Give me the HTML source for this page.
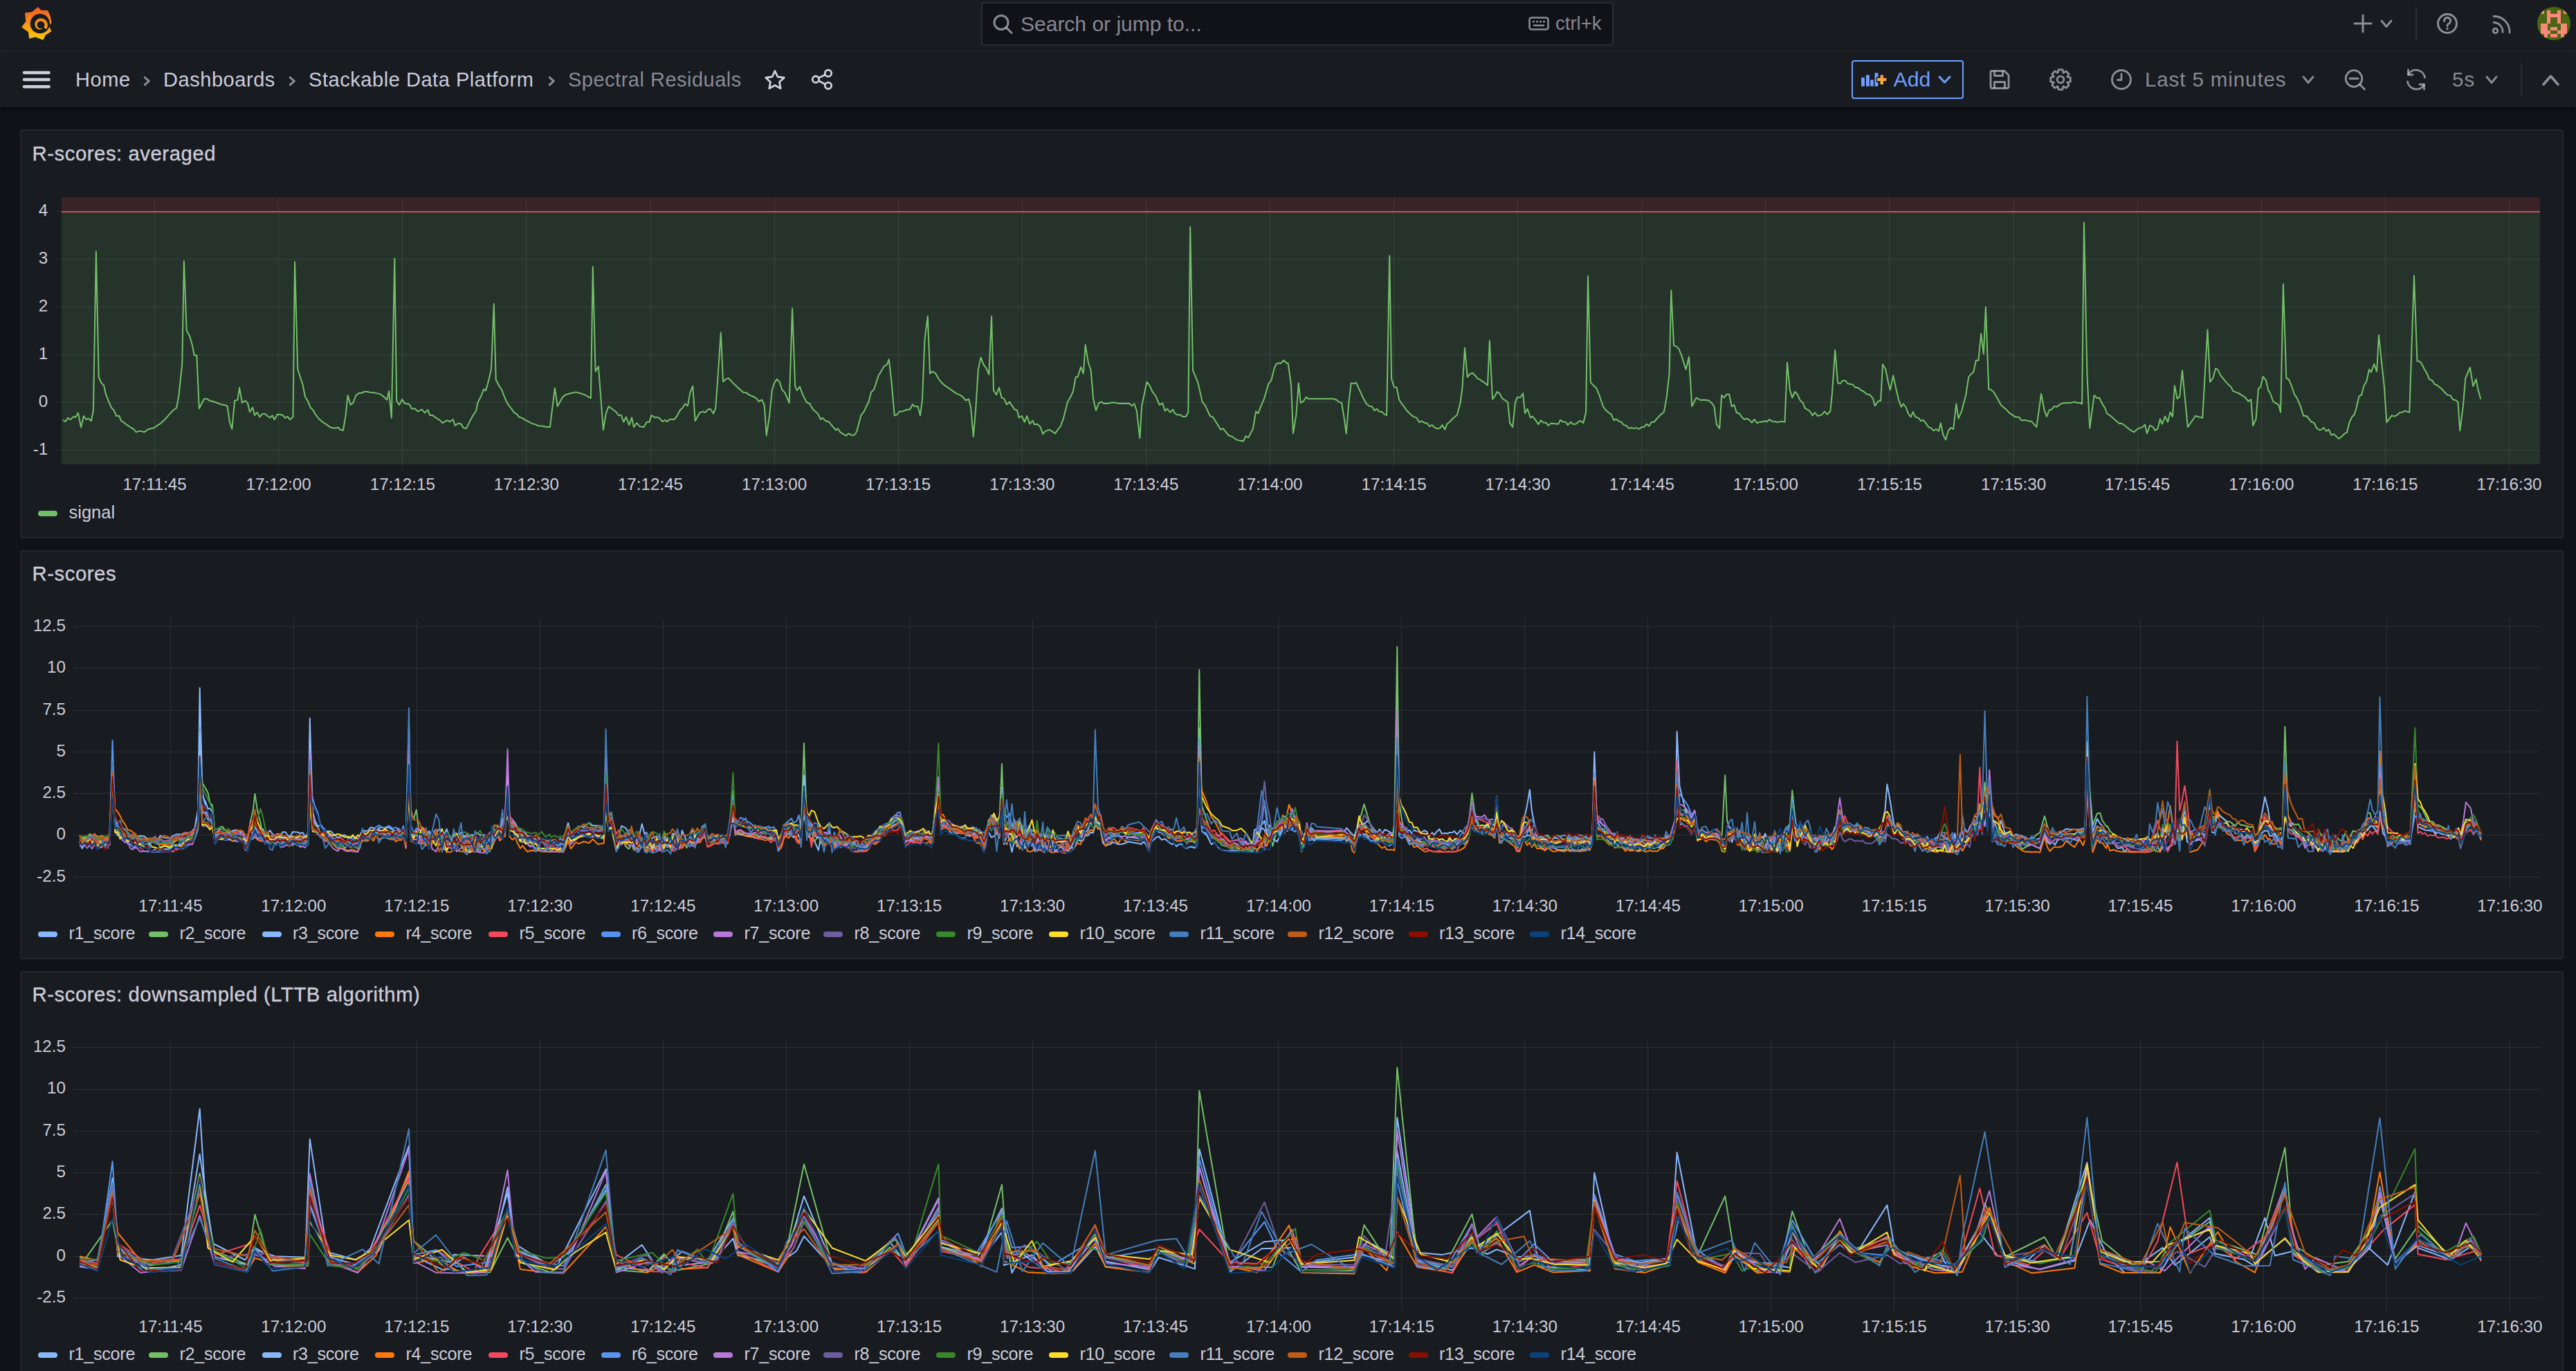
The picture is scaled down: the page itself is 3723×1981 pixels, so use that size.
<!DOCTYPE html><html><head><meta charset="utf-8"><title>Spectral Residuals - Dashboards - Grafana</title><style>
*{box-sizing:border-box;margin:0;padding:0}
html,body{width:3723px;height:1981px;overflow:hidden;background:#111217;font-family:"Liberation Sans", sans-serif;color:#ccccdc}
.abs{position:absolute}
.t{position:absolute;white-space:nowrap;line-height:1}
.bar{position:absolute;left:0;width:3723px;background:#181b1f}
.panel{position:absolute;left:29px;width:3676px;height:591px;background:#181b1f;border:2px solid #25272c;border-radius:4px}
svg{position:absolute;left:0;top:0;overflow:visible}
</style></head><body>
<div class="bar" style="top:0;height:75px;border-bottom:2px solid #2a2c32"></div>
<div class="bar" style="top:75px;height:80px;box-shadow:0 1px 5px rgba(0,0,0,0.9)"></div>
<svg width="110" height="70" style="left:0;top:0"><defs><linearGradient id="lg" gradientUnits="userSpaceOnUse" x1="0" y1="10" x2="0" y2="58"><stop offset="0" stop-color="#f05a28"/><stop offset="1" stop-color="#fbca0a"/></linearGradient></defs><path fill="url(#lg)" d="M55.0,10.1 L59.3,14.8 L69.1,15.0 L72.8,23.5 L74.6,32.8 L70.8,37.2 L74.4,45.2 L65.8,50.8 L62.4,57.7 L51.1,53.6 L42.2,55.7 L40.9,46.3 L31.1,39.3 L37.3,31.1 L36.0,18.5 L46.2,17.3Z"/><circle cx="57.8" cy="34.2" r="14.1" fill="#181b1f"/><path fill="url(#lg)" d="M66.74,42.29 L67.31,41.49 L67.79,40.64 L68.20,39.75 L68.51,38.83 L68.73,37.88 L68.85,36.92 L68.88,35.96 L68.82,35.00 L68.67,34.05 L68.42,33.13 L68.09,32.23 L67.67,31.38 L67.18,30.57 L66.60,29.82 L65.96,29.13 L65.26,28.51 L64.51,27.96 L63.70,27.49 L62.86,27.10 L61.99,26.79 L61.09,26.57 L60.18,26.44 L59.26,26.40 L58.35,26.45 L57.45,26.59 L56.56,26.81 L55.71,27.12 L54.90,27.51 L54.13,27.97 L53.41,28.51 L52.74,29.11 L52.14,29.77 L51.61,30.48 L51.21,31.27 L50.88,32.09 L50.64,32.92 L50.49,33.77 L50.41,34.62 L50.43,35.46 L50.52,36.29 L50.69,37.10 L50.95,37.88 L51.27,38.63 L51.66,39.33 L52.11,39.98 L52.62,40.58 L53.18,41.12 L53.78,41.60 L54.47,41.94 L55.18,42.20 L55.89,42.39 L56.60,42.50 L57.31,42.54 L58.00,42.50 L58.66,42.40 L59.30,42.23 L59.90,42.00 L60.46,41.71 L60.97,41.38 L61.43,41.01 L61.30,40.74 L60.81,40.94 L60.30,41.08 L59.78,41.18 L59.25,41.23 L58.72,41.22 L58.20,41.17 L57.68,41.06 L57.18,40.90 L56.69,40.70 L56.23,40.44 L55.79,40.15 L55.39,39.81 L55.02,39.44 L54.69,39.03 L54.40,38.59 L54.16,38.13 L53.96,37.64 L53.81,37.14 L53.71,36.63 L53.66,36.11 L53.66,35.59 L53.72,35.07 L53.82,34.56 L53.97,34.07 L54.17,33.59 L54.41,33.13 L54.70,32.70 L55.03,32.31 L55.40,31.95 L55.80,31.63 L56.23,31.36 L56.69,31.12 L57.16,30.94 L57.64,30.80 L58.14,30.71 L58.64,30.66 L59.14,30.67 L59.64,30.72 L60.13,30.83 L60.60,30.97 L61.05,31.17 L61.49,31.40 L61.92,31.64 L62.34,31.91 L62.73,32.23 L63.08,32.59 L63.41,32.98 L63.69,33.41 L63.94,33.86 L64.14,34.34 L64.29,34.84 L64.39,35.36 L64.45,35.89 L64.45,36.42 L64.40,36.96 L64.29,37.49 L64.14,38.01 L63.93,38.51 L63.67,39.00 L63.37,39.46Z"/></svg>
<div class="abs" style="left:1418px;top:3px;width:914px;height:63px;background:#111217;border:2px solid #2a2c33;border-radius:4px"></div>
<svg width="40" height="40" style="left:1430px;top:15px"><circle cx="17" cy="17.5" r="10" stroke="rgba(204,204,220,0.65)" stroke-width="3" fill="none"/><line x1="24.5" y1="25" x2="32" y2="32.5" stroke="rgba(204,204,220,0.65)" stroke-width="3" stroke-linecap="round"/></svg>
<div class="t" style="left:1475.0px;top:20.1px;font-size:30px;color:rgba(204,204,220,0.65);">Search or jump to...</div>
<svg width="34" height="24" style="left:2208px;top:22px"><rect x="2.5" y="3.5" width="27" height="17" rx="3" stroke="rgba(204,204,220,0.65)" stroke-width="2.6" fill="none"/><g fill="rgba(204,204,220,0.65)"><rect x="7" y="8" width="3" height="2.5"/><rect x="12" y="8" width="3" height="2.5"/><rect x="17" y="8" width="3" height="2.5"/><rect x="22" y="8" width="3" height="2.5"/><rect x="8" y="13.5" width="16" height="2.5"/></g></svg>
<div class="t" style="left:2248.0px;top:19.7px;font-size:27.5px;color:rgba(204,204,220,0.65);">ctrl+k</div>
<svg width="40" height="40" style="left:3395px;top:14px"><path d="M20,8 V32 M8,20 H32" stroke="rgba(204,204,220,0.65)" stroke-width="3" stroke-linecap="round"/></svg>
<svg width="22" height="16.5" style="left:3438px;top:25.5px"><path d="M4,4 L11.0,12.5 L18,4" stroke="rgba(204,204,220,0.65)" stroke-width="2.8" fill="none" stroke-linecap="round" stroke-linejoin="round"/></svg>
<div class="abs" style="left:3491px;top:10px;width:2px;height:48px;background:#2c2e35"></div>
<svg width="40" height="40" style="left:3517px;top:14px"><circle cx="20" cy="20" r="13.5" stroke="rgba(204,204,220,0.65)" stroke-width="3" fill="none"/><path d="M15.5,16.5 A4.6,4.6 0 1 1 21.5,20.5 Q20,21.3 20,23.5" stroke="rgba(204,204,220,0.65)" stroke-width="3" fill="none" stroke-linecap="round"/><circle cx="20" cy="27.5" r="1.8" fill="rgba(204,204,220,0.65)"/></svg>
<svg width="40" height="40" style="left:3596px;top:15px"><circle cx="10.5" cy="29.5" r="3.3" stroke="rgba(204,204,220,0.65)" stroke-width="2.8" fill="none"/><path d="M8,17.5 A13,13 0 0 1 21,31.5 M8,8.5 A22.5,22.5 0 0 1 31,32" stroke="rgba(204,204,220,0.65)" stroke-width="2.8" fill="none" stroke-linecap="round"/></svg>
<svg width="48" height="48" style="left:3667px;top:10px"><defs><clipPath id="av"><circle cx="24" cy="24" r="24"/></clipPath></defs><g clip-path="url(#av)"><rect width="48" height="48" fill="#4a6611"/><g shape-rendering="crispEdges"><rect x="4.80" y="5.07" width="4.9" height="4.9" fill="#fa877c"/><rect x="14.42" y="5.07" width="4.9" height="4.9" fill="#fa877c"/><rect x="28.85" y="5.07" width="4.9" height="4.9" fill="#fa877c"/><rect x="38.47" y="5.07" width="4.9" height="4.9" fill="#fa877c"/><rect x="14.42" y="9.88" width="4.9" height="4.9" fill="#fa877c"/><rect x="19.23" y="9.88" width="4.9" height="4.9" fill="#fa877c"/><rect x="24.04" y="9.88" width="4.9" height="4.9" fill="#fa877c"/><rect x="28.85" y="9.88" width="4.9" height="4.9" fill="#fa877c"/><rect x="14.42" y="14.69" width="4.9" height="4.9" fill="#fa877c"/><rect x="28.85" y="14.69" width="4.9" height="4.9" fill="#fa877c"/><rect x="14.42" y="19.50" width="4.9" height="4.9" fill="#fa877c"/><rect x="28.85" y="19.50" width="4.9" height="4.9" fill="#fa877c"/><rect x="4.80" y="24.31" width="4.9" height="4.9" fill="#fa877c"/><rect x="9.61" y="24.31" width="4.9" height="4.9" fill="#fa877c"/><rect x="33.66" y="24.31" width="4.9" height="4.9" fill="#fa877c"/><rect x="38.47" y="24.31" width="4.9" height="4.9" fill="#fa877c"/><rect x="4.80" y="29.12" width="4.9" height="4.9" fill="#fa877c"/><rect x="9.61" y="29.12" width="4.9" height="4.9" fill="#fa877c"/><rect x="19.23" y="29.12" width="4.9" height="4.9" fill="#fa877c"/><rect x="24.04" y="29.12" width="4.9" height="4.9" fill="#fa877c"/><rect x="33.66" y="29.12" width="4.9" height="4.9" fill="#fa877c"/><rect x="38.47" y="29.12" width="4.9" height="4.9" fill="#fa877c"/><rect x="4.80" y="33.93" width="4.9" height="4.9" fill="#fa877c"/><rect x="9.61" y="33.93" width="4.9" height="4.9" fill="#fa877c"/><rect x="14.42" y="33.93" width="4.9" height="4.9" fill="#fa877c"/><rect x="28.85" y="33.93" width="4.9" height="4.9" fill="#fa877c"/><rect x="33.66" y="33.93" width="4.9" height="4.9" fill="#fa877c"/><rect x="38.47" y="33.93" width="4.9" height="4.9" fill="#fa877c"/><rect x="9.61" y="38.74" width="4.9" height="4.9" fill="#fa877c"/><rect x="19.23" y="38.74" width="4.9" height="4.9" fill="#fa877c"/><rect x="24.04" y="38.74" width="4.9" height="4.9" fill="#fa877c"/><rect x="33.66" y="38.74" width="4.9" height="4.9" fill="#fa877c"/></g></g></svg>
<svg width="50" height="40" style="left:30px;top:95px"><g fill="#cfd0dc"><rect x="2.8" y="7.8" width="40" height="4.4" rx="2.2"/><rect x="2.8" y="17.8" width="40" height="4.4" rx="2.2"/><rect x="2.8" y="28" width="40" height="4.4" rx="2.2"/></g></svg>
<div class="t" style="left:109.0px;top:100.5px;font-size:29px;color:#ccccdc;letter-spacing:0.55px">Home</div>
<svg width="16" height="24" style="left:204px;top:104px"><path d="M5.2,7.8 L11.3,13.2 L5.2,18.6" stroke="rgba(204,204,220,0.65)" stroke-width="2.9" fill="none" stroke-linecap="round" stroke-linejoin="round"/></svg>
<div class="t" style="left:236.0px;top:100.5px;font-size:29px;color:#ccccdc;letter-spacing:0.55px">Dashboards</div>
<svg width="16" height="24" style="left:414px;top:104px"><path d="M5.2,7.8 L11.3,13.2 L5.2,18.6" stroke="rgba(204,204,220,0.65)" stroke-width="2.9" fill="none" stroke-linecap="round" stroke-linejoin="round"/></svg>
<div class="t" style="left:446.0px;top:100.5px;font-size:29px;color:#ccccdc;letter-spacing:0.55px">Stackable Data Platform</div>
<svg width="16" height="24" style="left:789px;top:104px"><path d="M5.2,7.8 L11.3,13.2 L5.2,18.6" stroke="rgba(204,204,220,0.65)" stroke-width="2.9" fill="none" stroke-linecap="round" stroke-linejoin="round"/></svg>
<div class="t" style="left:821.0px;top:100.5px;font-size:29px;color:rgba(204,204,220,0.65);letter-spacing:0.5px">Spectral Residuals</div>
<svg width="40" height="40" style="left:1100px;top:96px"><path d="M20,6.5 L24,15 L33.3,16.2 L26.5,22.6 L28.2,31.8 L20,27.3 L11.8,31.8 L13.5,22.6 L6.7,16.2 L16,15 Z" stroke="#cfd0dc" stroke-width="2.8" fill="none" stroke-linejoin="round"/></svg>
<svg width="40" height="40" style="left:1168px;top:95px"><g stroke="#cfd0dc" stroke-width="2.8" fill="none"><circle cx="29" cy="10.9" r="4.7"/><circle cx="10.9" cy="19.7" r="4.7"/><circle cx="29" cy="28.8" r="4.7"/><path d="M15.1,17.6 L24.8,13 M15.1,21.8 L24.8,26.7"/></g></svg>
<div class="abs" style="left:2676px;top:87px;width:162px;height:56px;border:2px solid #6e9fff;border-radius:4px;background:#181b1f"></div>
<svg width="50" height="40" style="left:2680px;top:95px"><defs><linearGradient id="pg" x1="0" y1="0" x2="0" y2="1"><stop offset="0" stop-color="#f5904a"/><stop offset="1" stop-color="#fbc02d"/></linearGradient></defs><g fill="#6e9fff" transform="translate(-2680,-95)"><rect x="2690" y="112.1" width="4.9" height="12.6" rx="0.8"/><rect x="2696.9" y="108.3" width="4.9" height="16.4" rx="0.8"/><rect x="2703.2" y="115.3" width="4.6" height="9.4" rx="0.8"/><rect x="2709.5" y="105.2" width="4.9" height="19.5" rx="0.8"/><path d="M2719.75,107 V123.3 M2711.8,114.9 H2727.6" stroke="#181b1f" stroke-width="7.5"/><path d="M2719.75,108.3 V121.9 M2713,114.9 H2726.3" stroke="url(#pg)" stroke-width="4.4"/></g></svg>
<div class="t" style="left:2736.5px;top:100.2px;font-size:30.2px;color:#6e9fff;">Add</div>
<svg width="23" height="16" style="left:2799px;top:107px"><path d="M4,4 L11.5,12 L19,4" stroke="#6e9fff" stroke-width="3" fill="none" stroke-linecap="round" stroke-linejoin="round"/></svg>
<svg width="40" height="40" style="left:2870px;top:95px"><g stroke="rgba(204,204,220,0.65)" stroke-width="2.8" fill="none" stroke-linejoin="round"><path d="M8,7.5 H27 L33,13.5 V30 A2.5,2.5 0 0 1 30.5,32.5 H9.5 A2.5,2.5 0 0 1 7,30 V9 A1.5,1.5 0 0 1 8,7.5 Z"/><path d="M12.5,7.5 V14.5 H24.5 V7.5"/><path d="M12.5,32.5 V23.5 H27.5 V32.5"/></g></svg>
<svg width="40" height="40" style="left:2958px;top:95px"><path d="M29.80,15.97 L34.31,17.10 L34.31,22.90 L29.80,24.03 L29.78,24.08 L32.17,28.07 L28.07,32.17 L24.08,29.78 L24.03,29.80 L22.90,34.31 L17.10,34.31 L15.97,29.80 L15.92,29.78 L11.93,32.17 L7.83,28.07 L10.22,24.08 L10.20,24.03 L5.69,22.90 L5.69,17.10 L10.20,15.97 L10.22,15.92 L7.83,11.93 L11.93,7.83 L15.92,10.22 L15.97,10.20 L17.10,5.69 L22.90,5.69 L24.03,10.20 L24.08,10.22 L28.07,7.83 L32.17,11.93 L29.78,15.92 Z" stroke="rgba(204,204,220,0.65)" stroke-width="2.8" fill="none" stroke-linejoin="round"/><circle cx="20" cy="20" r="4.8" stroke="rgba(204,204,220,0.65)" stroke-width="2.8" fill="none"/></svg>
<svg width="40" height="40" style="left:3046px;top:95px"><circle cx="20" cy="20" r="13.5" stroke="rgba(204,204,220,0.65)" stroke-width="2.8" fill="none"/><path d="M20,12 V20.5 H14.5" stroke="rgba(204,204,220,0.65)" stroke-width="2.8" fill="none" stroke-linecap="round" stroke-linejoin="round"/></svg>
<div class="t" style="left:3100.0px;top:100.0px;font-size:29.5px;color:rgba(204,204,220,0.65);letter-spacing:0.9px">Last 5 minutes</div>
<svg width="22" height="16.5" style="left:3325px;top:107px"><path d="M4,4 L11.0,12.5 L18,4" stroke="rgba(204,204,220,0.65)" stroke-width="2.8" fill="none" stroke-linecap="round" stroke-linejoin="round"/></svg>
<svg width="40" height="40" style="left:3383px;top:95px"><circle cx="19" cy="18.5" r="11.8" stroke="rgba(204,204,220,0.65)" stroke-width="2.8" fill="none"/><path d="M13,18.5 H25 M27.5,27 L34.5,34" stroke="rgba(204,204,220,0.65)" stroke-width="2.8" stroke-linecap="round"/></svg>
<svg width="40" height="40" style="left:3472px;top:95px"><g stroke="rgba(204,204,220,0.65)" stroke-width="2.8" fill="none" stroke-linecap="round" stroke-linejoin="round"><path d="M8.5,12.5 A13,13 0 0 1 32.5,17"/><path d="M31.5,27.5 A13,13 0 0 1 7.5,23"/><path d="M8.5,6 V13 H15"/><path d="M31.5,34 V27 H25"/></g></svg>
<div class="t" style="left:3544.0px;top:100.0px;font-size:29.5px;color:rgba(204,204,220,0.65);letter-spacing:1px">5s</div>
<svg width="22" height="16.5" style="left:3590px;top:107px"><path d="M4,4 L11.0,12.5 L18,4" stroke="rgba(204,204,220,0.65)" stroke-width="2.8" fill="none" stroke-linecap="round" stroke-linejoin="round"/></svg>
<div class="abs" style="left:3643px;top:91px;width:2px;height:48px;background:#2c2e35"></div>
<svg width="29" height="20" style="left:3672px;top:106px"><path d="M4,16 L14.5,4 L25,16" stroke="rgba(204,204,220,0.65)" stroke-width="3.5" fill="none" stroke-linecap="round" stroke-linejoin="round"/></svg>
<div class="panel" style="top:187.0px"></div>
<div class="t" style="left:46.5px;top:206.7px;font-size:29.3px;color:#ccccdc;-webkit-text-stroke:0.35px #ccccdc;letter-spacing:0.55px">R-scores: averaged</div>
<svg width="3723" height="1981" style="left:0;top:0;overflow:hidden"><rect x="89" y="285" width="3582" height="21.0" fill="#392228"/><rect x="89" y="306.0" width="3582" height="365.0" fill="#26332b"/><rect x="81.5" y="305" width="3589.5" height="1" fill="rgba(240,250,255,0.09)"/><rect x="81.5" y="374" width="3589.5" height="1" fill="rgba(240,250,255,0.09)"/><rect x="81.5" y="443" width="3589.5" height="1" fill="rgba(240,250,255,0.09)"/><rect x="81.5" y="512" width="3589.5" height="1" fill="rgba(240,250,255,0.09)"/><rect x="81.5" y="581" width="3589.5" height="1" fill="rgba(240,250,255,0.09)"/><rect x="81.5" y="650" width="3589.5" height="1" fill="rgba(240,250,255,0.09)"/><rect x="223" y="285" width="1" height="394" fill="rgba(240,250,255,0.09)"/><rect x="402" y="285" width="1" height="394" fill="rgba(240,250,255,0.09)"/><rect x="581" y="285" width="1" height="394" fill="rgba(240,250,255,0.09)"/><rect x="760" y="285" width="1" height="394" fill="rgba(240,250,255,0.09)"/><rect x="940" y="285" width="1" height="394" fill="rgba(240,250,255,0.09)"/><rect x="1119" y="285" width="1" height="394" fill="rgba(240,250,255,0.09)"/><rect x="1298" y="285" width="1" height="394" fill="rgba(240,250,255,0.09)"/><rect x="1477" y="285" width="1" height="394" fill="rgba(240,250,255,0.09)"/><rect x="1656" y="285" width="1" height="394" fill="rgba(240,250,255,0.09)"/><rect x="1835" y="285" width="1" height="394" fill="rgba(240,250,255,0.09)"/><rect x="2014" y="285" width="1" height="394" fill="rgba(240,250,255,0.09)"/><rect x="2193" y="285" width="1" height="394" fill="rgba(240,250,255,0.09)"/><rect x="2372" y="285" width="1" height="394" fill="rgba(240,250,255,0.09)"/><rect x="2551" y="285" width="1" height="394" fill="rgba(240,250,255,0.09)"/><rect x="2730" y="285" width="1" height="394" fill="rgba(240,250,255,0.09)"/><rect x="2910" y="285" width="1" height="394" fill="rgba(240,250,255,0.09)"/><rect x="3089" y="285" width="1" height="394" fill="rgba(240,250,255,0.09)"/><rect x="3268" y="285" width="1" height="394" fill="rgba(240,250,255,0.09)"/><rect x="3447" y="285" width="1" height="394" fill="rgba(240,250,255,0.09)"/><rect x="3626" y="285" width="1" height="394" fill="rgba(240,250,255,0.09)"/><rect x="89" y="305.0" width="3582" height="2" fill="#cb5161"/><path d="M91.1,606.9L94.6,609.2L98.1,603.9L101.9,606.3L106.3,601.9L109.2,603.0L113.0,596.6L117.1,617.6L120.9,601.0L124.4,606.0L128.2,604.8L131.9,608.3L134.9,592.8L138.9,363.2L142.7,545.0L146.5,553.4L150.0,556.7L153.0,569.8L157.3,580.6L161.1,589.3L164.6,592.8L168.1,601.0L172.2,601.0L175.1,608.0L179.2,610.7L184.5,614.7L190.3,618.5L193.2,620.0L196.7,624.4L201.1,622.9L204.0,622.9L208.4,624.4L214.2,620.2L223.0,618.0L227.4,614.7L231.8,612.1L239.0,605.4L244.9,598.7L249.3,593.7L255.1,589.3L258.6,570.4L263.3,525.1L265.9,377.2L269.7,477.8L274.1,485.8L277.9,498.8L280.8,513.4L284.3,513.4L287.8,590.2L295.1,576.2L298.9,576.2L303.3,579.1L307.6,580.0L313.5,582.0L319.3,584.4L325.1,585.3L328.6,587.0L331.8,609.2L335.3,620.0L339.1,579.1L343.5,577.7L346.1,560.1L349.9,582.0L354.3,579.1L357.8,582.0L361.0,595.2L365.1,588.8L368.0,600.1L371.8,595.7L375.3,602.5L379.1,598.1L383.5,598.1L386.4,601.0L390.2,603.4L393.7,600.4L396.6,606.3L401.0,598.7L408.3,599.6L412.1,603.9L415.6,601.9L419.1,606.3L423.5,602.5L426.1,378.6L430.2,533.3L433.7,544.1L437.5,555.8L441.0,573.3L445.4,580.6L448.6,588.8L452.1,592.3L456.5,599.6L460.3,604.5L466.7,610.3L471.0,612.7L476.9,617.1L481.3,618.5L485.6,618.5L488.6,617.6L492.1,620.9L495.9,622.0L499.6,600.4L502.6,571.2L506.6,585.0L510.4,582.0L514.2,571.8L518.6,568.0L522.1,568.0L526.5,566.0L530.9,566.0L535.2,566.9L541.1,567.4L546.9,568.9L551.3,570.4L555.7,574.2L559.2,577.7L562.1,565.1L565.9,603.9L570.3,373.4L573.2,579.1L577.0,585.0L581.1,577.1L584.9,582.9L589.2,583.5L592.2,585.0L595.1,590.8L599.4,590.2L603.8,594.6L609.7,591.7L614.0,596.6L618.4,592.3L621.3,600.1L625.1,600.1L631.6,604.8L635.4,606.9L639.7,611.2L646.1,607.4L650.5,609.2L654.9,606.0L657.8,615.0L662.2,611.8L666.6,612.7L669.5,618.0L673.9,619.1L680.0,606.9L683.1,601.0L688.1,593.7L690.4,582.0L694.8,573.3L699.2,562.5L702.1,564.5L706.5,548.5L710.0,533.3L713.8,439.1L716.7,548.5L721.1,557.2L724.9,562.5L728.4,571.8L732.2,580.6L735.7,586.4L740.0,591.7L743.0,596.1L746.5,598.1L750.2,602.5L754.6,603.9L759.0,606.9L763.4,609.2L769.2,612.1L775.1,613.6L776.5,615.0L782.4,615.6L786.7,616.2L790.2,617.1L794.9,617.1L801.9,560.7L805.7,587.0L813.0,573.9L817.4,570.4L824.7,568.3L832.0,566.6L837.8,568.0L845.1,570.4L853.9,575.3L856.8,385.6L860.6,536.8L864.9,529.5L871.9,621.4L875.7,598.1L879.5,587.3L885.9,591.7L890.3,595.2L894.1,600.4L897.6,599.6L901.4,609.8L904.9,602.5L909.3,614.1L913.1,603.4L916.0,617.1L920.1,611.2L924.5,616.2L930.6,617.1L934.7,609.8L938.5,609.8L941.4,600.1L945.8,603.0L951.0,603.0L953.7,604.8L957.4,609.2L961.0,606.9L964.2,609.2L967.7,606.0L974.4,606.0L978.5,601.0L982.8,592.8L986.6,589.3L990.1,583.5L993.9,586.4L997.4,567.4L1001.2,557.8L1004.7,608.3L1011.4,596.1L1015.8,594.6L1019.3,596.1L1023.1,591.7L1026.6,590.8L1031.0,597.5L1034.2,590.2L1037.1,550.8L1041.8,480.5L1045.0,551.4L1048.8,547.9L1052.9,546.4L1060.2,554.3L1067.5,561.0L1074.2,566.9L1078.6,567.4L1082.3,570.4L1089.4,573.3L1093.1,575.6L1096.9,580.0L1101.3,577.7L1104.8,585.8L1107.7,629.3L1112.1,601.0L1115.9,563.1L1119.4,552.8L1122.9,547.9L1126.7,552.0L1130.2,563.1L1134.0,566.9L1137.5,574.7L1140.7,582.0L1145.1,445.5L1149.2,558.7L1152.1,564.0L1155.9,558.7L1160.3,570.9L1166.1,581.5L1170.5,583.5L1174.3,590.8L1182.2,598.1L1186.0,606.0L1188.9,603.9L1193.2,608.3L1197.6,609.2L1207.8,621.4L1210.8,619.4L1214.8,624.9L1223.0,629.6L1226.5,626.4L1230.3,628.7L1234.7,628.7L1238.2,623.5L1244.3,600.4L1248.7,594.6L1255.7,580.0L1258.9,566.9L1263.0,563.1L1270.0,541.7L1271.7,539.7L1277.5,529.5L1281.9,526.6L1284.8,519.3L1288.6,552.8L1292.7,600.4L1296.5,599.0L1300.0,594.6L1303.8,594.6L1311.1,591.7L1314.9,591.7L1319.0,584.4L1322.2,587.3L1326.5,587.3L1330.0,600.4L1333.0,577.7L1336.5,490.1L1340.8,457.1L1344.0,539.7L1347.5,536.8L1351.9,539.1L1356.3,547.0L1360.7,552.8L1365.1,556.7L1372.4,561.6L1379.7,566.9L1382.6,568.9L1386.9,570.4L1391.3,573.3L1395.7,578.5L1400.1,576.8L1403.0,587.9L1406.8,631.0L1410.3,589.3L1413.8,533.9L1417.6,516.4L1421.4,526.6L1425.5,532.4L1429.3,541.2L1433.0,457.1L1436.0,564.5L1440.1,570.4L1443.9,560.1L1447.6,574.7L1451.2,576.2L1454.9,584.4L1459.0,580.6L1462.8,586.4L1466.3,591.7L1470.1,592.8L1472.5,603.4L1476.8,601.0L1480.9,609.8L1484.1,601.0L1488.2,612.7L1492.6,607.7L1494.9,613.6L1499.3,612.7L1503.7,617.1L1507.2,627.3L1511.0,622.9L1516.8,620.9L1525.0,626.4L1529.4,620.0L1532.9,615.6L1536.7,605.4L1543.1,580.6L1547.4,573.3L1550.9,565.4L1554.7,544.7L1557.7,544.7L1562.0,530.4L1565.8,539.7L1568.7,498.3L1572.8,523.7L1576.6,534.8L1580.1,576.2L1583.9,593.1L1588.3,582.0L1591.8,580.6L1595.0,582.9L1602.3,582.9L1607.3,581.5L1613.1,582.0L1616.6,582.9L1632.1,582.9L1635.6,586.4L1639.4,583.5L1642.9,593.7L1647.3,633.1L1650.2,586.4L1657.5,552.0L1661.3,556.7L1665.6,566.0L1670.0,571.8L1675.8,585.0L1680.2,582.6L1683.7,593.7L1686.9,590.8L1691.3,595.7L1695.4,591.7L1697.7,597.2L1702.1,599.6L1705.9,599.6L1709.4,601.9L1713.8,601.9L1717.3,596.1L1720.2,328.1L1724.0,534.8L1731.3,552.8L1737.7,580.6L1742.1,586.4L1748.8,601.0L1753.2,603.0L1764.3,620.9L1767.8,619.1L1775.1,628.7L1780.9,631.0L1788.2,636.0L1797.0,637.5L1800.5,630.2L1804.3,632.2L1811.0,619.1L1815.1,594.6L1818.3,597.5L1822.6,586.4L1827.0,576.2L1833.4,554.3L1837.2,549.9L1841.6,532.4L1844.5,526.0L1848.0,524.5L1850.9,525.1L1855.3,520.7L1860.0,525.1L1861.7,525.1L1866.1,557.2L1869.0,626.4L1873.3,599.6L1876.8,553.4L1879.8,582.0L1883.6,580.0L1887.9,573.9L1890.9,576.2L1927.3,576.2L1931.7,577.7L1934.6,580.6L1939.0,582.0L1942.8,604.8L1945.7,626.4L1949.2,583.5L1952.7,553.4L1956.5,554.3L1960.0,552.8L1964.7,563.1L1969.6,573.9L1974.9,583.5L1979.3,587.0L1982.8,587.3L1986.3,593.1L1990.1,590.8L1993.0,594.6L1997.4,595.2L2000.3,598.1L2004.1,600.1L2008.2,369.6L2011.1,547.6L2014.9,559.3L2018.7,560.1L2022.2,577.7L2026.0,583.5L2029.5,587.9L2032.4,592.3L2037.4,597.5L2042.6,601.9L2047.6,603.9L2051.4,610.3L2054.3,608.3L2059.2,611.2L2062.2,611.2L2066.0,616.2L2069.5,614.1L2073.2,617.6L2077.6,619.4L2081.4,618.5L2084.3,614.1L2088.4,620.6L2091.3,612.7L2095.1,609.8L2100.1,604.5L2105.9,599.6L2110.6,582.0L2113.5,560.1L2117.0,502.7L2120.8,545.0L2123.7,541.2L2127.8,538.8L2131.6,542.1L2135.1,546.4L2139.5,549.0L2143.3,551.4L2146.2,553.7L2150.0,556.7L2152.9,492.4L2157.0,576.8L2160.2,572.7L2163.7,566.0L2167.5,568.9L2171.0,575.6L2174.8,578.2L2179.2,581.2L2182.1,611.2L2186.2,617.1L2190.0,581.5L2192.9,573.9L2197.3,574.2L2201.1,568.3L2204.0,597.2L2207.5,590.8L2211.9,603.4L2214.8,601.6L2219.2,606.9L2223.5,613.3L2227.0,607.4L2230.8,610.7L2234.6,610.7L2237.5,615.0L2241.6,611.8L2252.1,612.7L2255.1,606.9L2259.4,609.8L2262.9,609.8L2265.9,614.1L2270.2,609.8L2273.1,612.7L2277.5,612.7L2281.9,608.9L2284.8,608.3L2288.3,611.2L2292.1,596.1L2295.0,399.1L2298.8,552.3L2303.8,557.8L2307.3,561.0L2312.0,572.7L2316.9,587.3L2320.4,592.3L2324.8,596.1L2328.6,598.7L2332.4,607.4L2335.3,605.4L2340.3,608.9L2343.2,609.8L2347.0,614.1L2350.5,615.0L2354.3,619.1L2357.8,618.0L2361.3,619.1L2365.1,618.0L2368.6,620.0L2373.0,617.1L2376.2,617.1L2379.7,612.7L2383.5,615.6L2387.0,609.8L2390.5,609.8L2395.1,604.5L2399.5,599.6L2405.0,595.2L2408.8,573.3L2412.6,539.7L2415.3,419.5L2419.1,499.5L2422.6,500.4L2426.4,504.1L2430.7,515.0L2436.6,533.9L2441.0,515.8L2445.3,587.0L2450.0,577.7L2451.7,574.7L2457.5,578.2L2461.9,577.7L2469.2,578.5L2473.6,582.0L2477.4,587.3L2480.9,613.3L2485.2,619.1L2488.2,570.9L2491.9,574.7L2495.4,569.8L2499.2,569.8L2502.7,587.3L2506.2,585.0L2510.0,596.6L2513.5,597.2L2517.3,602.5L2521.1,606.0L2525.2,604.8L2528.4,606.9L2531.9,610.7L2535.7,606.0L2539.2,611.2L2543.6,609.8L2546.5,609.8L2550.3,608.3L2553.8,609.2L2557.3,606.0L2561.1,608.9L2565.5,609.2L2569.0,610.3L2574.2,608.9L2579.5,609.8L2583.0,523.7L2586.8,563.1L2590.3,574.7L2594.1,566.0L2597.6,569.8L2602.0,579.1L2605.8,582.0L2608.7,589.9L2613.1,592.3L2616.6,595.2L2619.5,600.4L2623.0,596.1L2626.8,601.0L2632.6,599.6L2637.0,594.6L2640.8,598.7L2645.2,594.6L2647.8,570.4L2652.2,506.1L2656.0,553.4L2659.5,554.3L2663.3,549.9L2666.8,549.9L2670.5,554.3L2674.9,555.2L2677.8,555.8L2681.6,560.1L2685.1,560.1L2689.5,563.6L2693.9,566.0L2698.3,569.8L2702.6,570.4L2707.0,576.2L2709.9,586.4L2714.3,579.7L2718.1,579.1L2721.0,526.6L2725.1,533.3L2728.9,552.0L2731.8,563.6L2736.2,542.6L2740.6,563.1L2744.4,579.1L2747.9,587.9L2750.8,583.5L2754.6,588.5L2758.1,598.1L2761.6,602.5L2764.8,595.2L2768.3,602.5L2772.7,603.9L2776.2,608.3L2779.4,606.9L2782.9,610.7L2787.3,617.1L2790.8,618.5L2794.6,622.3L2798.4,620.0L2801.9,622.9L2804.8,611.2L2808.3,628.2L2812.1,635.5L2815.9,622.3L2819.4,618.0L2823.2,620.0L2827.2,583.5L2830.5,604.5L2834.8,595.2L2841.3,570.4L2845.1,545.0L2848.6,540.6L2852.1,537.7L2855.9,520.7L2859.4,520.7L2863.2,482.2L2866.9,511.4L2869.9,443.4L2874.2,562.5L2877.7,563.1L2882.1,567.4L2886.5,575.3L2892.3,585.8L2899.6,591.7L2904.0,596.6L2908.4,599.6L2912.8,602.5L2917.7,602.5L2921.5,607.4L2925.9,606.9L2931.7,608.3L2936.1,608.9L2943.4,617.1L2950.1,568.9L2954.5,592.3L2958.0,601.9L2961.8,592.3L2965.3,591.7L2968.8,587.0L2972.6,587.9L2977.0,584.4L2981.3,582.6L2987.2,582.0L2993.9,582.0L2998.0,580.6L3001.8,582.0L3006.1,582.0L3009.1,583.5L3012.0,321.5L3016.4,540.6L3020.2,618.5L3026.6,571.2L3030.9,575.3L3033.9,574.7L3040.0,586.4L3041.7,588.5L3045.2,597.5L3050.4,601.0L3056.3,606.3L3063.0,612.1L3066.5,611.8L3070.9,615.0L3075.2,618.5L3078.2,620.9L3084.0,624.4L3089.8,619.4L3096.5,617.1L3100.0,613.6L3103.0,626.4L3107.3,614.7L3111.7,617.1L3114.6,622.0L3118.4,619.4L3121.9,605.4L3124.8,612.7L3129.2,601.6L3133.0,609.8L3136.5,595.7L3140.0,601.9L3142.9,557.2L3146.7,576.2L3150.2,573.3L3154.0,535.3L3157.8,574.7L3161.9,617.1L3173.0,601.0L3183.2,603.9L3190.5,476.4L3194.0,552.0L3198.4,546.1L3202.2,532.4L3205.1,533.9L3209.5,542.6L3215.3,549.9L3219.7,554.9L3224.1,558.7L3227.6,565.4L3231.4,566.6L3235.7,568.3L3240.1,571.2L3244.5,573.9L3249.5,580.0L3253.2,577.1L3256.2,615.0L3260.5,605.4L3264.0,561.6L3267.0,559.3L3270.8,544.1L3275.1,549.9L3278.1,563.6L3281.0,568.0L3285.3,580.0L3289.7,582.9L3293.2,585.0L3296.1,595.7L3299.9,410.4L3304.3,546.4L3308.1,548.5L3311.6,556.7L3316.0,569.8L3319.5,574.7L3324.7,586.4L3329.1,601.0L3333.5,601.0L3340.8,609.8L3344.3,610.7L3348.1,618.5L3352.5,621.4L3355.4,620.6L3358.3,618.0L3362.1,622.9L3365.6,620.6L3369.4,628.7L3372.9,627.3L3380.2,634.0L3384.0,631.0L3388.4,626.7L3391.9,624.9L3395.4,610.7L3399.2,602.5L3402.7,599.0L3405.6,589.3L3409.4,572.7L3412.9,570.9L3416.7,556.7L3420.2,551.4L3424.0,533.9L3426.9,537.7L3431.3,526.0L3435.1,536.8L3438.0,484.3L3442.3,526.0L3445.8,558.1L3449.4,610.3L3456.7,600.4L3460.4,601.6L3463.9,600.1L3468.3,596.1L3472.1,595.7L3475.6,593.7L3482.3,595.7L3489.0,398.2L3493.4,521.6L3496.9,522.2L3499.8,525.1L3503.6,533.0L3507.7,539.7L3510.9,547.9L3515.3,549.9L3518.8,555.2L3522.6,556.7L3530.5,563.6L3534.3,568.0L3537.8,570.9L3541.3,571.2L3545.1,577.1L3549.5,578.5L3552.4,580.6L3555.3,622.3L3559.7,587.9L3563.2,547.0L3569.9,531.0L3574.3,558.1L3578.6,547.9L3581.5,563.1L3585.3,576.8" stroke="#73BF69" stroke-width="2" fill="none" stroke-linejoin="round"/></svg>
<div class="t" style="right:3653.7px;top:292.4px;font-size:24.2px;color:#ccccdc;text-align:right;">4</div>
<div class="t" style="right:3653.7px;top:361.2px;font-size:24.2px;color:#ccccdc;text-align:right;">3</div>
<div class="t" style="right:3653.7px;top:430.1px;font-size:24.2px;color:#ccccdc;text-align:right;">2</div>
<div class="t" style="right:3653.7px;top:499.0px;font-size:24.2px;color:#ccccdc;text-align:right;">1</div>
<div class="t" style="right:3653.7px;top:567.8px;font-size:24.2px;color:#ccccdc;text-align:right;">0</div>
<div class="t" style="right:3653.7px;top:636.7px;font-size:24.2px;color:#ccccdc;text-align:right;">-1</div>
<div class="t" style="left:-76.4px;width:600px;top:687.5px;font-size:24.2px;color:#ccccdc;text-align:center;">17:11:45</div>
<div class="t" style="left:102.7px;width:600px;top:687.5px;font-size:24.2px;color:#ccccdc;text-align:center;">17:12:00</div>
<div class="t" style="left:281.8px;width:600px;top:687.5px;font-size:24.2px;color:#ccccdc;text-align:center;">17:12:15</div>
<div class="t" style="left:460.9px;width:600px;top:687.5px;font-size:24.2px;color:#ccccdc;text-align:center;">17:12:30</div>
<div class="t" style="left:640.0px;width:600px;top:687.5px;font-size:24.2px;color:#ccccdc;text-align:center;">17:12:45</div>
<div class="t" style="left:819.1px;width:600px;top:687.5px;font-size:24.2px;color:#ccccdc;text-align:center;">17:13:00</div>
<div class="t" style="left:998.2px;width:600px;top:687.5px;font-size:24.2px;color:#ccccdc;text-align:center;">17:13:15</div>
<div class="t" style="left:1177.3px;width:600px;top:687.5px;font-size:24.2px;color:#ccccdc;text-align:center;">17:13:30</div>
<div class="t" style="left:1356.4px;width:600px;top:687.5px;font-size:24.2px;color:#ccccdc;text-align:center;">17:13:45</div>
<div class="t" style="left:1535.5px;width:600px;top:687.5px;font-size:24.2px;color:#ccccdc;text-align:center;">17:14:00</div>
<div class="t" style="left:1714.6px;width:600px;top:687.5px;font-size:24.2px;color:#ccccdc;text-align:center;">17:14:15</div>
<div class="t" style="left:1893.7px;width:600px;top:687.5px;font-size:24.2px;color:#ccccdc;text-align:center;">17:14:30</div>
<div class="t" style="left:2072.8px;width:600px;top:687.5px;font-size:24.2px;color:#ccccdc;text-align:center;">17:14:45</div>
<div class="t" style="left:2251.9px;width:600px;top:687.5px;font-size:24.2px;color:#ccccdc;text-align:center;">17:15:00</div>
<div class="t" style="left:2431.0px;width:600px;top:687.5px;font-size:24.2px;color:#ccccdc;text-align:center;">17:15:15</div>
<div class="t" style="left:2610.1px;width:600px;top:687.5px;font-size:24.2px;color:#ccccdc;text-align:center;">17:15:30</div>
<div class="t" style="left:2789.2px;width:600px;top:687.5px;font-size:24.2px;color:#ccccdc;text-align:center;">17:15:45</div>
<div class="t" style="left:2968.3px;width:600px;top:687.5px;font-size:24.2px;color:#ccccdc;text-align:center;">17:16:00</div>
<div class="t" style="left:3147.4px;width:600px;top:687.5px;font-size:24.2px;color:#ccccdc;text-align:center;">17:16:15</div>
<div class="t" style="left:3326.5px;width:600px;top:687.5px;font-size:24.2px;color:#ccccdc;text-align:center;">17:16:30</div>
<div class="abs" style="left:55px;top:738.2px;width:28px;height:8px;border-radius:4px;background:#73BF69"></div>
<div class="t" style="left:99.5px;top:728.4px;font-size:25.5px;color:#ccccdc;">signal</div>
<div class="panel" style="top:794.5px"></div>
<div class="t" style="left:46.5px;top:814.2px;font-size:29.3px;color:#ccccdc;-webkit-text-stroke:0.35px #ccccdc;letter-spacing:0.55px">R-scores</div>
<svg width="3723" height="1981" style="left:0;top:0;overflow:hidden"><rect x="105.5" y="905" width="3565.5" height="1" fill="rgba(240,250,255,0.09)"/><rect x="105.5" y="965" width="3565.5" height="1" fill="rgba(240,250,255,0.09)"/><rect x="105.5" y="1026" width="3565.5" height="1" fill="rgba(240,250,255,0.09)"/><rect x="105.5" y="1086" width="3565.5" height="1" fill="rgba(240,250,255,0.09)"/><rect x="105.5" y="1146" width="3565.5" height="1" fill="rgba(240,250,255,0.09)"/><rect x="105.5" y="1206" width="3565.5" height="1" fill="rgba(240,250,255,0.09)"/><rect x="105.5" y="1267" width="3565.5" height="1" fill="rgba(240,250,255,0.09)"/><rect x="246" y="894.0" width="1" height="393.0" fill="rgba(240,250,255,0.09)"/><rect x="424" y="894.0" width="1" height="393.0" fill="rgba(240,250,255,0.09)"/><rect x="602" y="894.0" width="1" height="393.0" fill="rgba(240,250,255,0.09)"/><rect x="780" y="894.0" width="1" height="393.0" fill="rgba(240,250,255,0.09)"/><rect x="958" y="894.0" width="1" height="393.0" fill="rgba(240,250,255,0.09)"/><rect x="1136" y="894.0" width="1" height="393.0" fill="rgba(240,250,255,0.09)"/><rect x="1314" y="894.0" width="1" height="393.0" fill="rgba(240,250,255,0.09)"/><rect x="1492" y="894.0" width="1" height="393.0" fill="rgba(240,250,255,0.09)"/><rect x="1670" y="894.0" width="1" height="393.0" fill="rgba(240,250,255,0.09)"/><rect x="1847" y="894.0" width="1" height="393.0" fill="rgba(240,250,255,0.09)"/><rect x="2025" y="894.0" width="1" height="393.0" fill="rgba(240,250,255,0.09)"/><rect x="2203" y="894.0" width="1" height="393.0" fill="rgba(240,250,255,0.09)"/><rect x="2381" y="894.0" width="1" height="393.0" fill="rgba(240,250,255,0.09)"/><rect x="2559" y="894.0" width="1" height="393.0" fill="rgba(240,250,255,0.09)"/><rect x="2737" y="894.0" width="1" height="393.0" fill="rgba(240,250,255,0.09)"/><rect x="2915" y="894.0" width="1" height="393.0" fill="rgba(240,250,255,0.09)"/><rect x="3093" y="894.0" width="1" height="393.0" fill="rgba(240,250,255,0.09)"/><rect x="3271" y="894.0" width="1" height="393.0" fill="rgba(240,250,255,0.09)"/><rect x="3449" y="894.0" width="1" height="393.0" fill="rgba(240,250,255,0.09)"/><rect x="3627" y="894.0" width="1" height="393.0" fill="rgba(240,250,255,0.09)"/><path d="M115.1,1215.7L118.6,1214.3L122.0,1210.4L125.8,1215.4L130.1,1208.8L133.0,1210.3L136.8,1211.8L140.9,1212.4L144.6,1214.3L148.1,1215.4L151.9,1214.0L155.7,1212.4L158.6,1209.6L162.6,1096.8L166.4,1201.3L170.2,1207.2L173.6,1201.8L176.5,1207.7L180.9,1207.4L184.6,1207.9L188.1,1209.8L191.6,1211.2L195.7,1210.2L198.6,1208.8L202.6,1207.7L207.8,1208.2L213.6,1212.0L216.5,1211.6L220.0,1212.4L224.4,1209.1L227.3,1214.4L231.6,1207.5L237.4,1210.5L246.1,1210.7L250.4,1207.6L254.8,1205.6L262.0,1205.8L267.8,1203.0L272.2,1204.0L278.0,1200.6L281.5,1196.7L286.1,1169.6L288.7,994.0L292.5,1146.0L296.8,1162.9L300.6,1184.8L303.5,1186.2L307.0,1183.4L310.4,1205.4L317.7,1197.7L321.5,1198.2L325.8,1199.0L330.2,1204.5L336.0,1200.3L341.8,1199.2L347.6,1202.5L351.0,1201.0L354.2,1212.3L357.7,1208.6L361.5,1200.4L365.8,1196.6L368.4,1197.5L372.2,1198.1L376.5,1199.3L380.0,1197.8L383.2,1205.3L387.3,1202.9L390.2,1199.9L393.9,1205.3L397.4,1207.0L401.2,1204.8L405.5,1206.5L408.4,1202.6L412.2,1202.1L415.7,1206.5L418.6,1210.5L422.9,1202.0L430.2,1202.4L433.9,1204.3L437.4,1202.9L440.9,1208.6L445.2,1206.0L447.8,1132.1L451.9,1189.0L455.4,1187.0L459.1,1194.0L462.6,1192.5L467.0,1199.4L470.2,1203.3L473.7,1201.1L478.0,1200.9L481.8,1205.1L488.1,1210.4L492.5,1207.5L498.3,1206.4L502.6,1210.8L507.0,1211.4L509.9,1207.2L513.4,1209.9L517.1,1212.8L520.9,1205.9L523.8,1199.6L527.9,1200.7L531.6,1200.4L535.4,1195.8L539.7,1196.0L543.2,1201.0L547.6,1196.3L551.9,1195.4L556.3,1196.6L562.1,1195.6L567.9,1199.5L572.2,1200.7L576.5,1197.5L580.0,1202.7L582.9,1202.5L586.7,1206.4L591.0,1047.5L593.9,1202.5L597.7,1204.8L601.8,1207.8L605.5,1206.4L609.9,1210.1L612.8,1199.4L615.7,1203.3L620.0,1201.4L624.4,1205.6L630.2,1203.9L634.5,1198.0L638.9,1199.6L641.8,1206.1L645.5,1197.8L651.9,1215.7L655.7,1204.5L660.0,1211.8L666.4,1202.5L670.8,1209.1L675.1,1205.4L678.0,1208.6L682.4,1205.9L686.7,1212.8L689.6,1203.0L694.0,1206.7L700.0,1206.3L703.2,1209.1L708.1,1204.5L710.4,1207.0L714.7,1204.9L719.1,1199.9L722.0,1202.9L726.3,1197.7L729.8,1191.1L733.6,1107.0L736.5,1180.1L740.8,1184.5L744.6,1189.4L748.1,1196.4L751.9,1197.3L755.3,1206.1L759.7,1205.4L762.6,1207.7L766.1,1209.0L769.8,1209.7L774.2,1214.2L778.5,1213.5L782.9,1215.9L788.7,1218.0L794.5,1220.2L795.9,1220.4L801.7,1217.5L806.1,1220.8L809.5,1219.1L814.2,1217.2L821.1,1202.5L824.9,1208.5L832.1,1209.1L836.5,1210.0L843.7,1204.9L851.0,1206.1L856.8,1204.9L864.0,1208.0L872.7,1207.0L875.6,1111.3L879.4,1196.9L883.7,1195.3L890.7,1222.8L894.5,1218.5L898.2,1213.1L904.6,1212.0L909.0,1215.8L912.7,1211.3L916.2,1223.5L920.0,1212.4L923.5,1219.5L927.8,1222.3L931.6,1210.4L934.5,1216.1L938.5,1227.5L942.9,1224.1L949.0,1222.7L953.0,1210.0L956.8,1218.6L959.7,1206.2L964.0,1217.5L969.3,1220.2L971.9,1220.0L975.6,1216.7L979.1,1220.9L982.3,1220.8L985.8,1217.4L992.4,1218.1L996.5,1218.4L1000.9,1213.4L1004.6,1218.1L1008.1,1211.2L1011.9,1212.6L1015.3,1210.4L1019.1,1210.3L1022.6,1215.0L1029.3,1214.9L1033.6,1212.9L1037.1,1212.2L1040.9,1215.4L1044.3,1212.3L1048.7,1215.8L1051.9,1213.9L1054.8,1206.5L1059.4,1181.4L1062.6,1204.0L1066.4,1205.6L1070.4,1205.9L1077.7,1207.5L1084.9,1207.3L1091.6,1211.0L1095.9,1210.1L1099.7,1209.6L1106.7,1211.1L1110.4,1210.4L1114.2,1212.2L1118.5,1206.1L1122.0,1208.9L1124.9,1218.3L1129.3,1214.4L1133.0,1195.9L1136.5,1206.7L1140.0,1204.2L1143.8,1207.4L1147.2,1210.1L1151.0,1199.6L1154.5,1200.7L1157.7,1199.5L1162.0,1178.1L1166.1,1197.0L1169.0,1209.6L1172.7,1210.9L1177.1,1215.4L1182.9,1228.5L1187.2,1203.6L1191.0,1210.2L1198.8,1214.6L1202.6,1222.6L1205.5,1225.4L1209.8,1211.2L1214.2,1210.9L1224.3,1220.9L1227.2,1221.6L1231.3,1218.0L1239.4,1214.9L1242.9,1219.3L1246.7,1219.4L1251.0,1227.0L1254.5,1221.7L1260.6,1215.5L1264.9,1211.8L1271.9,1210.4L1275.1,1204.4L1279.1,1205.0L1286.1,1194.2L1287.7,1194.6L1293.5,1191.5L1297.9,1189.2L1300.8,1187.8L1304.6,1202.1L1308.6,1214.1L1312.4,1214.3L1315.9,1213.8L1319.6,1211.4L1326.9,1209.9L1330.7,1214.9L1334.7,1211.6L1337.9,1207.7L1342.2,1208.0L1345.7,1217.7L1348.6,1210.1L1352.1,1175.4L1356.4,1142.6L1359.6,1196.4L1363.1,1191.8L1367.5,1195.5L1371.8,1198.5L1376.2,1196.2L1380.5,1201.2L1387.8,1201.9L1395.0,1202.4L1397.9,1202.9L1402.3,1206.0L1406.6,1206.4L1410.9,1210.4L1415.3,1204.3L1418.2,1211.1L1422.0,1230.1L1425.4,1216.2L1428.9,1192.3L1432.7,1179.7L1436.5,1179.3L1440.5,1187.3L1444.3,1186.9L1448.0,1172.1L1451.0,1220.0L1455.0,1207.8L1458.8,1205.8L1462.5,1199.1L1466.0,1187.2L1469.8,1223.4L1473.8,1218.4L1477.6,1206.0L1481.1,1225.8L1484.9,1220.3L1487.2,1210.2L1491.5,1204.9L1495.6,1207.5L1498.8,1210.4L1502.8,1223.3L1507.2,1222.5L1509.5,1213.6L1513.8,1229.2L1518.2,1220.3L1521.7,1230.1L1525.4,1222.7L1531.2,1220.7L1539.4,1230.6L1543.7,1228.8L1547.2,1225.8L1551.0,1218.0L1557.3,1209.2L1561.7,1213.5L1565.2,1204.9L1568.9,1201.7L1571.8,1200.1L1576.2,1190.7L1579.9,1192.4L1582.8,1181.0L1586.9,1187.8L1590.7,1195.8L1594.1,1209.1L1597.9,1214.4L1602.3,1209.6L1605.7,1213.2L1608.9,1208.6L1616.2,1207.6L1621.1,1212.4L1626.9,1212.8L1630.4,1209.3L1645.7,1211.3L1649.2,1216.1L1653.0,1208.1L1656.5,1212.6L1660.8,1226.2L1663.7,1205.7L1671.0,1199.1L1674.7,1202.4L1679.1,1203.3L1683.4,1207.4L1689.2,1210.7L1693.6,1207.3L1697.0,1212.5L1700.2,1211.2L1704.6,1207.9L1708.6,1208.3L1711.0,1209.9L1715.3,1211.0L1719.1,1210.9L1722.6,1209.2L1726.9,1212.2L1730.4,1206.3L1733.3,1052.0L1737.0,1193.1L1744.3,1200.5L1750.7,1206.0L1755.0,1205.6L1761.7,1207.5L1766.0,1212.5L1777.1,1215.9L1780.5,1215.9L1787.8,1220.0L1793.6,1222.8L1800.8,1215.4L1809.5,1230.7L1813.0,1199.1L1816.8,1197.1L1823.4,1192.1L1827.5,1186.0L1830.7,1202.3L1835.0,1192.4L1839.4,1198.4L1845.7,1194.0L1849.5,1189.1L1853.9,1179.7L1856.8,1179.8L1860.2,1182.4L1863.1,1184.2L1867.5,1194.4L1872.1,1186.3L1873.8,1182.0L1878.1,1194.4L1881.0,1217.7L1885.4,1208.8L1888.9,1195.4L1891.8,1204.2L1895.5,1196.4L1899.9,1201.0L1902.8,1204.7L1939.0,1200.1L1943.4,1200.3L1946.3,1196.4L1950.6,1201.5L1954.4,1205.4L1957.3,1208.3L1960.8,1197.4L1964.2,1195.0L1968.0,1192.8L1971.5,1191.4L1976.1,1185.9L1981.0,1191.7L1986.3,1198.9L1990.6,1202.9L1994.1,1198.2L1997.6,1204.8L2001.3,1198.8L2004.2,1199.8L2008.6,1202.1L2011.5,1203.9L2015.2,1202.9L2019.3,1006.6L2022.2,1193.5L2026.0,1196.1L2029.7,1194.8L2033.2,1200.5L2037.0,1199.5L2040.5,1204.0L2043.4,1199.5L2048.3,1201.5L2053.5,1203.2L2058.4,1200.0L2062.2,1201.6L2065.1,1209.1L2070.0,1203.1L2072.9,1206.4L2076.7,1201.4L2080.2,1198.1L2084.0,1204.9L2088.3,1203.8L2092.1,1204.5L2095.0,1202.9L2099.0,1202.8L2101.9,1200.9L2105.7,1205.7L2110.6,1199.8L2116.4,1205.0L2121.1,1201.2L2124.0,1197.9L2127.4,1195.0L2131.2,1201.7L2134.1,1201.2L2138.2,1200.7L2141.9,1200.2L2145.4,1198.1L2149.8,1203.8L2153.5,1200.3L2156.4,1200.4L2160.2,1200.9L2163.1,1197.2L2167.1,1200.5L2170.3,1202.7L2173.8,1201.7L2177.6,1202.7L2181.1,1200.7L2184.8,1209.1L2189.2,1202.6L2192.1,1208.2L2196.1,1208.8L2199.9,1208.1L2202.8,1209.8L2207.1,1206.7L2210.9,1207.2L2213.8,1206.9L2217.3,1210.9L2221.6,1205.7L2224.5,1208.3L2228.9,1210.0L2233.2,1211.7L2236.7,1211.6L2240.5,1212.8L2244.3,1211.7L2247.1,1211.0L2251.2,1211.3L2261.6,1214.2L2264.5,1211.4L2268.9,1213.2L2272.4,1211.0L2275.3,1207.8L2279.6,1210.3L2282.5,1212.7L2286.9,1215.7L2291.2,1215.0L2294.1,1215.7L2297.6,1210.8L2301.4,1212.8L2304.3,1134.3L2308.0,1208.7L2312.9,1207.7L2316.4,1205.1L2321.1,1210.7L2326.0,1211.3L2329.5,1212.8L2333.8,1209.5L2337.6,1213.9L2341.4,1215.0L2344.3,1215.4L2349.2,1215.8L2352.1,1211.8L2355.9,1207.7L2359.3,1215.6L2363.1,1211.8L2366.6,1213.2L2370.1,1216.3L2373.8,1214.4L2377.3,1214.5L2381.7,1215.2L2384.8,1209.6L2388.3,1217.3L2392.1,1212.8L2395.6,1212.1L2399.0,1214.1L2403.7,1211.8L2408.0,1209.5L2413.5,1210.4L2417.3,1206.5L2421.1,1200.7L2423.7,1127.3L2427.4,1192.0L2430.9,1190.0L2434.7,1193.1L2439.0,1194.5L2444.8,1202.7L2449.2,1196.4L2453.5,1210.7L2458.2,1208.4L2459.8,1204.4L2465.6,1208.9L2470.0,1207.2L2477.2,1211.1L2481.6,1208.0L2485.4,1208.6L2488.8,1216.7L2493.2,1221.4L2496.1,1201.8L2499.8,1205.1L2503.3,1217.1L2507.1,1198.6L2510.6,1213.8L2514.0,1200.0L2517.8,1217.7L2521.3,1209.0L2525.1,1218.9L2528.8,1210.2L2532.9,1215.1L2536.1,1210.8L2539.6,1209.4L2543.3,1214.9L2546.8,1216.9L2551.2,1204.4L2554.0,1215.4L2557.8,1218.1L2561.3,1208.7L2564.8,1221.9L2568.5,1220.5L2572.9,1215.0L2576.4,1216.5L2581.6,1219.3L2586.8,1223.4L2590.3,1190.1L2594.1,1194.4L2597.5,1211.9L2601.3,1207.4L2604.8,1202.2L2609.1,1207.0L2612.9,1203.0L2615.8,1207.1L2620.1,1216.9L2623.6,1220.7L2626.5,1211.9L2630.0,1217.4L2633.8,1222.0L2639.6,1209.0L2643.9,1210.0L2647.7,1208.4L2652.0,1195.0L2654.6,1202.9L2659.0,1175.0L2662.8,1197.6L2666.2,1198.8L2670.0,1196.5L2673.5,1193.9L2677.3,1195.6L2681.6,1194.3L2684.5,1200.9L2688.3,1199.6L2691.7,1199.5L2696.1,1199.4L2700.4,1201.5L2704.8,1203.0L2709.1,1200.3L2713.5,1203.8L2716.4,1208.6L2720.7,1188.3L2724.5,1169.9L2727.4,1133.2L2731.5,1155.4L2735.2,1179.5L2738.1,1195.6L2742.5,1189.6L2746.8,1199.2L2750.6,1204.8L2754.1,1209.1L2757.0,1205.1L2760.7,1207.0L2764.2,1211.3L2767.7,1214.3L2770.9,1217.7L2774.3,1212.5L2778.7,1217.3L2782.2,1214.4L2785.4,1211.6L2788.8,1214.9L2793.2,1218.2L2796.7,1211.3L2800.4,1209.8L2804.2,1201.8L2807.7,1207.8L2810.6,1212.5L2814.1,1211.0L2817.8,1230.0L2821.6,1221.0L2825.1,1204.0L2828.8,1219.4L2832.9,1206.8L2836.1,1202.2L2840.4,1210.6L2846.8,1196.0L2850.6,1189.4L2854.1,1179.0L2857.5,1181.2L2861.3,1173.0L2864.8,1185.2L2868.6,1191.7L2872.3,1167.7L2875.2,1177.5L2879.6,1187.9L2883.1,1187.2L2887.4,1206.6L2891.8,1185.4L2897.6,1203.3L2904.8,1203.5L2909.1,1208.1L2913.5,1205.5L2917.8,1206.7L2922.8,1208.0L2926.5,1212.1L2930.9,1212.4L2936.7,1210.6L2941.0,1213.3L2948.3,1211.5L2954.9,1191.3L2959.3,1197.3L2962.8,1205.4L2966.5,1204.8L2970.0,1205.1L2973.5,1208.9L2977.3,1203.1L2981.6,1200.9L2986.0,1197.8L2991.8,1198.4L2998.4,1198.5L3002.5,1198.8L3006.2,1198.6L3010.6,1197.0L3013.5,1203.1L3016.4,1071.6L3020.7,1187.1L3024.5,1211.5L3030.9,1193.7L3035.2,1196.7L3038.1,1200.8L3044.2,1202.6L3045.9,1204.4L3049.4,1207.3L3054.6,1209.4L3060.4,1210.0L3067.1,1214.3L3070.5,1211.5L3074.9,1214.1L3079.2,1216.7L3082.1,1217.6L3087.9,1221.3L3093.7,1212.1L3100.4,1222.4L3103.9,1218.0L3106.8,1221.1L3111.1,1215.6L3115.5,1206.2L3118.4,1202.9L3122.1,1216.9L3125.6,1194.7L3128.5,1212.1L3132.9,1205.4L3136.6,1207.6L3140.1,1206.1L3143.6,1219.9L3146.5,1191.8L3150.2,1200.8L3153.7,1200.8L3157.5,1195.4L3161.3,1217.1L3165.3,1216.9L3176.3,1214.0L3186.5,1209.1L3193.7,1179.0L3197.2,1202.8L3201.5,1203.3L3205.3,1191.5L3208.2,1190.1L3212.6,1196.1L3218.4,1199.6L3222.7,1198.6L3227.1,1195.8L3230.5,1204.2L3234.3,1203.4L3238.7,1204.0L3243.0,1211.5L3247.3,1206.7L3252.3,1210.7L3256.0,1205.4L3258.9,1221.2L3263.3,1219.4L3266.8,1204.4L3269.7,1203.1L3273.4,1200.0L3277.8,1201.0L3280.7,1208.3L3283.6,1207.4L3287.9,1209.0L3292.3,1207.5L3295.8,1211.0L3298.7,1215.2L3302.4,1104.1L3306.8,1199.2L3310.5,1198.6L3314.0,1202.4L3318.4,1208.9L3321.8,1209.7L3327.1,1213.6L3331.4,1216.7L3335.8,1214.6L3343.0,1212.9L3346.5,1224.1L3350.3,1227.7L3354.6,1226.7L3357.5,1229.9L3360.4,1219.6L3364.2,1231.2L3367.6,1230.1L3371.4,1220.2L3374.9,1220.7L3382.1,1224.8L3385.9,1220.7L3390.3,1224.2L3393.7,1218.6L3397.2,1221.5L3401.0,1216.6L3404.5,1217.8L3407.4,1209.5L3411.1,1201.0L3414.6,1196.5L3418.4,1190.6L3421.9,1191.7L3425.6,1188.3L3428.5,1193.2L3432.9,1198.5L3436.6,1202.3L3439.5,1171.9L3443.9,1203.7L3447.4,1208.4L3450.8,1219.5L3458.1,1215.9L3461.8,1217.5L3465.3,1213.8L3469.7,1215.0L3473.4,1214.7L3476.9,1214.2L3483.6,1213.1L3490.3,1114.0L3494.6,1194.9L3498.1,1196.3L3501.0,1197.5L3504.8,1199.4L3508.8,1199.8L3512.0,1200.6L3516.3,1201.1L3519.8,1203.5L3523.6,1202.7L3531.4,1205.9L3535.2,1204.5L3538.7,1207.9L3542.2,1212.3L3545.9,1206.3L3550.3,1206.1L3553.2,1201.2L3556.1,1213.0L3560.4,1198.7L3563.9,1187.7L3570.6,1186.7L3574.9,1199.7L3579.3,1199.4L3582.1,1205.6L3585.9,1204.3" stroke="#8AB8FF" stroke-width="2" fill="none" stroke-linejoin="round"/><path d="M115.1,1207.5L118.6,1211.9L122.0,1212.7L125.8,1209.3L130.1,1205.0L133.0,1207.7L136.8,1206.7L140.9,1208.4L144.6,1210.8L148.1,1208.2L151.9,1211.0L155.7,1210.8L158.6,1206.0L162.6,1154.9L166.4,1193.3L170.2,1195.1L173.6,1198.4L176.5,1198.1L180.9,1203.6L184.6,1204.6L188.1,1209.0L191.6,1210.3L195.7,1207.4L198.6,1212.5L202.6,1211.8L207.8,1213.6L213.6,1217.0L216.5,1220.3L220.0,1216.6L224.4,1218.1L227.3,1216.6L231.6,1223.9L237.4,1221.9L246.1,1222.4L250.4,1218.7L254.8,1213.8L262.0,1212.6L267.8,1211.6L272.2,1209.5L278.0,1206.7L281.5,1201.8L286.1,1182.7L288.7,1087.2L292.5,1131.9L296.8,1138.5L300.6,1145.8L303.5,1160.3L307.0,1163.5L310.4,1199.2L317.7,1195.7L321.5,1194.3L325.8,1200.3L330.2,1203.7L336.0,1210.2L341.8,1209.9L347.6,1213.4L351.0,1213.9L354.2,1217.9L357.7,1219.2L361.5,1188.7L365.8,1170.7L368.4,1146.9L372.2,1172.1L376.5,1188.7L380.0,1207.2L383.2,1216.9L387.3,1214.7L390.2,1219.0L393.9,1212.8L397.4,1220.5L401.2,1218.2L405.5,1217.8L408.4,1216.6L412.2,1218.7L415.7,1214.8L418.6,1220.7L422.9,1218.7L430.2,1217.4L433.9,1218.0L437.4,1219.2L440.9,1218.3L445.2,1213.4L447.8,1097.0L451.9,1188.6L455.4,1190.2L459.1,1199.4L462.6,1206.9L467.0,1210.4L470.2,1210.4L473.7,1211.6L478.0,1215.9L481.8,1217.5L488.1,1217.1L492.5,1218.9L498.3,1225.5L502.6,1223.0L507.0,1222.8L509.9,1221.1L513.4,1224.4L517.1,1225.8L520.9,1216.6L523.8,1207.7L527.9,1209.4L531.6,1209.5L535.4,1202.9L539.7,1204.6L543.2,1203.3L547.6,1203.6L551.9,1203.7L556.3,1200.2L562.1,1203.0L567.9,1201.6L572.2,1205.6L576.5,1204.6L580.0,1210.1L582.9,1201.9L586.7,1218.8L591.0,1097.6L593.9,1170.0L597.7,1184.6L601.8,1170.0L605.5,1201.3L609.9,1198.0L612.8,1203.5L615.7,1202.9L620.0,1202.7L624.4,1208.4L630.2,1205.2L634.5,1212.0L638.9,1198.0L641.8,1223.0L645.5,1225.4L651.9,1217.8L655.7,1218.5L660.0,1220.1L666.4,1220.6L670.8,1231.5L675.1,1219.6L678.0,1230.5L682.4,1218.9L686.7,1223.1L689.6,1224.8L694.0,1230.1L700.0,1213.0L703.2,1220.9L708.1,1230.3L710.4,1202.0L714.7,1192.1L719.1,1194.6L722.0,1202.1L726.3,1200.0L729.8,1190.0L733.6,1180.3L736.5,1193.2L740.8,1200.0L744.6,1207.1L748.1,1210.3L751.9,1215.9L755.3,1217.0L759.7,1216.6L762.6,1219.0L766.1,1222.1L769.8,1222.3L774.2,1225.1L778.5,1227.8L782.9,1228.7L788.7,1228.7L794.5,1224.3L795.9,1230.0L801.7,1225.3L806.1,1225.2L809.5,1228.7L814.2,1228.2L821.1,1207.3L824.9,1216.3L832.1,1209.8L836.5,1210.0L843.7,1207.2L851.0,1206.3L856.8,1208.7L864.0,1209.6L872.7,1212.2L875.6,1103.4L879.4,1201.5L883.7,1196.0L890.7,1226.8L894.5,1220.7L898.2,1209.4L904.6,1223.4L909.0,1226.6L912.7,1219.6L916.2,1228.4L920.0,1225.0L923.5,1230.0L927.8,1221.0L931.6,1227.3L934.5,1230.2L938.5,1221.3L942.9,1220.7L949.0,1227.5L953.0,1217.0L956.8,1229.5L959.7,1203.6L964.0,1216.7L969.3,1216.5L971.9,1214.5L975.6,1217.1L979.1,1227.3L982.3,1215.7L985.8,1212.7L992.4,1225.1L996.5,1216.0L1000.9,1221.3L1004.6,1210.6L1008.1,1213.4L1011.9,1209.8L1015.3,1207.2L1019.1,1207.8L1022.6,1217.4L1029.3,1217.1L1033.6,1214.0L1037.1,1213.1L1040.9,1212.6L1044.3,1217.1L1048.7,1215.1L1051.9,1211.6L1054.8,1203.3L1059.4,1142.2L1062.6,1206.8L1066.4,1202.0L1070.4,1204.2L1077.7,1204.0L1084.9,1205.0L1091.6,1205.6L1095.9,1208.4L1099.7,1207.4L1106.7,1210.9L1110.4,1211.9L1114.2,1208.6L1118.5,1209.4L1122.0,1214.7L1124.9,1223.4L1129.3,1214.8L1133.0,1202.0L1136.5,1199.8L1140.0,1201.5L1143.8,1203.5L1147.2,1199.7L1151.0,1207.5L1154.5,1204.7L1157.7,1202.6L1162.0,1074.0L1166.1,1191.1L1169.0,1189.4L1172.7,1200.3L1177.1,1216.0L1182.9,1207.9L1187.2,1219.5L1191.0,1203.0L1198.8,1205.1L1202.6,1218.9L1205.5,1220.4L1209.8,1218.6L1214.2,1217.1L1224.3,1218.5L1227.2,1212.0L1231.3,1220.0L1239.4,1223.2L1242.9,1222.2L1246.7,1226.3L1251.0,1226.4L1254.5,1219.0L1260.6,1218.0L1264.9,1215.2L1271.9,1209.2L1275.1,1207.1L1279.1,1208.0L1286.1,1194.0L1287.7,1197.2L1293.5,1193.2L1297.9,1191.8L1300.8,1190.6L1304.6,1201.8L1308.6,1214.5L1312.4,1209.0L1315.9,1211.0L1319.6,1210.8L1326.9,1214.5L1330.7,1211.1L1334.7,1211.2L1337.9,1207.7L1342.2,1209.7L1345.7,1212.9L1348.6,1206.1L1352.1,1180.9L1356.4,1153.6L1359.6,1193.0L1363.1,1196.4L1367.5,1196.6L1371.8,1196.8L1376.2,1199.2L1380.5,1198.1L1387.8,1197.7L1395.0,1200.7L1397.9,1201.2L1402.3,1201.8L1406.6,1200.6L1410.9,1207.7L1415.3,1202.3L1418.2,1207.9L1422.0,1216.0L1425.4,1211.5L1428.9,1191.8L1432.7,1199.8L1436.5,1192.7L1440.5,1204.9L1444.3,1186.9L1448.0,1103.5L1451.0,1189.0L1455.0,1201.5L1458.8,1201.8L1462.5,1199.4L1466.0,1208.8L1469.8,1186.8L1473.8,1201.1L1477.6,1206.5L1481.1,1198.7L1484.9,1207.8L1487.2,1201.2L1491.5,1199.0L1495.6,1202.8L1498.8,1214.1L1502.8,1211.6L1507.2,1207.3L1509.5,1209.0L1513.8,1210.0L1518.2,1218.6L1521.7,1213.5L1525.4,1215.4L1531.2,1214.8L1539.4,1215.9L1543.7,1217.4L1547.2,1215.9L1551.0,1213.3L1557.3,1193.0L1561.7,1195.2L1565.2,1200.8L1568.9,1188.6L1571.8,1188.5L1576.2,1187.4L1579.9,1188.9L1582.8,1175.1L1586.9,1181.9L1590.7,1187.3L1594.1,1197.2L1597.9,1207.0L1602.3,1204.3L1605.7,1203.7L1608.9,1209.1L1616.2,1205.4L1621.1,1201.2L1626.9,1203.1L1630.4,1205.9L1645.7,1203.5L1649.2,1210.0L1653.0,1205.4L1656.5,1207.2L1660.8,1219.9L1663.7,1208.0L1671.0,1193.3L1674.7,1193.0L1679.1,1201.2L1683.4,1200.8L1689.2,1210.3L1693.6,1210.6L1697.0,1208.9L1700.2,1209.4L1704.6,1210.9L1708.6,1211.5L1711.0,1212.9L1715.3,1211.5L1719.1,1209.8L1722.6,1215.0L1726.9,1218.3L1730.4,1193.3L1733.3,967.7L1737.0,1164.3L1744.3,1185.7L1750.7,1203.9L1755.0,1211.0L1761.7,1215.1L1766.0,1221.1L1777.1,1224.4L1780.5,1225.1L1787.8,1223.4L1793.6,1230.1L1800.8,1229.9L1809.5,1230.2L1813.0,1225.9L1816.8,1227.5L1823.4,1222.8L1827.5,1212.4L1830.7,1211.8L1835.0,1203.1L1839.4,1222.5L1845.7,1198.7L1849.5,1207.3L1853.9,1183.9L1856.8,1191.5L1860.2,1198.6L1863.1,1187.6L1867.5,1193.1L1872.1,1193.0L1873.8,1192.9L1878.1,1203.4L1881.0,1230.1L1885.4,1218.3L1888.9,1202.2L1891.8,1214.4L1895.5,1213.6L1899.9,1212.6L1902.8,1209.1L1939.0,1211.9L1943.4,1211.0L1946.3,1216.9L1950.6,1210.4L1954.4,1220.2L1957.3,1227.6L1960.8,1207.7L1964.2,1186.5L1968.0,1175.1L1971.5,1161.9L1976.1,1177.8L1981.0,1192.9L1986.3,1207.7L1990.6,1214.7L1994.1,1212.0L1997.6,1213.4L2001.3,1214.4L2004.2,1211.5L2008.6,1218.9L2011.5,1216.8L2015.2,1188.8L2019.3,934.4L2022.2,1160.4L2026.0,1184.4L2029.7,1201.9L2033.2,1211.1L2037.0,1208.5L2040.5,1213.6L2043.4,1215.5L2048.3,1214.2L2053.5,1216.0L2058.4,1217.7L2062.2,1217.7L2065.1,1218.3L2070.0,1216.5L2072.9,1216.4L2076.7,1215.7L2080.2,1217.5L2084.0,1220.0L2088.3,1220.2L2092.1,1217.3L2095.0,1212.0L2099.0,1214.8L2101.9,1215.9L2105.7,1211.5L2110.6,1214.5L2116.4,1208.4L2121.1,1196.1L2124.0,1178.2L2127.4,1146.2L2131.2,1173.4L2134.1,1183.2L2138.2,1193.6L2141.9,1197.4L2145.4,1195.8L2149.8,1189.7L2153.5,1186.7L2156.4,1189.9L2160.2,1192.6L2163.1,1174.0L2167.1,1205.6L2170.3,1204.7L2173.8,1200.7L2177.6,1204.6L2181.1,1199.9L2184.8,1201.4L2189.2,1205.5L2192.1,1211.6L2196.1,1214.4L2199.9,1207.1L2202.8,1201.4L2207.1,1201.0L2210.9,1200.2L2213.8,1206.7L2217.3,1207.0L2221.6,1207.8L2224.5,1211.4L2228.9,1209.4L2233.2,1207.7L2236.7,1206.8L2240.5,1211.5L2244.3,1211.3L2247.1,1208.7L2251.2,1207.1L2261.6,1214.6L2264.5,1210.8L2268.9,1210.2L2272.4,1208.2L2275.3,1214.0L2279.6,1209.7L2282.5,1212.6L2286.9,1206.9L2291.2,1210.2L2294.1,1211.3L2297.6,1212.8L2301.4,1205.2L2304.3,1120.0L2308.0,1196.0L2312.9,1194.8L2316.4,1199.1L2321.1,1201.7L2326.0,1207.8L2329.5,1209.6L2333.8,1209.6L2337.6,1211.3L2341.4,1211.2L2344.3,1210.0L2349.2,1213.7L2352.1,1216.1L2355.9,1213.7L2359.3,1220.4L2363.1,1222.0L2366.6,1216.0L2370.1,1216.8L2373.8,1215.9L2377.3,1219.5L2381.7,1220.8L2384.8,1219.4L2388.3,1215.4L2392.1,1219.8L2395.6,1217.4L2399.0,1219.1L2403.7,1216.6L2408.0,1210.2L2413.5,1209.3L2417.3,1203.4L2421.1,1188.5L2423.7,1133.2L2427.4,1166.8L2430.9,1170.9L2434.7,1170.3L2439.0,1179.4L2444.8,1186.1L2449.2,1174.1L2453.5,1206.0L2458.2,1206.3L2459.8,1204.2L2465.6,1202.5L2470.0,1204.9L2477.2,1205.7L2481.6,1205.2L2485.4,1208.5L2488.8,1205.8L2493.2,1120.3L2496.1,1186.0L2499.8,1196.6L2503.3,1202.3L2507.1,1206.6L2510.6,1207.8L2514.0,1204.6L2517.8,1217.3L2521.3,1214.6L2525.1,1208.1L2528.8,1220.8L2532.9,1225.5L2536.1,1216.5L2539.6,1228.7L2543.3,1214.5L2546.8,1225.0L2551.2,1221.7L2554.0,1216.9L2557.8,1219.7L2561.3,1229.2L2564.8,1217.7L2568.5,1221.0L2572.9,1224.7L2576.4,1212.9L2581.6,1197.9L2586.8,1190.6L2590.3,1142.0L2594.1,1178.9L2597.5,1202.0L2601.3,1197.1L2604.8,1203.4L2609.1,1201.4L2612.9,1204.9L2615.8,1213.5L2620.1,1208.2L2623.6,1212.5L2626.5,1210.7L2630.0,1217.0L2633.8,1212.3L2639.6,1220.6L2643.9,1210.3L2647.7,1209.9L2652.0,1210.8L2654.6,1198.2L2659.0,1172.4L2662.8,1190.0L2666.2,1199.3L2670.0,1193.3L2673.5,1190.6L2677.3,1197.6L2681.6,1195.7L2684.5,1190.9L2688.3,1194.4L2691.7,1199.3L2696.1,1195.9L2700.4,1197.4L2704.8,1200.1L2709.1,1201.2L2713.5,1204.2L2716.4,1211.3L2720.7,1207.4L2724.5,1204.4L2727.4,1181.1L2731.5,1180.4L2735.2,1193.9L2738.1,1203.9L2742.5,1189.4L2746.8,1197.8L2750.6,1205.2L2754.1,1210.1L2757.0,1209.9L2760.7,1207.4L2764.2,1216.8L2767.7,1216.1L2770.9,1214.7L2774.3,1220.4L2778.7,1215.5L2782.2,1226.3L2785.4,1222.1L2788.8,1221.3L2793.2,1226.4L2796.7,1224.9L2800.4,1228.9L2804.2,1228.6L2807.7,1224.6L2810.6,1222.1L2814.1,1231.0L2817.8,1230.5L2821.6,1231.2L2825.1,1217.0L2828.8,1230.3L2832.9,1205.7L2836.1,1223.2L2840.4,1207.8L2846.8,1208.7L2850.6,1191.9L2854.1,1188.4L2857.5,1182.2L2861.3,1161.5L2864.8,1184.9L2868.6,1130.3L2872.3,1165.5L2875.2,1166.3L2879.6,1192.1L2883.1,1196.5L2887.4,1200.4L2891.8,1203.5L2897.6,1207.8L2904.8,1211.0L2909.1,1216.3L2913.5,1217.0L2917.8,1219.2L2922.8,1226.7L2926.5,1224.9L2930.9,1221.4L2936.7,1215.5L2941.0,1207.9L2948.3,1202.7L2954.9,1179.3L2959.3,1194.8L2962.8,1205.6L2966.5,1208.0L2970.0,1210.3L2973.5,1210.5L2977.3,1205.5L2981.6,1206.8L2986.0,1206.1L2991.8,1204.5L2998.4,1205.7L3002.5,1201.2L3006.2,1202.5L3010.6,1201.3L3013.5,1203.3L3016.4,1084.7L3020.7,1145.7L3024.5,1192.9L3030.9,1175.4L3035.2,1174.8L3038.1,1184.7L3044.2,1194.3L3045.9,1193.7L3049.4,1200.8L3054.6,1205.5L3060.4,1209.4L3067.1,1211.4L3070.5,1213.9L3074.9,1215.2L3079.2,1218.7L3082.1,1216.5L3087.9,1219.1L3093.7,1215.1L3100.4,1219.1L3103.9,1217.5L3106.8,1218.0L3111.1,1208.8L3115.5,1210.8L3118.4,1205.6L3122.1,1214.4L3125.6,1208.5L3128.5,1213.9L3132.9,1197.8L3136.6,1209.4L3140.1,1202.5L3143.6,1196.8L3146.5,1190.4L3150.2,1198.6L3153.7,1189.5L3157.5,1187.7L3161.3,1193.1L3165.3,1204.7L3176.3,1207.3L3186.5,1200.5L3193.7,1157.1L3197.2,1186.7L3201.5,1184.1L3205.3,1179.9L3208.2,1178.4L3212.6,1182.4L3218.4,1186.7L3222.7,1187.3L3227.1,1190.6L3230.5,1193.5L3234.3,1188.3L3238.7,1192.1L3243.0,1192.6L3247.3,1193.7L3252.3,1195.3L3256.0,1194.3L3258.9,1206.2L3263.3,1205.0L3266.8,1187.4L3269.7,1190.3L3273.4,1181.8L3277.8,1185.7L3280.7,1192.5L3283.6,1189.5L3287.9,1195.7L3292.3,1197.8L3295.8,1196.2L3298.7,1199.9L3302.4,1050.0L3306.8,1177.7L3310.5,1187.3L3314.0,1190.3L3318.4,1191.8L3321.8,1190.6L3327.1,1200.6L3331.4,1200.4L3335.8,1203.3L3343.0,1210.8L3346.5,1213.1L3350.3,1197.7L3354.6,1207.5L3357.5,1204.7L3360.4,1219.3L3364.2,1217.9L3367.6,1209.1L3371.4,1216.4L3374.9,1207.3L3382.1,1214.6L3385.9,1214.5L3390.3,1201.2L3393.7,1214.6L3397.2,1207.3L3401.0,1200.3L3404.5,1202.0L3407.4,1200.0L3411.1,1198.3L3414.6,1199.3L3418.4,1190.6L3421.9,1174.0L3425.6,1175.3L3428.5,1187.1L3432.9,1187.3L3436.6,1189.2L3439.5,1116.5L3443.9,1188.8L3447.4,1194.8L3450.8,1211.1L3458.1,1206.9L3461.8,1210.8L3465.3,1208.4L3469.7,1206.8L3473.4,1209.5L3476.9,1208.4L3483.6,1209.4L3490.3,1170.3L3494.6,1163.0L3498.1,1166.2L3501.0,1169.1L3504.8,1177.3L3508.8,1186.2L3512.0,1187.0L3516.3,1187.4L3519.8,1193.3L3523.6,1191.9L3531.4,1195.9L3535.2,1198.4L3538.7,1203.7L3542.2,1204.4L3545.9,1205.5L3550.3,1205.3L3553.2,1205.0L3556.1,1217.3L3560.4,1209.0L3563.9,1196.3L3570.6,1190.8L3574.9,1203.2L3579.3,1198.3L3582.1,1202.9L3585.9,1205.7" stroke="#73BF69" stroke-width="2" fill="none" stroke-linejoin="round"/><path d="M115.1,1215.6L118.6,1226.0L122.0,1220.5L125.8,1224.1L130.1,1218.9L133.0,1219.3L136.8,1207.6L140.9,1224.9L144.6,1214.0L148.1,1217.4L151.9,1220.6L155.7,1220.3L158.6,1210.2L162.6,1093.7L166.4,1189.6L170.2,1192.9L173.6,1198.7L176.5,1203.6L180.9,1206.4L184.6,1210.3L188.1,1215.2L191.6,1218.0L195.7,1217.5L198.6,1221.0L202.6,1220.5L207.8,1223.8L213.6,1225.5L216.5,1229.6L220.0,1230.1L224.4,1227.1L227.3,1230.1L231.6,1227.6L237.4,1227.3L246.1,1226.2L250.4,1221.3L254.8,1222.6L262.0,1219.3L267.8,1215.3L272.2,1211.0L278.0,1202.9L281.5,1203.6L286.1,1176.3L288.7,1059.2L292.5,1150.8L296.8,1157.8L300.6,1168.9L303.5,1168.0L307.0,1173.4L310.4,1208.1L317.7,1204.2L321.5,1203.5L325.8,1203.5L330.2,1200.9L336.0,1201.8L341.8,1205.9L347.6,1203.9L351.0,1206.4L354.2,1215.1L357.7,1219.5L361.5,1200.8L365.8,1202.8L368.4,1194.3L372.2,1202.8L376.5,1201.9L380.0,1205.0L383.2,1204.9L387.3,1207.0L390.2,1208.9L393.9,1208.3L397.4,1208.7L401.2,1214.3L405.5,1205.1L408.4,1211.1L412.2,1214.2L415.7,1210.1L418.6,1207.7L422.9,1208.7L430.2,1212.8L433.9,1212.7L437.4,1208.1L440.9,1215.5L445.2,1202.1L447.8,1037.7L451.9,1173.0L455.4,1186.5L459.1,1193.4L462.6,1203.5L467.0,1206.3L470.2,1205.1L473.7,1207.1L478.0,1214.6L481.8,1211.1L488.1,1212.9L492.5,1216.3L498.3,1215.9L502.6,1216.2L507.0,1217.9L509.9,1217.9L513.4,1219.0L517.1,1218.6L520.9,1214.7L523.8,1203.9L527.9,1211.0L531.6,1206.9L535.4,1204.5L539.7,1205.6L543.2,1201.7L547.6,1198.9L551.9,1200.3L556.3,1206.4L562.1,1200.9L567.9,1203.6L572.2,1204.6L576.5,1206.9L580.0,1206.6L582.9,1200.2L586.7,1208.1L591.0,1087.8L593.9,1205.5L597.7,1206.7L601.8,1201.4L605.5,1196.2L609.9,1213.6L612.8,1214.9L615.7,1213.6L620.0,1215.2L624.4,1214.8L630.2,1203.0L634.5,1207.4L638.9,1219.1L641.8,1227.5L645.5,1227.4L651.9,1213.4L655.7,1216.5L660.0,1226.0L666.4,1213.1L670.8,1208.6L675.1,1216.3L678.0,1212.6L682.4,1229.7L686.7,1214.5L689.6,1220.2L694.0,1216.3L700.0,1226.8L703.2,1216.8L708.1,1214.5L710.4,1209.1L714.7,1198.4L719.1,1200.0L722.0,1199.9L726.3,1182.8L729.8,1181.2L733.6,1115.4L736.5,1187.8L740.8,1188.6L744.6,1196.5L748.1,1195.3L751.9,1203.0L755.3,1202.1L759.7,1203.0L762.6,1210.6L766.1,1207.6L769.8,1211.0L774.2,1211.6L778.5,1212.1L782.9,1215.4L788.7,1216.5L794.5,1213.7L795.9,1213.9L801.7,1217.1L806.1,1219.3L809.5,1211.5L814.2,1214.1L821.1,1189.1L824.9,1204.4L832.1,1197.2L836.5,1193.7L843.7,1195.3L851.0,1188.9L856.8,1192.8L864.0,1193.3L872.7,1198.7L875.6,1081.2L879.4,1180.1L883.7,1174.4L890.7,1218.7L894.5,1207.1L898.2,1193.4L904.6,1196.6L909.0,1205.5L912.7,1215.2L916.2,1214.3L920.0,1219.0L923.5,1210.0L927.8,1190.6L931.6,1205.3L934.5,1202.8L938.5,1221.2L942.9,1210.1L949.0,1208.6L953.0,1229.1L956.8,1216.9L959.7,1220.9L964.0,1220.5L969.3,1215.4L971.9,1204.5L975.6,1204.7L979.1,1213.3L982.3,1222.4L985.8,1200.0L992.4,1214.9L996.5,1211.3L1000.9,1198.1L1004.6,1208.3L1008.1,1205.4L1011.9,1205.5L1015.3,1198.0L1019.1,1194.5L1022.6,1213.5L1029.3,1204.7L1033.6,1208.3L1037.1,1207.4L1040.9,1209.2L1044.3,1207.2L1048.7,1209.3L1051.9,1206.9L1054.8,1194.1L1059.4,1152.4L1062.6,1189.9L1066.4,1192.4L1070.4,1192.0L1077.7,1195.4L1084.9,1191.5L1091.6,1195.5L1095.9,1198.0L1099.7,1198.8L1106.7,1202.9L1110.4,1202.6L1114.2,1203.4L1118.5,1202.9L1122.0,1207.9L1124.9,1223.8L1129.3,1210.8L1133.0,1198.7L1136.5,1200.8L1140.0,1193.4L1143.8,1194.0L1147.2,1203.0L1151.0,1199.4L1154.5,1209.4L1157.7,1203.2L1162.0,1120.2L1166.1,1197.7L1169.0,1204.2L1172.7,1188.1L1177.1,1207.3L1182.9,1210.6L1187.2,1204.2L1191.0,1212.8L1198.8,1200.3L1202.6,1217.9L1205.5,1218.5L1209.8,1214.0L1214.2,1224.7L1224.3,1219.4L1227.2,1223.9L1231.3,1230.1L1239.4,1230.6L1242.9,1224.9L1246.7,1226.1L1251.0,1226.8L1254.5,1226.3L1260.6,1217.3L1264.9,1210.7L1271.9,1204.1L1275.1,1194.6L1279.1,1199.3L1286.1,1186.3L1287.7,1191.7L1293.5,1186.2L1297.9,1185.6L1300.8,1182.5L1304.6,1197.5L1308.6,1216.3L1312.4,1214.6L1315.9,1213.8L1319.6,1211.4L1326.9,1211.9L1330.7,1211.7L1334.7,1206.0L1337.9,1209.6L1342.2,1210.0L1345.7,1214.9L1348.6,1207.1L1352.1,1177.4L1356.4,1123.1L1359.6,1193.4L1363.1,1192.0L1367.5,1194.1L1371.8,1200.3L1376.2,1204.7L1380.5,1203.6L1387.8,1204.1L1395.0,1204.3L1397.9,1207.2L1402.3,1208.1L1406.6,1205.2L1410.9,1211.3L1415.3,1207.4L1418.2,1210.5L1422.0,1222.6L1425.4,1212.0L1428.9,1202.2L1432.7,1209.9L1436.5,1208.5L1440.5,1203.2L1444.3,1210.8L1448.0,1137.7L1451.0,1201.8L1455.0,1201.2L1458.8,1213.3L1462.5,1231.1L1466.0,1215.2L1469.8,1212.4L1473.8,1226.5L1477.6,1203.2L1481.1,1219.0L1484.9,1202.2L1487.2,1218.1L1491.5,1213.1L1495.6,1230.2L1498.8,1211.1L1502.8,1214.8L1507.2,1226.7L1509.5,1214.0L1513.8,1230.2L1518.2,1207.4L1521.7,1221.9L1525.4,1229.5L1531.2,1224.9L1539.4,1212.3L1543.7,1222.3L1547.2,1219.4L1551.0,1227.7L1557.3,1214.3L1561.7,1215.0L1565.2,1214.5L1568.9,1206.1L1571.8,1207.9L1576.2,1202.8L1579.9,1203.6L1582.8,1193.0L1586.9,1195.8L1590.7,1199.2L1594.1,1218.2L1597.9,1221.9L1602.3,1220.3L1605.7,1219.6L1608.9,1216.7L1616.2,1220.0L1621.1,1219.7L1626.9,1218.2L1630.4,1216.3L1645.7,1218.7L1649.2,1219.9L1653.0,1216.2L1656.5,1220.5L1660.8,1230.4L1663.7,1217.1L1671.0,1209.9L1674.7,1208.8L1679.1,1213.6L1683.4,1212.0L1689.2,1216.8L1693.6,1220.0L1697.0,1218.6L1700.2,1222.9L1704.6,1219.6L1708.6,1220.2L1711.0,1224.3L1715.3,1225.6L1719.1,1223.7L1722.6,1223.8L1726.9,1225.2L1730.4,1220.4L1733.3,1078.1L1737.0,1201.0L1744.3,1207.0L1750.7,1220.1L1755.0,1217.3L1761.7,1225.3L1766.0,1228.4L1777.1,1229.9L1780.5,1228.6L1787.8,1230.1L1793.6,1229.9L1800.8,1226.3L1809.5,1229.6L1813.0,1225.2L1816.8,1215.2L1823.4,1196.0L1827.5,1199.1L1830.7,1210.3L1835.0,1204.4L1839.4,1212.2L1845.7,1216.2L1849.5,1208.3L1853.9,1198.1L1856.8,1195.5L1860.2,1201.0L1863.1,1197.1L1867.5,1197.3L1872.1,1194.6L1873.8,1200.1L1878.1,1208.8L1881.0,1222.6L1885.4,1216.7L1888.9,1206.4L1891.8,1211.6L1895.5,1210.0L1899.9,1215.8L1902.8,1212.2L1939.0,1210.5L1943.4,1209.7L1946.3,1209.1L1950.6,1215.0L1954.4,1218.3L1957.3,1223.9L1960.8,1211.3L1964.2,1210.0L1968.0,1204.7L1971.5,1204.9L1976.1,1207.8L1981.0,1215.6L1986.3,1214.2L1990.6,1211.8L1994.1,1216.5L1997.6,1215.2L2001.3,1214.4L2004.2,1213.1L2008.6,1214.5L2011.5,1215.1L2015.2,1217.1L2019.3,1055.2L2022.2,1204.8L2026.0,1205.4L2029.7,1207.4L2033.2,1208.8L2037.0,1216.0L2040.5,1210.9L2043.4,1214.9L2048.3,1213.4L2053.5,1216.8L2058.4,1215.8L2062.2,1216.2L2065.1,1220.2L2070.0,1219.8L2072.9,1220.4L2076.7,1221.2L2080.2,1224.7L2084.0,1222.8L2088.3,1223.6L2092.1,1224.7L2095.0,1222.2L2099.0,1227.3L2101.9,1218.6L2105.7,1219.8L2110.6,1215.1L2116.4,1219.5L2121.1,1214.1L2124.0,1203.3L2127.4,1186.9L2131.2,1197.7L2134.1,1198.1L2138.2,1196.3L2141.9,1196.0L2145.4,1196.0L2149.8,1194.0L2153.5,1189.1L2156.4,1191.2L2160.2,1193.1L2163.1,1176.9L2167.1,1205.6L2170.3,1210.7L2173.8,1207.0L2177.6,1203.6L2181.1,1210.5L2184.8,1211.8L2189.2,1212.9L2192.1,1225.2L2196.1,1224.1L2199.9,1207.0L2202.8,1184.1L2207.1,1163.7L2210.9,1140.9L2213.8,1171.0L2217.3,1189.4L2221.6,1213.9L2224.5,1222.4L2228.9,1225.3L2233.2,1228.8L2236.7,1225.5L2240.5,1225.5L2244.3,1223.3L2247.1,1225.9L2251.2,1227.8L2261.6,1228.6L2264.5,1223.0L2268.9,1229.7L2272.4,1226.9L2275.3,1228.6L2279.6,1228.4L2282.5,1229.5L2286.9,1226.7L2291.2,1229.3L2294.1,1227.4L2297.6,1228.2L2301.4,1205.1L2304.3,1086.6L2308.0,1186.9L2312.9,1194.5L2316.4,1204.7L2321.1,1210.2L2326.0,1217.3L2329.5,1220.1L2333.8,1217.2L2337.6,1220.3L2341.4,1224.7L2344.3,1221.3L2349.2,1226.4L2352.1,1223.8L2355.9,1226.8L2359.3,1228.9L2363.1,1226.9L2366.6,1230.1L2370.1,1226.7L2373.8,1229.3L2377.3,1227.1L2381.7,1223.6L2384.8,1225.1L2388.3,1225.6L2392.1,1225.3L2395.6,1223.5L2399.0,1225.0L2403.7,1222.7L2408.0,1218.1L2413.5,1215.2L2417.3,1212.1L2421.1,1180.7L2423.7,1057.0L2427.4,1135.5L2430.9,1150.4L2434.7,1165.3L2439.0,1177.3L2444.8,1182.4L2449.2,1176.7L2453.5,1209.1L2458.2,1202.5L2459.8,1202.4L2465.6,1204.4L2470.0,1207.0L2477.2,1209.0L2481.6,1212.2L2485.4,1210.3L2488.8,1217.0L2493.2,1221.8L2496.1,1206.7L2499.8,1205.0L2503.3,1208.8L2507.1,1205.5L2510.6,1209.0L2514.0,1207.7L2517.8,1217.2L2521.3,1217.7L2525.1,1214.1L2528.8,1207.1L2532.9,1214.7L2536.1,1208.5L2539.6,1216.6L2543.3,1214.2L2546.8,1211.8L2551.2,1205.9L2554.0,1212.6L2557.8,1213.6L2561.3,1220.1L2564.8,1215.1L2568.5,1209.4L2572.9,1206.7L2576.4,1217.6L2581.6,1211.4L2586.8,1209.3L2590.3,1183.8L2594.1,1195.2L2597.5,1216.2L2601.3,1206.2L2604.8,1201.9L2609.1,1208.7L2612.9,1207.3L2615.8,1216.6L2620.1,1206.8L2623.6,1211.0L2626.5,1211.6L2630.0,1210.1L2633.8,1209.5L2639.6,1207.1L2643.9,1208.5L2647.7,1208.9L2652.0,1204.9L2654.6,1192.7L2659.0,1175.6L2662.8,1195.6L2666.2,1196.0L2670.0,1195.7L2673.5,1194.6L2677.3,1200.5L2681.6,1199.2L2684.5,1196.1L2688.3,1199.2L2691.7,1198.0L2696.1,1195.6L2700.4,1201.1L2704.8,1201.1L2709.1,1203.0L2713.5,1204.9L2716.4,1206.8L2720.7,1207.7L2724.5,1209.0L2727.4,1186.3L2731.5,1191.5L2735.2,1194.4L2738.1,1200.0L2742.5,1193.9L2746.8,1198.8L2750.6,1203.4L2754.1,1210.0L2757.0,1203.7L2760.7,1209.7L2764.2,1210.0L2767.7,1206.3L2770.9,1209.6L2774.3,1208.3L2778.7,1213.0L2782.2,1212.2L2785.4,1213.1L2788.8,1213.3L2793.2,1217.8L2796.7,1218.3L2800.4,1216.7L2804.2,1220.2L2807.7,1219.5L2810.6,1213.8L2814.1,1217.9L2817.8,1218.5L2821.6,1223.2L2825.1,1215.0L2828.8,1223.9L2832.9,1208.9L2836.1,1216.4L2840.4,1198.3L2846.8,1209.8L2850.6,1207.7L2854.1,1204.8L2857.5,1204.8L2861.3,1188.6L2864.8,1188.3L2868.6,1152.9L2872.3,1198.5L2875.2,1137.8L2879.6,1216.2L2883.1,1205.5L2887.4,1200.5L2891.8,1209.7L2897.6,1213.0L2904.8,1215.7L2909.1,1215.2L2913.5,1218.5L2917.8,1216.8L2922.8,1220.3L2926.5,1220.1L2930.9,1220.4L2936.7,1220.8L2941.0,1222.3L2948.3,1226.2L2954.9,1207.2L2959.3,1217.1L2962.8,1219.4L2966.5,1216.7L2970.0,1220.8L2973.5,1214.4L2977.3,1211.8L2981.6,1212.6L2986.0,1211.3L2991.8,1211.3L2998.4,1213.3L3002.5,1214.4L3006.2,1210.5L3010.6,1210.0L3013.5,1211.8L3016.4,1157.4L3020.7,1154.7L3024.5,1203.0L3030.9,1183.0L3035.2,1190.2L3038.1,1192.7L3044.2,1204.6L3045.9,1207.3L3049.4,1211.8L3054.6,1217.1L3060.4,1225.7L3067.1,1224.8L3070.5,1230.5L3074.9,1226.6L3079.2,1230.1L3082.1,1230.3L3087.9,1231.0L3093.7,1231.0L3100.4,1226.6L3103.9,1231.1L3106.8,1230.9L3111.1,1221.9L3115.5,1230.4L3118.4,1222.8L3122.1,1230.9L3125.6,1223.8L3128.5,1225.3L3132.9,1227.8L3136.6,1222.5L3140.1,1212.5L3143.6,1210.4L3146.5,1189.9L3150.2,1203.9L3153.7,1194.8L3157.5,1168.0L3161.3,1196.0L3165.3,1209.4L3176.3,1202.2L3186.5,1206.4L3193.7,1151.5L3197.2,1197.0L3201.5,1191.5L3205.3,1173.3L3208.2,1178.6L3212.6,1182.3L3218.4,1187.9L3222.7,1195.8L3227.1,1193.1L3230.5,1199.8L3234.3,1196.8L3238.7,1199.6L3243.0,1202.3L3247.3,1202.2L3252.3,1207.8L3256.0,1204.6L3258.9,1222.8L3263.3,1214.5L3266.8,1186.6L3269.7,1171.8L3273.4,1151.5L3277.8,1168.8L3280.7,1187.3L3283.6,1201.1L3287.9,1206.1L3292.3,1210.1L3295.8,1203.6L3298.7,1215.0L3302.4,1180.8L3306.8,1195.6L3310.5,1192.2L3314.0,1199.7L3318.4,1202.2L3321.8,1207.2L3327.1,1207.0L3331.4,1220.0L3335.8,1216.4L3343.0,1219.4L3346.5,1220.2L3350.3,1230.1L3354.6,1213.8L3357.5,1228.3L3360.4,1224.1L3364.2,1228.9L3367.6,1220.1L3371.4,1228.3L3374.9,1223.5L3382.1,1228.5L3385.9,1227.2L3390.3,1229.7L3393.7,1225.0L3397.2,1214.3L3401.0,1216.0L3404.5,1214.9L3407.4,1215.2L3411.1,1209.8L3414.6,1208.5L3418.4,1201.1L3421.9,1199.5L3425.6,1194.3L3428.5,1193.4L3432.9,1193.0L3436.6,1196.8L3439.5,1122.1L3443.9,1188.7L3447.4,1207.4L3450.8,1219.7L3458.1,1216.1L3461.8,1217.2L3465.3,1212.0L3469.7,1213.1L3473.4,1213.7L3476.9,1216.4L3483.6,1214.1L3490.3,1113.6L3494.6,1191.2L3498.1,1191.1L3501.0,1193.4L3504.8,1193.5L3508.8,1193.6L3512.0,1197.3L3516.3,1199.6L3519.8,1205.6L3523.6,1199.8L3531.4,1202.0L3535.2,1205.9L3538.7,1207.4L3542.2,1205.0L3545.9,1209.8L3550.3,1207.0L3553.2,1211.4L3556.1,1224.3L3560.4,1211.3L3563.9,1201.2L3570.6,1192.9L3574.9,1200.5L3579.3,1200.9L3582.1,1201.1L3585.9,1208.5" stroke="#8AB8FF" stroke-width="2" fill="none" stroke-linejoin="round"/><path d="M115.1,1207.1L118.6,1211.2L122.0,1208.2L125.8,1213.3L130.1,1206.9L133.0,1207.9L136.8,1204.7L140.9,1213.0L144.6,1208.0L148.1,1207.4L151.9,1211.6L155.7,1209.9L158.6,1203.9L162.6,1108.8L166.4,1169.0L170.2,1173.2L173.6,1178.9L176.5,1185.3L180.9,1191.3L184.6,1199.2L188.1,1199.7L191.6,1202.1L195.7,1206.4L198.6,1209.5L202.6,1212.9L207.8,1212.9L213.6,1211.9L216.5,1219.6L220.0,1216.7L224.4,1216.1L227.3,1219.4L231.6,1219.7L237.4,1220.0L246.1,1218.9L250.4,1216.0L254.8,1214.4L262.0,1213.6L267.8,1210.1L272.2,1210.1L278.0,1211.9L281.5,1200.5L286.1,1186.8L288.7,1102.6L292.5,1171.0L296.8,1176.6L300.6,1181.8L303.5,1183.0L307.0,1192.7L310.4,1215.4L317.7,1206.4L321.5,1208.7L325.8,1211.3L330.2,1206.7L336.0,1209.7L341.8,1214.5L347.6,1213.7L351.0,1211.2L354.2,1216.4L357.7,1227.9L361.5,1210.7L365.8,1211.8L368.4,1209.5L372.2,1213.1L376.5,1215.4L380.0,1214.2L383.2,1213.9L387.3,1214.4L390.2,1217.5L393.9,1216.6L397.4,1219.4L401.2,1216.8L405.5,1221.5L408.4,1220.8L412.2,1219.1L415.7,1221.6L418.6,1222.9L422.9,1217.1L430.2,1216.8L433.9,1222.8L437.4,1222.6L440.9,1221.1L445.2,1220.7L447.8,1108.9L451.9,1198.0L455.4,1201.5L459.1,1206.2L462.6,1205.8L467.0,1211.6L470.2,1215.5L473.7,1216.2L478.0,1214.6L481.8,1220.3L488.1,1226.3L492.5,1225.0L498.3,1227.2L502.6,1229.1L507.0,1227.6L509.9,1227.4L513.4,1229.4L517.1,1230.1L520.9,1220.3L523.8,1214.6L527.9,1214.7L531.6,1215.3L535.4,1210.9L539.7,1215.0L543.2,1206.4L547.6,1212.8L551.9,1211.0L556.3,1208.1L562.1,1211.0L567.9,1211.2L572.2,1215.8L576.5,1213.6L580.0,1213.9L582.9,1207.5L586.7,1225.7L591.0,1084.1L593.9,1215.3L597.7,1217.2L601.8,1219.3L605.5,1213.2L609.9,1219.7L612.8,1217.2L615.7,1222.0L620.0,1215.8L624.4,1219.1L630.2,1210.7L634.5,1221.4L638.9,1219.2L641.8,1220.5L645.5,1231.2L651.9,1231.1L655.7,1226.7L660.0,1228.8L666.4,1230.6L670.8,1230.0L675.1,1230.8L678.0,1231.8L682.4,1230.5L686.7,1229.6L689.6,1230.3L694.0,1220.7L700.0,1230.9L703.2,1226.0L708.1,1226.8L710.4,1224.3L714.7,1215.9L719.1,1205.3L722.0,1214.8L726.3,1210.7L729.8,1208.4L733.6,1140.1L736.5,1208.9L740.8,1213.2L744.6,1210.0L748.1,1218.8L751.9,1225.8L755.3,1221.8L759.7,1227.8L762.6,1230.8L766.1,1229.0L769.8,1228.8L774.2,1230.0L778.5,1228.7L782.9,1230.4L788.7,1230.3L794.5,1230.9L795.9,1230.6L801.7,1230.2L806.1,1230.5L809.5,1230.6L814.2,1231.3L821.1,1214.9L824.9,1226.3L832.1,1217.2L836.5,1219.2L843.7,1216.0L851.0,1218.3L856.8,1212.5L864.0,1219.8L872.7,1218.5L875.6,1164.5L879.4,1178.7L883.7,1184.1L890.7,1214.2L894.5,1207.0L898.2,1211.7L904.6,1220.5L909.0,1213.3L912.7,1218.0L916.2,1227.1L920.0,1221.5L923.5,1217.2L927.8,1218.2L931.6,1224.2L934.5,1230.9L938.5,1220.0L942.9,1231.3L949.0,1221.8L953.0,1226.0L956.8,1230.3L959.7,1217.7L964.0,1214.2L969.3,1221.0L971.9,1229.4L975.6,1210.9L979.1,1219.2L982.3,1220.8L985.8,1225.6L992.4,1215.5L996.5,1217.5L1000.9,1222.3L1004.6,1221.0L1008.1,1217.5L1011.9,1217.0L1015.3,1210.8L1019.1,1209.4L1022.6,1223.2L1029.3,1219.7L1033.6,1218.8L1037.1,1218.1L1040.9,1217.0L1044.3,1217.9L1048.7,1219.1L1051.9,1218.5L1054.8,1204.3L1059.4,1164.3L1062.6,1202.5L1066.4,1204.9L1070.4,1203.7L1077.7,1208.2L1084.9,1209.2L1091.6,1209.8L1095.9,1210.2L1099.7,1212.4L1106.7,1214.4L1110.4,1212.4L1114.2,1213.5L1118.5,1211.9L1122.0,1212.8L1124.9,1229.6L1129.3,1224.4L1133.0,1211.1L1136.5,1208.0L1140.0,1211.1L1143.8,1203.5L1147.2,1194.4L1151.0,1210.3L1154.5,1217.5L1157.7,1204.5L1162.0,1156.3L1166.1,1204.7L1169.0,1201.6L1172.7,1215.7L1177.1,1206.6L1182.9,1191.4L1187.2,1201.6L1191.0,1222.1L1198.8,1215.5L1202.6,1223.6L1205.5,1224.7L1209.8,1210.5L1214.2,1220.8L1224.3,1224.8L1227.2,1224.2L1231.3,1229.9L1239.4,1230.4L1242.9,1230.6L1246.7,1228.6L1251.0,1230.4L1254.5,1227.7L1260.6,1217.7L1264.9,1220.0L1271.9,1214.6L1275.1,1207.1L1279.1,1206.7L1286.1,1195.0L1287.7,1197.0L1293.5,1192.8L1297.9,1189.0L1300.8,1191.1L1304.6,1202.3L1308.6,1222.2L1312.4,1219.2L1315.9,1216.0L1319.6,1215.4L1326.9,1217.5L1330.7,1219.1L1334.7,1216.6L1337.9,1219.3L1342.2,1216.2L1345.7,1219.0L1348.6,1218.0L1352.1,1182.0L1356.4,1136.4L1359.6,1177.8L1363.1,1177.1L1367.5,1185.4L1371.8,1187.5L1376.2,1192.5L1380.5,1197.6L1387.8,1200.0L1395.0,1205.4L1397.9,1206.3L1402.3,1205.3L1406.6,1209.0L1410.9,1218.0L1415.3,1217.7L1418.2,1221.6L1422.0,1231.4L1425.4,1220.2L1428.9,1194.5L1432.7,1184.1L1436.5,1196.5L1440.5,1198.0L1444.3,1210.9L1448.0,1140.5L1451.0,1213.8L1455.0,1220.2L1458.8,1210.3L1462.5,1216.5L1466.0,1217.7L1469.8,1219.0L1473.8,1225.8L1477.6,1222.7L1481.1,1213.3L1484.9,1230.0L1487.2,1230.4L1491.5,1230.2L1495.6,1225.0L1498.8,1230.3L1502.8,1227.2L1507.2,1230.7L1509.5,1228.8L1513.8,1227.6L1518.2,1231.0L1521.7,1232.0L1525.4,1230.8L1531.2,1230.8L1539.4,1232.4L1543.7,1229.9L1547.2,1231.0L1551.0,1227.0L1557.3,1218.2L1561.7,1220.2L1565.2,1210.7L1568.9,1205.5L1571.8,1203.8L1576.2,1199.0L1579.9,1200.8L1582.8,1188.1L1586.9,1197.9L1590.7,1197.6L1594.1,1213.9L1597.9,1222.6L1602.3,1216.3L1605.7,1217.2L1608.9,1211.1L1616.2,1218.5L1621.1,1210.5L1626.9,1215.9L1630.4,1213.2L1645.7,1214.3L1649.2,1215.6L1653.0,1211.2L1656.5,1215.2L1660.8,1230.3L1663.7,1215.4L1671.0,1195.1L1674.7,1198.0L1679.1,1204.2L1683.4,1207.1L1689.2,1210.9L1693.6,1210.1L1697.0,1212.0L1700.2,1215.3L1704.6,1215.0L1708.6,1214.8L1711.0,1212.5L1715.3,1212.3L1719.1,1216.3L1722.6,1215.8L1726.9,1213.9L1730.4,1215.1L1733.3,1101.8L1737.0,1142.5L1744.3,1160.0L1750.7,1180.8L1755.0,1185.2L1761.7,1199.1L1766.0,1208.0L1777.1,1214.8L1780.5,1222.8L1787.8,1227.3L1793.6,1224.3L1800.8,1230.5L1809.5,1231.5L1813.0,1230.9L1816.8,1230.4L1823.4,1216.6L1827.5,1216.8L1830.7,1222.6L1835.0,1211.6L1839.4,1211.3L1845.7,1191.1L1849.5,1193.3L1853.9,1177.7L1856.8,1192.0L1860.2,1175.4L1863.1,1162.4L1867.5,1175.7L1872.1,1184.1L1873.8,1180.3L1878.1,1189.1L1881.0,1230.5L1885.4,1221.8L1888.9,1203.9L1891.8,1212.7L1895.5,1209.6L1899.9,1206.3L1902.8,1209.8L1939.0,1209.0L1943.4,1210.8L1946.3,1214.8L1950.6,1210.5L1954.4,1229.1L1957.3,1232.2L1960.8,1217.3L1964.2,1200.9L1968.0,1198.3L1971.5,1195.2L1976.1,1206.9L1981.0,1208.7L1986.3,1212.7L1990.6,1218.8L1994.1,1222.5L1997.6,1225.5L2001.3,1223.0L2004.2,1227.6L2008.6,1227.9L2011.5,1227.6L2015.2,1228.7L2019.3,1172.1L2022.2,1199.4L2026.0,1199.9L2029.7,1202.3L2033.2,1213.1L2037.0,1219.9L2040.5,1217.3L2043.4,1224.4L2048.3,1222.6L2053.5,1226.6L2058.4,1230.2L2062.2,1230.6L2065.1,1228.1L2070.0,1230.1L2072.9,1230.5L2076.7,1230.7L2080.2,1230.5L2084.0,1231.1L2088.3,1231.0L2092.1,1231.1L2095.0,1230.6L2099.0,1230.8L2101.9,1230.6L2105.7,1229.6L2110.6,1228.4L2116.4,1224.6L2121.1,1216.4L2124.0,1205.8L2127.4,1182.1L2131.2,1200.8L2134.1,1201.4L2138.2,1199.0L2141.9,1203.8L2145.4,1204.4L2149.8,1203.6L2153.5,1206.4L2156.4,1206.5L2160.2,1211.1L2163.1,1180.9L2167.1,1218.1L2170.3,1214.5L2173.8,1213.0L2177.6,1212.1L2181.1,1217.5L2184.8,1219.9L2189.2,1223.0L2192.1,1230.0L2196.1,1230.6L2199.9,1217.9L2202.8,1213.2L2207.1,1221.3L2210.9,1217.2L2213.8,1224.1L2217.3,1219.7L2221.6,1226.2L2224.5,1225.5L2228.9,1226.9L2233.2,1229.0L2236.7,1224.6L2240.5,1227.9L2244.3,1230.2L2247.1,1230.2L2251.2,1229.0L2261.6,1230.2L2264.5,1228.1L2268.9,1229.7L2272.4,1229.9L2275.3,1228.5L2279.6,1229.2L2282.5,1230.2L2286.9,1230.1L2291.2,1227.7L2294.1,1222.8L2297.6,1227.9L2301.4,1219.3L2304.3,1132.9L2308.0,1210.1L2312.9,1206.5L2316.4,1210.2L2321.1,1215.7L2326.0,1220.7L2329.5,1216.3L2333.8,1225.0L2337.6,1223.9L2341.4,1223.4L2344.3,1223.6L2349.2,1229.9L2352.1,1226.9L2355.9,1229.5L2359.3,1229.1L2363.1,1228.8L2366.6,1230.1L2370.1,1230.1L2373.8,1226.8L2377.3,1230.7L2381.7,1230.0L2384.8,1228.7L2388.3,1230.0L2392.1,1230.0L2395.6,1229.7L2399.0,1226.5L2403.7,1226.0L2408.0,1220.8L2413.5,1218.3L2417.3,1210.5L2421.1,1195.9L2423.7,1134.4L2427.4,1175.6L2430.9,1178.4L2434.7,1174.9L2439.0,1181.7L2444.8,1189.4L2449.2,1185.0L2453.5,1215.3L2458.2,1208.0L2459.8,1209.8L2465.6,1216.2L2470.0,1212.6L2477.2,1213.2L2481.6,1214.5L2485.4,1218.3L2488.8,1230.0L2493.2,1231.1L2496.1,1209.2L2499.8,1215.6L2503.3,1211.7L2507.1,1206.0L2510.6,1221.1L2514.0,1220.0L2517.8,1224.3L2521.3,1221.4L2525.1,1227.9L2528.8,1228.9L2532.9,1219.4L2536.1,1225.7L2539.6,1231.1L2543.3,1223.3L2546.8,1220.5L2551.2,1231.0L2554.0,1231.4L2557.8,1230.5L2561.3,1224.0L2564.8,1231.1L2568.5,1220.1L2572.9,1229.1L2576.4,1219.1L2581.6,1223.1L2586.8,1222.8L2590.3,1171.0L2594.1,1206.9L2597.5,1214.3L2601.3,1204.5L2604.8,1214.3L2609.1,1214.7L2612.9,1216.0L2615.8,1213.3L2620.1,1212.4L2623.6,1213.5L2626.5,1220.9L2630.0,1227.9L2633.8,1215.1L2639.6,1219.6L2643.9,1221.9L2647.7,1227.3L2652.0,1222.5L2654.6,1201.1L2659.0,1170.4L2662.8,1194.5L2666.2,1195.9L2670.0,1199.1L2673.5,1194.0L2677.3,1197.8L2681.6,1194.7L2684.5,1194.8L2688.3,1195.0L2691.7,1198.5L2696.1,1200.1L2700.4,1205.4L2704.8,1204.9L2709.1,1208.2L2713.5,1206.3L2716.4,1215.7L2720.7,1210.6L2724.5,1211.9L2727.4,1188.0L2731.5,1189.3L2735.2,1200.0L2738.1,1203.6L2742.5,1197.4L2746.8,1201.2L2750.6,1212.9L2754.1,1213.2L2757.0,1209.1L2760.7,1221.5L2764.2,1222.7L2767.7,1223.0L2770.9,1217.1L2774.3,1224.1L2778.7,1223.0L2782.2,1227.6L2785.4,1224.4L2788.8,1230.0L2793.2,1228.7L2796.7,1231.1L2800.4,1231.0L2804.2,1228.6L2807.7,1230.5L2810.6,1230.0L2814.1,1230.2L2817.8,1231.3L2821.6,1231.6L2825.1,1231.0L2828.8,1230.4L2832.9,1220.9L2836.1,1229.5L2840.4,1222.1L2846.8,1211.7L2850.6,1199.3L2854.1,1193.9L2857.5,1202.9L2861.3,1194.6L2864.8,1187.6L2868.6,1151.2L2872.3,1167.0L2875.2,1136.8L2879.6,1169.9L2883.1,1179.5L2887.4,1180.4L2891.8,1198.1L2897.6,1214.0L2904.8,1218.3L2909.1,1216.4L2913.5,1222.3L2917.8,1225.4L2922.8,1229.0L2926.5,1230.7L2930.9,1230.5L2936.7,1231.4L2941.0,1230.7L2948.3,1231.5L2954.9,1209.5L2959.3,1224.7L2962.8,1230.1L2966.5,1225.3L2970.0,1223.6L2973.5,1224.4L2977.3,1223.7L2981.6,1222.1L2986.0,1214.8L2991.8,1219.7L2998.4,1224.1L3002.5,1217.1L3006.2,1213.8L3010.6,1221.6L3013.5,1212.4L3016.4,1097.3L3020.7,1194.7L3024.5,1231.4L3030.9,1213.7L3035.2,1218.0L3038.1,1217.2L3044.2,1225.8L3045.9,1219.5L3049.4,1229.3L3054.6,1227.7L3060.4,1230.0L3067.1,1230.8L3070.5,1230.5L3074.9,1230.8L3079.2,1231.2L3082.1,1231.2L3087.9,1231.3L3093.7,1230.9L3100.4,1231.6L3103.9,1230.4L3106.8,1231.0L3111.1,1228.8L3115.5,1229.3L3118.4,1230.5L3122.1,1230.2L3125.6,1212.8L3128.5,1196.9L3132.9,1186.9L3136.6,1164.7L3140.1,1189.0L3143.6,1200.2L3146.5,1200.1L3150.2,1215.1L3153.7,1212.3L3157.5,1203.6L3161.3,1203.0L3165.3,1231.2L3176.3,1227.8L3186.5,1212.5L3193.7,1170.8L3197.2,1179.2L3201.5,1181.7L3205.3,1171.8L3208.2,1192.4L3212.6,1193.8L3218.4,1204.0L3222.7,1206.7L3227.1,1208.7L3230.5,1214.3L3234.3,1214.1L3238.7,1214.6L3243.0,1213.2L3247.3,1217.5L3252.3,1214.1L3256.0,1215.6L3258.9,1230.5L3263.3,1221.9L3266.8,1211.2L3269.7,1212.2L3273.4,1206.1L3277.8,1212.4L3280.7,1212.0L3283.6,1219.3L3287.9,1219.4L3292.3,1214.8L3295.8,1215.5L3298.7,1221.9L3302.4,1114.4L3306.8,1178.4L3310.5,1186.7L3314.0,1192.6L3318.4,1198.3L3321.8,1209.8L3327.1,1208.3L3331.4,1218.9L3335.8,1211.8L3343.0,1219.1L3346.5,1221.4L3350.3,1226.9L3354.6,1220.3L3357.5,1223.4L3360.4,1215.6L3364.2,1221.7L3367.6,1219.8L3371.4,1225.7L3374.9,1230.1L3382.1,1226.9L3385.9,1230.0L3390.3,1227.9L3393.7,1222.0L3397.2,1220.7L3401.0,1218.3L3404.5,1216.4L3407.4,1217.2L3411.1,1204.3L3414.6,1198.1L3418.4,1190.5L3421.9,1182.9L3425.6,1181.8L3428.5,1188.1L3432.9,1189.5L3436.6,1196.6L3439.5,1085.3L3443.9,1196.1L3447.4,1202.2L3450.8,1223.0L3458.1,1217.9L3461.8,1216.6L3465.3,1217.6L3469.7,1209.9L3473.4,1212.6L3476.9,1213.4L3483.6,1216.6L3490.3,1156.2L3494.6,1188.6L3498.1,1191.0L3501.0,1191.3L3504.8,1196.0L3508.8,1194.8L3512.0,1195.2L3516.3,1195.4L3519.8,1198.0L3523.6,1197.7L3531.4,1203.3L3535.2,1204.5L3538.7,1201.6L3542.2,1203.3L3545.9,1205.6L3550.3,1200.3L3553.2,1198.2L3556.1,1201.4L3560.4,1200.5L3563.9,1192.2L3570.6,1186.6L3574.9,1194.3L3579.3,1193.6L3582.1,1201.5L3585.9,1204.6" stroke="#FF780A" stroke-width="2" fill="none" stroke-linejoin="round"/><path d="M115.1,1212.6L118.6,1215.8L122.0,1214.3L125.8,1212.9L130.1,1213.1L133.0,1209.1L136.8,1205.7L140.9,1217.3L144.6,1212.7L148.1,1211.9L151.9,1212.9L155.7,1211.5L158.6,1205.4L162.6,1104.4L166.4,1187.1L170.2,1188.3L173.6,1188.2L176.5,1198.0L180.9,1199.4L184.6,1204.8L188.1,1207.9L191.6,1205.8L195.7,1207.7L198.6,1210.8L202.6,1211.3L207.8,1213.8L213.6,1217.0L216.5,1211.4L220.0,1214.8L224.4,1215.6L227.3,1214.0L231.6,1213.7L237.4,1215.5L246.1,1213.1L250.4,1213.9L254.8,1211.0L262.0,1210.7L267.8,1202.8L272.2,1207.4L278.0,1204.2L281.5,1198.5L286.1,1186.5L288.7,1133.4L292.5,1172.3L296.8,1175.8L300.6,1179.1L303.5,1185.3L307.0,1181.4L310.4,1205.1L317.7,1200.4L321.5,1205.6L325.8,1203.0L330.2,1205.7L336.0,1204.5L341.8,1202.7L347.6,1205.2L351.0,1206.8L354.2,1210.2L357.7,1210.9L361.5,1189.2L365.8,1185.6L368.4,1185.9L372.2,1197.4L376.5,1206.3L380.0,1205.5L383.2,1212.0L387.3,1212.5L390.2,1212.9L393.9,1210.3L397.4,1207.6L401.2,1212.1L405.5,1213.1L408.4,1215.7L412.2,1212.9L415.7,1211.8L418.6,1212.7L422.9,1214.0L430.2,1212.7L433.9,1217.3L437.4,1211.4L440.9,1216.4L445.2,1217.8L447.8,1113.5L451.9,1190.6L455.4,1193.9L459.1,1197.3L462.6,1205.4L467.0,1202.9L470.2,1209.9L473.7,1204.4L478.0,1210.2L481.8,1216.1L488.1,1211.8L492.5,1210.0L498.3,1216.0L502.6,1213.5L507.0,1216.2L509.9,1216.7L513.4,1221.8L517.1,1213.7L520.9,1211.2L523.8,1201.3L527.9,1208.4L531.6,1207.1L535.4,1199.9L539.7,1202.2L543.2,1202.2L547.6,1203.6L551.9,1200.5L556.3,1199.5L562.1,1202.4L567.9,1202.3L572.2,1205.0L576.5,1200.4L580.0,1205.7L582.9,1201.6L586.7,1210.8L591.0,1093.4L593.9,1203.0L597.7,1213.2L601.8,1202.2L605.5,1195.1L609.9,1218.5L612.8,1197.0L615.7,1204.6L620.0,1203.8L624.4,1211.3L630.2,1197.8L634.5,1212.8L638.9,1200.5L641.8,1215.5L645.5,1207.1L651.9,1215.6L655.7,1203.1L660.0,1204.5L666.4,1221.3L670.8,1217.7L675.1,1216.6L678.0,1213.6L682.4,1208.3L686.7,1230.6L689.6,1212.9L694.0,1212.8L700.0,1213.1L703.2,1219.1L708.1,1209.7L710.4,1216.5L714.7,1213.0L719.1,1209.8L722.0,1212.0L726.3,1198.6L729.8,1193.3L733.6,1142.0L736.5,1177.9L740.8,1186.8L744.6,1193.5L748.1,1201.6L751.9,1204.0L755.3,1208.6L759.7,1214.0L762.6,1209.0L766.1,1218.3L769.8,1215.7L774.2,1216.3L778.5,1221.3L782.9,1215.9L788.7,1222.5L794.5,1224.7L795.9,1219.6L801.7,1225.4L806.1,1227.0L809.5,1226.3L814.2,1225.5L821.1,1206.6L824.9,1214.1L832.1,1214.1L836.5,1208.9L843.7,1204.2L851.0,1210.2L856.8,1209.3L864.0,1208.2L872.7,1208.5L875.6,1129.0L879.4,1174.6L883.7,1177.9L890.7,1205.2L894.5,1199.4L898.2,1210.9L904.6,1217.1L909.0,1215.3L912.7,1214.5L916.2,1214.5L920.0,1217.1L923.5,1208.5L927.8,1219.2L931.6,1216.6L934.5,1216.9L938.5,1221.1L942.9,1229.1L949.0,1226.2L953.0,1220.2L956.8,1230.1L959.7,1218.9L964.0,1223.4L969.3,1224.4L971.9,1229.0L975.6,1229.5L979.1,1214.9L982.3,1227.0L985.8,1221.2L992.4,1216.6L996.5,1214.0L1000.9,1215.8L1004.6,1219.1L1008.1,1217.7L1011.9,1212.8L1015.3,1208.9L1019.1,1205.7L1022.6,1224.1L1029.3,1221.0L1033.6,1218.2L1037.1,1219.8L1040.9,1218.1L1044.3,1215.3L1048.7,1221.5L1051.9,1213.8L1054.8,1207.0L1059.4,1156.1L1062.6,1205.4L1066.4,1200.0L1070.4,1198.8L1077.7,1203.8L1084.9,1204.7L1091.6,1208.7L1095.9,1212.7L1099.7,1209.2L1106.7,1208.5L1110.4,1213.2L1114.2,1217.3L1118.5,1214.1L1122.0,1214.9L1124.9,1229.6L1129.3,1218.4L1133.0,1208.4L1136.5,1204.6L1140.0,1197.6L1143.8,1189.9L1147.2,1203.4L1151.0,1215.9L1154.5,1218.9L1157.7,1217.9L1162.0,1141.9L1166.1,1201.3L1169.0,1200.2L1172.7,1223.8L1177.1,1205.8L1182.9,1206.1L1187.2,1209.2L1191.0,1218.2L1198.8,1219.9L1202.6,1224.7L1205.5,1227.8L1209.8,1219.4L1214.2,1218.3L1224.3,1221.9L1227.2,1215.4L1231.3,1230.0L1239.4,1230.8L1242.9,1223.7L1246.7,1231.0L1251.0,1228.6L1254.5,1227.5L1260.6,1216.0L1264.9,1218.9L1271.9,1211.2L1275.1,1206.8L1279.1,1203.5L1286.1,1201.7L1287.7,1198.7L1293.5,1200.3L1297.9,1198.3L1300.8,1193.9L1304.6,1204.0L1308.6,1222.1L1312.4,1219.7L1315.9,1215.7L1319.6,1218.2L1326.9,1216.5L1330.7,1218.0L1334.7,1210.4L1337.9,1210.4L1342.2,1213.7L1345.7,1218.8L1348.6,1206.8L1352.1,1178.7L1356.4,1157.6L1359.6,1199.7L1363.1,1196.7L1367.5,1191.1L1371.8,1199.9L1376.2,1194.1L1380.5,1201.6L1387.8,1203.7L1395.0,1202.1L1397.9,1206.1L1402.3,1205.1L1406.6,1209.2L1410.9,1211.4L1415.3,1209.4L1418.2,1211.4L1422.0,1230.2L1425.4,1222.7L1428.9,1189.5L1432.7,1188.5L1436.5,1189.9L1440.5,1202.2L1444.3,1208.0L1448.0,1150.0L1451.0,1200.5L1455.0,1188.7L1458.8,1186.8L1462.5,1209.7L1466.0,1198.3L1469.8,1210.2L1473.8,1219.6L1477.6,1202.8L1481.1,1216.0L1484.9,1221.1L1487.2,1222.9L1491.5,1214.6L1495.6,1220.0L1498.8,1217.1L1502.8,1216.9L1507.2,1212.2L1509.5,1222.7L1513.8,1223.1L1518.2,1221.7L1521.7,1225.7L1525.4,1220.0L1531.2,1212.5L1539.4,1230.9L1543.7,1215.9L1547.2,1218.7L1551.0,1210.6L1557.3,1202.9L1561.7,1197.7L1565.2,1192.5L1568.9,1182.8L1571.8,1187.3L1576.2,1177.2L1579.9,1181.8L1582.8,1162.5L1586.9,1176.6L1590.7,1176.9L1594.1,1194.4L1597.9,1208.6L1602.3,1200.2L1605.7,1198.2L1608.9,1195.5L1616.2,1201.3L1621.1,1201.7L1626.9,1199.7L1630.4,1195.5L1645.7,1199.7L1649.2,1200.6L1653.0,1195.9L1656.5,1208.7L1660.8,1224.5L1663.7,1198.8L1671.0,1185.5L1674.7,1192.2L1679.1,1191.6L1683.4,1194.9L1689.2,1199.4L1693.6,1200.8L1697.0,1204.1L1700.2,1203.9L1704.6,1203.5L1708.6,1202.7L1711.0,1200.4L1715.3,1203.5L1719.1,1208.4L1722.6,1204.7L1726.9,1202.5L1730.4,1203.2L1733.3,1168.1L1737.0,1184.6L1744.3,1188.9L1750.7,1201.4L1755.0,1199.5L1761.7,1208.9L1766.0,1203.7L1777.1,1215.5L1780.5,1216.5L1787.8,1213.8L1793.6,1215.2L1800.8,1220.0L1809.5,1218.5L1813.0,1216.7L1816.8,1217.7L1823.4,1212.7L1827.5,1207.3L1830.7,1202.7L1835.0,1198.2L1839.4,1201.9L1845.7,1192.2L1849.5,1190.8L1853.9,1183.8L1856.8,1188.2L1860.2,1189.1L1863.1,1181.0L1867.5,1182.1L1872.1,1180.7L1873.8,1184.4L1878.1,1194.7L1881.0,1218.6L1885.4,1213.9L1888.9,1194.7L1891.8,1204.8L1895.5,1201.0L1899.9,1205.6L1902.8,1201.9L1939.0,1199.5L1943.4,1200.8L1946.3,1206.1L1950.6,1207.5L1954.4,1217.4L1957.3,1225.8L1960.8,1206.6L1964.2,1192.1L1968.0,1191.9L1971.5,1194.7L1976.1,1199.8L1981.0,1205.5L1986.3,1210.8L1990.6,1210.0L1994.1,1209.5L1997.6,1207.9L2001.3,1211.2L2004.2,1214.8L2008.6,1212.2L2011.5,1218.9L2015.2,1218.0L2019.3,1094.3L2022.2,1185.3L2026.0,1193.3L2029.7,1195.4L2033.2,1208.5L2037.0,1209.8L2040.5,1213.8L2043.4,1213.9L2048.3,1219.3L2053.5,1220.7L2058.4,1227.1L2062.2,1225.8L2065.1,1228.8L2070.0,1230.3L2072.9,1230.3L2076.7,1230.5L2080.2,1228.8L2084.0,1230.3L2088.3,1231.1L2092.1,1230.6L2095.0,1230.2L2099.0,1231.4L2101.9,1230.4L2105.7,1230.4L2110.6,1214.3L2116.4,1206.8L2121.1,1192.4L2124.0,1180.3L2127.4,1160.9L2131.2,1188.7L2134.1,1182.1L2138.2,1184.3L2141.9,1185.3L2145.4,1187.1L2149.8,1188.6L2153.5,1190.8L2156.4,1195.2L2160.2,1198.4L2163.1,1159.5L2167.1,1209.3L2170.3,1205.9L2173.8,1202.2L2177.6,1201.4L2181.1,1207.9L2184.8,1205.2L2189.2,1208.6L2192.1,1228.2L2196.1,1228.2L2199.9,1207.0L2202.8,1198.2L2207.1,1192.5L2210.9,1185.7L2213.8,1204.3L2217.3,1203.9L2221.6,1213.9L2224.5,1220.6L2228.9,1220.1L2233.2,1225.8L2236.7,1224.3L2240.5,1222.1L2244.3,1225.6L2247.1,1223.4L2251.2,1223.0L2261.6,1220.9L2264.5,1223.3L2268.9,1218.9L2272.4,1220.7L2275.3,1218.5L2279.6,1222.3L2282.5,1217.6L2286.9,1220.0L2291.2,1218.0L2294.1,1220.9L2297.6,1219.0L2301.4,1212.7L2304.3,1124.4L2308.0,1178.5L2312.9,1184.0L2316.4,1183.6L2321.1,1193.5L2326.0,1199.2L2329.5,1204.1L2333.8,1207.2L2337.6,1209.0L2341.4,1214.3L2344.3,1210.6L2349.2,1214.7L2352.1,1217.2L2355.9,1222.2L2359.3,1218.8L2363.1,1222.5L2366.6,1221.6L2370.1,1218.7L2373.8,1223.0L2377.3,1221.7L2381.7,1218.8L2384.8,1217.7L2388.3,1219.8L2392.1,1219.1L2395.6,1217.0L2399.0,1220.2L2403.7,1220.5L2408.0,1218.2L2413.5,1211.0L2417.3,1203.7L2421.1,1193.9L2423.7,1098.3L2427.4,1176.1L2430.9,1176.3L2434.7,1177.0L2439.0,1176.2L2444.8,1190.4L2449.2,1181.1L2453.5,1211.5L2458.2,1207.6L2459.8,1207.0L2465.6,1207.0L2470.0,1207.6L2477.2,1206.0L2481.6,1207.7L2485.4,1212.4L2488.8,1218.2L2493.2,1228.4L2496.1,1203.8L2499.8,1202.3L2503.3,1207.1L2507.1,1199.5L2510.6,1205.8L2514.0,1212.9L2517.8,1216.5L2521.3,1207.7L2525.1,1213.1L2528.8,1220.6L2532.9,1217.2L2536.1,1221.1L2539.6,1217.4L2543.3,1223.5L2546.8,1225.8L2551.2,1222.3L2554.0,1220.5L2557.8,1221.9L2561.3,1227.3L2564.8,1225.7L2568.5,1222.5L2572.9,1218.7L2576.4,1214.5L2581.6,1222.9L2586.8,1230.1L2590.3,1191.5L2594.1,1204.3L2597.5,1202.3L2601.3,1207.9L2604.8,1205.2L2609.1,1212.1L2612.9,1208.9L2615.8,1217.5L2620.1,1214.5L2623.6,1211.6L2626.5,1212.5L2630.0,1213.8L2633.8,1215.9L2639.6,1216.3L2643.9,1212.5L2647.7,1219.1L2652.0,1215.6L2654.6,1203.3L2659.0,1175.9L2662.8,1189.0L2666.2,1178.8L2670.0,1188.6L2673.5,1191.9L2677.3,1198.5L2681.6,1202.2L2684.5,1202.4L2688.3,1202.8L2691.7,1202.2L2696.1,1205.4L2700.4,1206.1L2704.8,1205.5L2709.1,1203.4L2713.5,1207.5L2716.4,1208.6L2720.7,1202.5L2724.5,1199.8L2727.4,1178.6L2731.5,1186.0L2735.2,1194.1L2738.1,1201.4L2742.5,1193.5L2746.8,1203.9L2750.6,1203.9L2754.1,1206.6L2757.0,1209.0L2760.7,1207.7L2764.2,1216.0L2767.7,1216.6L2770.9,1212.5L2774.3,1214.0L2778.7,1214.8L2782.2,1217.8L2785.4,1210.9L2788.8,1215.9L2793.2,1218.1L2796.7,1217.6L2800.4,1220.1L2804.2,1220.1L2807.7,1221.8L2810.6,1217.3L2814.1,1214.9L2817.8,1226.9L2821.6,1219.3L2825.1,1217.6L2828.8,1225.4L2832.9,1203.7L2836.1,1220.5L2840.4,1208.2L2846.8,1198.3L2850.6,1192.8L2854.1,1187.1L2857.5,1186.6L2861.3,1109.1L2864.8,1181.4L2868.6,1152.4L2872.3,1180.0L2875.2,1150.3L2879.6,1193.2L2883.1,1204.8L2887.4,1204.0L2891.8,1198.2L2897.6,1207.7L2904.8,1211.3L2909.1,1213.4L2913.5,1211.0L2917.8,1210.9L2922.8,1217.6L2926.5,1214.3L2930.9,1219.5L2936.7,1216.1L2941.0,1212.8L2948.3,1220.1L2954.9,1199.1L2959.3,1210.9L2962.8,1214.5L2966.5,1205.4L2970.0,1207.6L2973.5,1209.5L2977.3,1210.2L2981.6,1208.1L2986.0,1202.8L2991.8,1207.1L2998.4,1205.4L3002.5,1208.2L3006.2,1211.1L3010.6,1205.6L3013.5,1209.6L3016.4,1144.1L3020.7,1192.8L3024.5,1227.0L3030.9,1206.4L3035.2,1210.6L3038.1,1204.5L3044.2,1211.7L3045.9,1211.6L3049.4,1218.8L3054.6,1219.1L3060.4,1222.1L3067.1,1222.8L3070.5,1223.7L3074.9,1226.5L3079.2,1230.0L3082.1,1230.1L3087.9,1230.3L3093.7,1230.8L3100.4,1228.4L3103.9,1231.1L3106.8,1218.3L3111.1,1209.2L3115.5,1196.6L3118.4,1185.3L3122.1,1199.4L3125.6,1202.9L3128.5,1213.2L3132.9,1230.8L3136.6,1222.8L3140.1,1221.0L3143.6,1190.8L3146.5,1071.3L3150.2,1171.3L3153.7,1156.1L3157.5,1135.3L3161.3,1162.9L3165.3,1202.7L3176.3,1206.0L3186.5,1195.3L3193.7,1150.1L3197.2,1181.3L3201.5,1188.5L3205.3,1190.2L3208.2,1193.0L3212.6,1196.2L3218.4,1202.1L3222.7,1200.7L3227.1,1207.9L3230.5,1211.2L3234.3,1208.4L3238.7,1207.7L3243.0,1212.1L3247.3,1210.3L3252.3,1212.1L3256.0,1210.5L3258.9,1228.6L3263.3,1214.5L3266.8,1196.1L3269.7,1190.3L3273.4,1179.4L3277.8,1190.6L3280.7,1199.0L3283.6,1202.8L3287.9,1215.6L3292.3,1212.4L3295.8,1220.6L3298.7,1221.3L3302.4,1107.6L3306.8,1199.3L3310.5,1204.5L3314.0,1204.7L3318.4,1207.3L3321.8,1209.4L3327.1,1215.0L3331.4,1224.4L3335.8,1221.3L3343.0,1220.7L3346.5,1219.6L3350.3,1216.1L3354.6,1230.1L3357.5,1214.0L3360.4,1210.3L3364.2,1230.6L3367.6,1214.1L3371.4,1222.7L3374.9,1226.0L3382.1,1227.6L3385.9,1217.8L3390.3,1230.1L3393.7,1213.2L3397.2,1214.1L3401.0,1213.4L3404.5,1219.3L3407.4,1213.3L3411.1,1206.6L3414.6,1213.0L3418.4,1204.2L3421.9,1207.8L3425.6,1200.8L3428.5,1205.2L3432.9,1200.3L3436.6,1205.1L3439.5,1186.5L3443.9,1169.9L3447.4,1181.0L3450.8,1194.9L3458.1,1202.7L3461.8,1204.1L3465.3,1205.7L3469.7,1206.3L3473.4,1207.1L3476.9,1210.5L3483.6,1213.6L3490.3,1132.4L3494.6,1204.1L3498.1,1201.5L3501.0,1204.9L3504.8,1203.6L3508.8,1207.9L3512.0,1206.6L3516.3,1207.3L3519.8,1207.2L3523.6,1210.4L3531.4,1209.8L3535.2,1212.0L3538.7,1211.0L3542.2,1209.2L3545.9,1205.0L3550.3,1211.7L3553.2,1210.6L3556.1,1220.3L3560.4,1211.0L3563.9,1203.7L3570.6,1198.8L3574.9,1206.0L3579.3,1199.0L3582.1,1204.5L3585.9,1214.3" stroke="#F2495C" stroke-width="2" fill="none" stroke-linejoin="round"/><path d="M115.1,1222.2L118.6,1222.8L122.0,1221.0L125.8,1225.4L130.1,1221.4L133.0,1225.0L136.8,1218.7L140.9,1225.5L144.6,1223.0L148.1,1222.5L151.9,1223.9L155.7,1225.5L158.6,1203.4L162.6,1070.0L166.4,1183.7L170.2,1192.7L173.6,1203.6L176.5,1210.1L180.9,1213.1L184.6,1219.5L188.1,1219.3L191.6,1223.3L195.7,1225.6L198.6,1221.9L202.6,1224.9L207.8,1229.9L213.6,1230.4L216.5,1230.3L220.0,1230.6L224.4,1230.4L227.3,1230.7L231.6,1230.6L237.4,1230.0L246.1,1229.1L250.4,1230.3L254.8,1227.6L262.0,1227.0L267.8,1224.4L272.2,1220.8L278.0,1219.8L281.5,1209.3L286.1,1191.4L288.7,1105.9L292.5,1175.5L296.8,1173.5L300.6,1178.4L303.5,1187.3L307.0,1188.4L310.4,1215.9L317.7,1209.4L321.5,1213.5L325.8,1209.5L330.2,1213.9L336.0,1211.9L341.8,1216.1L347.6,1215.0L351.0,1216.6L354.2,1224.1L357.7,1226.1L361.5,1213.9L365.8,1211.9L368.4,1202.9L372.2,1213.5L376.5,1206.8L380.0,1215.2L383.2,1211.7L387.3,1215.7L390.2,1216.6L393.9,1213.2L397.4,1218.1L401.2,1220.2L405.5,1217.7L408.4,1217.8L412.2,1217.5L415.7,1215.2L418.6,1217.1L422.9,1212.9L430.2,1218.3L433.9,1215.8L437.4,1220.6L440.9,1218.2L445.2,1219.0L447.8,1134.3L451.9,1153.4L455.4,1165.9L459.1,1173.4L462.6,1190.5L467.0,1195.8L470.2,1199.4L473.7,1204.0L478.0,1207.2L481.8,1212.1L488.1,1215.1L492.5,1218.6L498.3,1218.6L502.6,1222.6L507.0,1224.4L509.9,1219.9L513.4,1221.8L517.1,1222.9L520.9,1212.3L523.8,1199.1L527.9,1205.3L531.6,1208.2L535.4,1201.6L539.7,1198.9L543.2,1195.5L547.6,1192.4L551.9,1195.4L556.3,1196.0L562.1,1193.2L567.9,1197.1L572.2,1195.6L576.5,1198.0L580.0,1203.6L582.9,1193.5L586.7,1215.4L591.0,1117.7L593.9,1207.1L597.7,1204.7L601.8,1196.5L605.5,1202.4L609.9,1203.9L612.8,1205.5L615.7,1218.6L620.0,1200.5L624.4,1204.2L630.2,1198.1L634.5,1213.5L638.9,1207.0L641.8,1216.1L645.5,1214.1L651.9,1219.3L655.7,1220.4L660.0,1221.8L666.4,1214.8L670.8,1220.7L675.1,1205.5L678.0,1220.7L682.4,1213.3L686.7,1212.1L689.6,1225.1L694.0,1217.7L700.0,1213.1L703.2,1217.8L708.1,1211.2L710.4,1215.1L714.7,1203.1L719.1,1195.9L722.0,1202.5L726.3,1187.9L729.8,1181.3L733.6,1147.4L736.5,1185.3L740.8,1196.2L744.6,1194.1L748.1,1200.1L751.9,1204.2L755.3,1205.1L759.7,1208.0L762.6,1212.0L766.1,1215.3L769.8,1217.6L774.2,1215.2L778.5,1213.5L782.9,1216.1L788.7,1219.3L794.5,1219.2L795.9,1219.0L801.7,1217.1L806.1,1222.7L809.5,1219.8L814.2,1220.8L821.1,1198.7L824.9,1210.6L832.1,1200.0L836.5,1200.5L843.7,1200.8L851.0,1199.5L856.8,1198.2L864.0,1201.2L872.7,1200.0L875.6,1105.2L879.4,1188.6L883.7,1183.9L890.7,1225.4L894.5,1214.2L898.2,1207.3L904.6,1209.0L909.0,1214.3L912.7,1214.0L916.2,1213.7L920.0,1222.4L923.5,1212.4L927.8,1214.7L931.6,1220.5L934.5,1217.6L938.5,1214.8L942.9,1224.2L949.0,1226.3L953.0,1216.9L956.8,1216.5L959.7,1210.2L964.0,1224.5L969.3,1213.5L971.9,1214.7L975.6,1227.8L979.1,1225.2L982.3,1210.4L985.8,1213.0L992.4,1219.3L996.5,1214.4L1000.9,1209.0L1004.6,1206.4L1008.1,1208.6L1011.9,1203.2L1015.3,1193.2L1019.1,1192.2L1022.6,1213.3L1029.3,1210.8L1033.6,1211.7L1037.1,1211.6L1040.9,1212.2L1044.3,1208.3L1048.7,1214.6L1051.9,1204.6L1054.8,1184.3L1059.4,1153.3L1062.6,1183.7L1066.4,1186.5L1070.4,1181.4L1077.7,1185.0L1084.9,1189.5L1091.6,1195.3L1095.9,1193.3L1099.7,1195.1L1106.7,1196.1L1110.4,1194.2L1114.2,1196.2L1118.5,1195.0L1122.0,1204.4L1124.9,1229.4L1129.3,1211.5L1133.0,1191.2L1136.5,1191.2L1140.0,1185.7L1143.8,1182.6L1147.2,1189.2L1151.0,1187.0L1154.5,1177.8L1157.7,1197.6L1162.0,1136.4L1166.1,1194.4L1169.0,1192.5L1172.7,1188.3L1177.1,1193.7L1182.9,1199.5L1187.2,1203.7L1191.0,1206.8L1198.8,1217.3L1202.6,1220.1L1205.5,1211.9L1209.8,1226.0L1214.2,1212.1L1224.3,1217.2L1227.2,1222.1L1231.3,1219.0L1239.4,1221.1L1242.9,1230.4L1246.7,1226.9L1251.0,1221.7L1254.5,1218.7L1260.6,1212.0L1264.9,1210.0L1271.9,1200.5L1275.1,1197.9L1279.1,1194.4L1286.1,1187.4L1287.7,1182.9L1293.5,1178.5L1297.9,1173.9L1300.8,1173.6L1304.6,1191.0L1308.6,1211.0L1312.4,1213.0L1315.9,1208.1L1319.6,1208.6L1326.9,1205.9L1330.7,1204.8L1334.7,1208.0L1337.9,1204.2L1342.2,1203.3L1345.7,1213.0L1348.6,1196.7L1352.1,1165.8L1356.4,1137.2L1359.6,1183.4L1363.1,1181.8L1367.5,1184.3L1371.8,1185.9L1376.2,1192.7L1380.5,1193.8L1387.8,1198.3L1395.0,1194.9L1397.9,1198.4L1402.3,1195.8L1406.6,1197.2L1410.9,1203.4L1415.3,1198.2L1418.2,1203.4L1422.0,1221.7L1425.4,1203.7L1428.9,1189.9L1432.7,1178.3L1436.5,1183.7L1440.5,1186.7L1444.3,1190.6L1448.0,1141.9L1451.0,1171.4L1455.0,1181.2L1458.8,1175.4L1462.5,1194.5L1466.0,1183.7L1469.8,1198.2L1473.8,1198.2L1477.6,1201.9L1481.1,1201.0L1484.9,1199.4L1487.2,1192.9L1491.5,1205.4L1495.6,1210.0L1498.8,1207.1L1502.8,1204.6L1507.2,1217.9L1509.5,1208.9L1513.8,1205.8L1518.2,1221.6L1521.7,1215.9L1525.4,1220.4L1531.2,1210.8L1539.4,1213.0L1543.7,1210.9L1547.2,1208.9L1551.0,1206.1L1557.3,1197.6L1561.7,1199.5L1565.2,1194.9L1568.9,1195.8L1571.8,1192.0L1576.2,1189.3L1579.9,1193.7L1582.8,1183.7L1586.9,1195.4L1590.7,1191.9L1594.1,1202.2L1597.9,1209.9L1602.3,1201.7L1605.7,1204.0L1608.9,1202.6L1616.2,1203.9L1621.1,1202.2L1626.9,1203.3L1630.4,1204.5L1645.7,1202.9L1649.2,1203.0L1653.0,1209.4L1656.5,1206.5L1660.8,1215.5L1663.7,1208.0L1671.0,1196.4L1674.7,1198.2L1679.1,1204.4L1683.4,1205.9L1689.2,1204.4L1693.6,1207.3L1697.0,1209.0L1700.2,1212.2L1704.6,1209.4L1708.6,1206.0L1711.0,1210.8L1715.3,1210.8L1719.1,1207.0L1722.6,1209.6L1726.9,1208.6L1730.4,1209.4L1733.3,1066.4L1737.0,1201.7L1744.3,1203.9L1750.7,1211.9L1755.0,1205.0L1761.7,1212.9L1766.0,1214.3L1777.1,1220.0L1780.5,1221.6L1787.8,1226.5L1793.6,1216.4L1800.8,1224.6L1809.5,1228.8L1813.0,1221.5L1816.8,1208.0L1823.4,1190.8L1827.5,1157.3L1830.7,1189.7L1835.0,1197.9L1839.4,1212.1L1845.7,1196.1L1849.5,1203.5L1853.9,1193.5L1856.8,1198.0L1860.2,1193.8L1863.1,1198.0L1867.5,1199.3L1872.1,1201.9L1873.8,1195.5L1878.1,1212.1L1881.0,1229.7L1885.4,1213.7L1888.9,1201.8L1891.8,1214.4L1895.5,1213.1L1899.9,1210.5L1902.8,1212.5L1939.0,1214.2L1943.4,1212.1L1946.3,1213.6L1950.6,1214.2L1954.4,1218.3L1957.3,1225.9L1960.8,1216.1L1964.2,1206.8L1968.0,1203.3L1971.5,1208.7L1976.1,1210.6L1981.0,1214.6L1986.3,1214.8L1990.6,1219.3L1994.1,1215.7L1997.6,1216.6L2001.3,1219.3L2004.2,1220.5L2008.6,1222.1L2011.5,1219.5L2015.2,1222.5L2019.3,1098.1L2022.2,1207.9L2026.0,1211.5L2029.7,1208.4L2033.2,1211.0L2037.0,1220.5L2040.5,1218.7L2043.4,1217.5L2048.3,1221.5L2053.5,1221.4L2058.4,1220.2L2062.2,1219.0L2065.1,1218.9L2070.0,1222.7L2072.9,1221.7L2076.7,1223.8L2080.2,1222.8L2084.0,1225.6L2088.3,1227.2L2092.1,1223.8L2095.0,1219.7L2099.0,1221.5L2101.9,1225.1L2105.7,1220.7L2110.6,1220.2L2116.4,1212.7L2121.1,1201.3L2124.0,1182.7L2127.4,1161.0L2131.2,1176.9L2134.1,1188.7L2138.2,1193.6L2141.9,1202.7L2145.4,1199.6L2149.8,1203.2L2153.5,1201.2L2156.4,1202.7L2160.2,1205.1L2163.1,1187.6L2167.1,1205.9L2170.3,1204.0L2173.8,1201.7L2177.6,1207.6L2181.1,1204.7L2184.8,1209.8L2189.2,1207.5L2192.1,1214.9L2196.1,1214.3L2199.9,1205.6L2202.8,1201.2L2207.1,1204.7L2210.9,1196.2L2213.8,1203.3L2217.3,1189.4L2221.6,1204.3L2224.5,1207.0L2228.9,1209.9L2233.2,1210.4L2236.7,1210.3L2240.5,1211.5L2244.3,1209.9L2247.1,1210.9L2251.2,1209.3L2261.6,1206.7L2264.5,1210.3L2268.9,1205.3L2272.4,1215.9L2275.3,1208.7L2279.6,1211.1L2282.5,1205.8L2286.9,1211.9L2291.2,1206.4L2294.1,1210.6L2297.6,1211.8L2301.4,1202.6L2304.3,1117.2L2308.0,1190.8L2312.9,1185.9L2316.4,1192.8L2321.1,1192.6L2326.0,1203.3L2329.5,1204.9L2333.8,1204.0L2337.6,1207.3L2341.4,1207.4L2344.3,1212.3L2349.2,1208.7L2352.1,1210.7L2355.9,1213.3L2359.3,1211.2L2363.1,1213.9L2366.6,1214.1L2370.1,1211.9L2373.8,1212.8L2377.3,1213.5L2381.7,1210.6L2384.8,1213.9L2388.3,1210.5L2392.1,1214.5L2395.6,1210.4L2399.0,1210.8L2403.7,1211.4L2408.0,1211.9L2413.5,1210.0L2417.3,1201.5L2421.1,1186.1L2423.7,1175.7L2427.4,1147.3L2430.9,1151.6L2434.7,1157.0L2439.0,1163.2L2444.8,1177.5L2449.2,1171.0L2453.5,1198.6L2458.2,1200.5L2459.8,1198.5L2465.6,1203.2L2470.0,1202.5L2477.2,1204.5L2481.6,1210.6L2485.4,1211.0L2488.8,1221.6L2493.2,1218.8L2496.1,1207.5L2499.8,1204.0L2503.3,1209.1L2507.1,1209.3L2510.6,1207.9L2514.0,1211.6L2517.8,1215.4L2521.3,1216.0L2525.1,1213.3L2528.8,1208.5L2532.9,1219.5L2536.1,1218.8L2539.6,1223.0L2543.3,1206.8L2546.8,1220.6L2551.2,1225.6L2554.0,1221.0L2557.8,1208.7L2561.3,1220.9L2564.8,1208.9L2568.5,1225.9L2572.9,1216.5L2576.4,1216.3L2581.6,1204.6L2586.8,1193.8L2590.3,1155.0L2594.1,1188.9L2597.5,1193.8L2601.3,1204.8L2604.8,1210.9L2609.1,1202.0L2612.9,1207.7L2615.8,1208.5L2620.1,1206.8L2623.6,1212.6L2626.5,1216.8L2630.0,1209.2L2633.8,1207.8L2639.6,1216.9L2643.9,1207.8L2647.7,1214.5L2652.0,1207.5L2654.6,1208.0L2659.0,1190.3L2662.8,1200.4L2666.2,1196.4L2670.0,1202.2L2673.5,1201.0L2677.3,1201.3L2681.6,1200.3L2684.5,1197.1L2688.3,1198.7L2691.7,1199.0L2696.1,1200.4L2700.4,1196.1L2704.8,1204.5L2709.1,1204.6L2713.5,1203.6L2716.4,1205.5L2720.7,1204.6L2724.5,1205.6L2727.4,1193.2L2731.5,1192.6L2735.2,1198.2L2738.1,1200.6L2742.5,1196.5L2746.8,1196.4L2750.6,1202.3L2754.1,1201.4L2757.0,1205.4L2760.7,1205.4L2764.2,1208.4L2767.7,1208.9L2770.9,1207.7L2774.3,1209.3L2778.7,1213.5L2782.2,1211.0L2785.4,1208.5L2788.8,1215.1L2793.2,1213.2L2796.7,1211.6L2800.4,1211.0L2804.2,1213.4L2807.7,1213.0L2810.6,1208.4L2814.1,1214.8L2817.8,1217.1L2821.6,1210.0L2825.1,1218.9L2828.8,1217.4L2832.9,1211.0L2836.1,1202.0L2840.4,1209.9L2846.8,1208.9L2850.6,1207.7L2854.1,1194.3L2857.5,1206.4L2861.3,1192.5L2864.8,1184.2L2868.6,1169.2L2872.3,1188.1L2875.2,1148.8L2879.6,1203.9L2883.1,1204.9L2887.4,1208.1L2891.8,1206.9L2897.6,1205.9L2904.8,1206.9L2909.1,1210.4L2913.5,1206.1L2917.8,1209.4L2922.8,1210.6L2926.5,1208.9L2930.9,1212.0L2936.7,1213.8L2941.0,1212.8L2948.3,1215.5L2954.9,1201.5L2959.3,1206.2L2962.8,1211.0L2966.5,1208.2L2970.0,1205.6L2973.5,1205.8L2977.3,1204.6L2981.6,1205.3L2986.0,1207.8L2991.8,1207.2L2998.4,1208.3L3002.5,1201.8L3006.2,1203.8L3010.6,1205.7L3013.5,1207.2L3016.4,1079.4L3020.7,1190.8L3024.5,1216.2L3030.9,1202.5L3035.2,1204.4L3038.1,1198.4L3044.2,1208.0L3045.9,1206.7L3049.4,1207.1L3054.6,1215.2L3060.4,1211.8L3067.1,1215.4L3070.5,1215.8L3074.9,1216.2L3079.2,1220.8L3082.1,1222.4L3087.9,1215.9L3093.7,1217.9L3100.4,1216.7L3103.9,1216.6L3106.8,1220.0L3111.1,1218.3L3115.5,1216.3L3118.4,1219.7L3122.1,1221.9L3125.6,1202.9L3128.5,1206.2L3132.9,1195.0L3136.6,1192.9L3140.1,1211.7L3143.6,1208.4L3146.5,1191.3L3150.2,1205.7L3153.7,1206.3L3157.5,1184.9L3161.3,1196.3L3165.3,1202.2L3176.3,1197.4L3186.5,1209.7L3193.7,1166.5L3197.2,1195.5L3201.5,1193.7L3205.3,1187.9L3208.2,1186.7L3212.6,1192.9L3218.4,1195.7L3222.7,1200.2L3227.1,1198.4L3230.5,1196.9L3234.3,1199.3L3238.7,1199.7L3243.0,1203.2L3247.3,1202.0L3252.3,1208.1L3256.0,1206.6L3258.9,1218.6L3263.3,1219.2L3266.8,1200.0L3269.7,1198.7L3273.4,1190.2L3277.8,1197.6L3280.7,1200.2L3283.6,1204.1L3287.9,1208.2L3292.3,1213.9L3295.8,1210.9L3298.7,1210.2L3302.4,1109.0L3306.8,1194.9L3310.5,1190.7L3314.0,1197.7L3318.4,1206.1L3321.8,1205.1L3327.1,1209.7L3331.4,1213.3L3335.8,1219.9L3343.0,1213.9L3346.5,1215.4L3350.3,1225.6L3354.6,1219.4L3357.5,1228.8L3360.4,1218.2L3364.2,1229.9L3367.6,1221.5L3371.4,1217.4L3374.9,1224.8L3382.1,1224.0L3385.9,1226.8L3390.3,1216.0L3393.7,1222.7L3397.2,1214.9L3401.0,1216.9L3404.5,1212.9L3407.4,1211.8L3411.1,1204.1L3414.6,1204.5L3418.4,1195.7L3421.9,1194.5L3425.6,1189.7L3428.5,1191.9L3432.9,1192.5L3436.6,1191.4L3439.5,1106.2L3443.9,1184.4L3447.4,1204.5L3450.8,1222.8L3458.1,1213.6L3461.8,1216.6L3465.3,1214.4L3469.7,1213.4L3473.4,1211.0L3476.9,1215.5L3483.6,1213.6L3490.3,1178.6L3494.6,1182.2L3498.1,1184.5L3501.0,1182.8L3504.8,1186.3L3508.8,1191.5L3512.0,1191.4L3516.3,1192.3L3519.8,1196.2L3523.6,1194.5L3531.4,1202.0L3535.2,1199.7L3538.7,1203.0L3542.2,1204.7L3545.9,1206.5L3550.3,1203.4L3553.2,1208.0L3556.1,1225.4L3560.4,1211.3L3563.9,1194.2L3570.6,1183.6L3574.9,1192.6L3579.3,1190.1L3582.1,1198.4L3585.9,1203.7" stroke="#5794F2" stroke-width="2" fill="none" stroke-linejoin="round"/><path d="M115.1,1220.8L118.6,1222.3L122.0,1221.2L125.8,1222.8L130.1,1219.3L133.0,1226.5L136.8,1220.0L140.9,1225.0L144.6,1224.7L148.1,1223.6L151.9,1221.4L155.7,1222.7L158.6,1220.3L162.6,1115.6L166.4,1201.9L170.2,1203.7L173.6,1209.4L176.5,1213.5L180.9,1217.5L184.6,1215.4L188.1,1225.5L191.6,1227.6L195.7,1222.1L198.6,1226.2L202.6,1230.5L207.8,1229.9L213.6,1230.1L216.5,1228.9L220.0,1231.0L224.4,1230.5L227.3,1230.0L231.6,1230.2L237.4,1230.5L246.1,1230.2L250.4,1230.3L254.8,1225.6L262.0,1226.5L267.8,1219.9L272.2,1218.7L278.0,1220.2L281.5,1210.0L286.1,1187.6L288.7,1148.2L292.5,1163.3L296.8,1167.3L300.6,1174.6L303.5,1180.2L307.0,1182.8L310.4,1218.9L317.7,1209.5L321.5,1209.9L325.8,1214.2L330.2,1212.3L336.0,1214.7L341.8,1215.2L347.6,1211.6L351.0,1217.0L354.2,1227.5L357.7,1230.0L361.5,1210.5L365.8,1209.4L368.4,1203.6L372.2,1211.8L376.5,1210.9L380.0,1213.2L383.2,1219.5L387.3,1215.5L390.2,1219.0L393.9,1214.4L397.4,1221.7L401.2,1216.4L405.5,1219.2L408.4,1224.1L412.2,1222.1L415.7,1217.9L418.6,1220.8L422.9,1221.5L430.2,1215.4L433.9,1224.0L437.4,1222.8L440.9,1224.8L445.2,1218.6L447.8,1087.9L451.9,1181.5L455.4,1193.9L459.1,1195.9L462.6,1205.7L467.0,1208.1L470.2,1215.2L473.7,1213.7L478.0,1221.8L481.8,1226.2L488.1,1229.9L492.5,1225.4L498.3,1229.0L502.6,1230.4L507.0,1229.3L509.9,1230.2L513.4,1230.4L517.1,1231.0L520.9,1222.7L523.8,1204.4L527.9,1212.3L531.6,1212.2L535.4,1203.0L539.7,1200.0L543.2,1204.8L547.6,1201.1L551.9,1205.2L556.3,1201.7L562.1,1205.0L567.9,1204.3L572.2,1204.5L576.5,1207.7L580.0,1207.2L582.9,1203.7L586.7,1224.1L591.0,1052.0L593.9,1214.1L597.7,1213.6L601.8,1212.4L605.5,1219.0L609.9,1209.1L612.8,1213.2L615.7,1203.6L620.0,1204.3L624.4,1226.4L630.2,1230.7L634.5,1219.5L638.9,1211.5L641.8,1221.1L645.5,1219.2L651.9,1226.3L655.7,1223.4L660.0,1230.5L666.4,1225.1L670.8,1223.1L675.1,1230.1L678.0,1232.1L682.4,1227.1L686.7,1231.2L689.6,1230.2L694.0,1232.0L700.0,1232.3L703.2,1228.8L708.1,1218.2L710.4,1207.6L714.7,1204.4L719.1,1201.1L722.0,1204.3L726.3,1187.4L729.8,1185.8L733.6,1082.6L736.5,1183.3L740.8,1193.3L744.6,1205.0L748.1,1209.5L751.9,1212.9L755.3,1214.8L759.7,1219.5L762.6,1219.6L766.1,1223.5L769.8,1222.1L774.2,1229.9L778.5,1226.8L782.9,1229.3L788.7,1230.1L794.5,1230.6L795.9,1230.0L801.7,1230.4L806.1,1230.7L809.5,1230.7L814.2,1230.5L821.1,1204.3L824.9,1219.8L832.1,1213.1L836.5,1208.5L843.7,1208.4L851.0,1203.3L856.8,1209.0L864.0,1207.6L872.7,1207.9L875.6,1084.1L879.4,1190.9L883.7,1189.0L890.7,1230.3L894.5,1218.1L898.2,1220.4L904.6,1215.2L909.0,1222.2L912.7,1218.9L916.2,1225.9L920.0,1221.5L923.5,1230.0L927.8,1222.2L931.6,1218.0L934.5,1220.8L938.5,1214.6L942.9,1214.3L949.0,1230.2L953.0,1228.4L956.8,1219.7L959.7,1214.9L964.0,1216.3L969.3,1227.3L971.9,1225.3L975.6,1218.3L979.1,1208.7L982.3,1224.7L985.8,1211.7L992.4,1216.4L996.5,1216.5L1000.9,1222.8L1004.6,1212.2L1008.1,1217.0L1011.9,1209.1L1015.3,1204.5L1019.1,1203.5L1022.6,1217.8L1029.3,1212.2L1033.6,1210.5L1037.1,1209.7L1040.9,1207.5L1044.3,1208.6L1048.7,1208.5L1051.9,1205.6L1054.8,1206.9L1059.4,1163.3L1062.6,1202.9L1066.4,1200.2L1070.4,1200.5L1077.7,1204.2L1084.9,1204.9L1091.6,1202.9L1095.9,1204.1L1099.7,1202.5L1106.7,1205.1L1110.4,1200.1L1114.2,1205.6L1118.5,1200.3L1122.0,1207.4L1124.9,1212.2L1129.3,1206.0L1133.0,1204.6L1136.5,1198.7L1140.0,1199.9L1143.8,1192.6L1147.2,1199.5L1151.0,1199.4L1154.5,1194.2L1157.7,1210.2L1162.0,1149.4L1166.1,1199.5L1169.0,1208.6L1172.7,1200.9L1177.1,1195.7L1182.9,1206.8L1187.2,1208.8L1191.0,1202.8L1198.8,1203.6L1202.6,1218.2L1205.5,1209.0L1209.8,1207.8L1214.2,1207.2L1224.3,1224.9L1227.2,1217.6L1231.3,1212.2L1239.4,1222.8L1242.9,1223.4L1246.7,1225.0L1251.0,1220.4L1254.5,1221.8L1260.6,1214.9L1264.9,1212.6L1271.9,1201.7L1275.1,1196.9L1279.1,1195.0L1286.1,1187.2L1287.7,1184.1L1293.5,1178.4L1297.9,1178.2L1300.8,1179.3L1304.6,1195.8L1308.6,1217.7L1312.4,1213.6L1315.9,1215.4L1319.6,1214.7L1326.9,1211.1L1330.7,1213.1L1334.7,1210.4L1337.9,1207.4L1342.2,1208.5L1345.7,1214.8L1348.6,1202.9L1352.1,1156.5L1356.4,1125.3L1359.6,1185.8L1363.1,1187.6L1367.5,1185.8L1371.8,1190.8L1376.2,1190.5L1380.5,1193.4L1387.8,1194.4L1395.0,1198.1L1397.9,1199.1L1402.3,1201.3L1406.6,1203.7L1410.9,1207.7L1415.3,1206.1L1418.2,1213.9L1422.0,1230.5L1425.4,1212.5L1428.9,1188.0L1432.7,1178.0L1436.5,1184.5L1440.5,1184.2L1444.3,1194.7L1448.0,1161.5L1451.0,1194.3L1455.0,1207.4L1458.8,1194.4L1462.5,1203.8L1466.0,1211.2L1469.8,1208.0L1473.8,1205.0L1477.6,1207.7L1481.1,1201.8L1484.9,1214.6L1487.2,1218.9L1491.5,1221.1L1495.6,1225.6L1498.8,1223.3L1502.8,1228.4L1507.2,1225.4L1509.5,1223.5L1513.8,1226.8L1518.2,1227.6L1521.7,1229.9L1525.4,1230.3L1531.2,1229.8L1539.4,1230.4L1543.7,1226.6L1547.2,1220.3L1551.0,1216.9L1557.3,1212.2L1561.7,1207.9L1565.2,1203.3L1568.9,1196.5L1571.8,1195.5L1576.2,1190.2L1579.9,1195.1L1582.8,1180.4L1586.9,1188.3L1590.7,1191.5L1594.1,1208.9L1597.9,1216.8L1602.3,1210.6L1605.7,1207.0L1608.9,1212.0L1616.2,1206.7L1621.1,1209.2L1626.9,1207.8L1630.4,1209.9L1645.7,1207.0L1649.2,1209.1L1653.0,1207.4L1656.5,1215.4L1660.8,1222.6L1663.7,1212.3L1671.0,1198.3L1674.7,1198.0L1679.1,1202.3L1683.4,1202.7L1689.2,1207.5L1693.6,1206.8L1697.0,1212.2L1700.2,1207.4L1704.6,1208.7L1708.6,1210.7L1711.0,1213.2L1715.3,1211.7L1719.1,1213.6L1722.6,1212.5L1726.9,1211.0L1730.4,1209.4L1733.3,1078.8L1737.0,1188.7L1744.3,1197.9L1750.7,1207.0L1755.0,1206.1L1761.7,1208.3L1766.0,1213.7L1777.1,1221.2L1780.5,1215.1L1787.8,1213.8L1793.6,1211.1L1800.8,1218.0L1809.5,1219.8L1813.0,1221.6L1816.8,1213.0L1823.4,1220.6L1827.5,1227.7L1830.7,1202.1L1835.0,1203.9L1839.4,1205.7L1845.7,1187.6L1849.5,1185.4L1853.9,1196.8L1856.8,1184.4L1860.2,1187.8L1863.1,1186.5L1867.5,1168.5L1872.1,1183.0L1873.8,1186.3L1878.1,1193.9L1881.0,1221.3L1885.4,1210.7L1888.9,1189.1L1891.8,1206.1L1895.5,1201.1L1899.9,1201.9L1902.8,1200.2L1939.0,1201.2L1943.4,1200.1L1946.3,1203.5L1950.6,1206.9L1954.4,1215.4L1957.3,1222.2L1960.8,1201.5L1964.2,1193.0L1968.0,1192.3L1971.5,1189.1L1976.1,1197.0L1981.0,1199.5L1986.3,1203.5L1990.6,1206.7L1994.1,1205.1L1997.6,1205.7L2001.3,1204.7L2004.2,1209.1L2008.6,1202.7L2011.5,1209.1L2015.2,1211.2L2019.3,1025.3L2022.2,1190.0L2026.0,1191.2L2029.7,1199.0L2033.2,1201.0L2037.0,1205.9L2040.5,1205.4L2043.4,1207.0L2048.3,1211.9L2053.5,1213.2L2058.4,1209.5L2062.2,1216.1L2065.1,1214.1L2070.0,1216.0L2072.9,1213.7L2076.7,1215.2L2080.2,1214.9L2084.0,1217.3L2088.3,1218.2L2092.1,1221.4L2095.0,1214.2L2099.0,1221.1L2101.9,1218.0L2105.7,1215.5L2110.6,1213.7L2116.4,1208.8L2121.1,1199.2L2124.0,1186.9L2127.4,1160.1L2131.2,1182.6L2134.1,1179.8L2138.2,1180.2L2141.9,1180.8L2145.4,1177.4L2149.8,1184.2L2153.5,1184.7L2156.4,1183.6L2160.2,1185.8L2163.1,1150.0L2167.1,1198.8L2170.3,1196.9L2173.8,1188.3L2177.6,1193.9L2181.1,1196.3L2184.8,1197.1L2189.2,1202.9L2192.1,1216.1L2196.1,1220.3L2199.9,1198.2L2202.8,1195.7L2207.1,1199.8L2210.9,1190.3L2213.8,1213.3L2217.3,1205.3L2221.6,1213.0L2224.5,1211.8L2228.9,1213.6L2233.2,1215.2L2236.7,1215.7L2240.5,1217.0L2244.3,1214.3L2247.1,1217.2L2251.2,1215.1L2261.6,1216.3L2264.5,1214.3L2268.9,1216.4L2272.4,1216.4L2275.3,1216.0L2279.6,1212.4L2282.5,1213.0L2286.9,1219.2L2291.2,1215.5L2294.1,1214.7L2297.6,1216.6L2301.4,1210.6L2304.3,1123.6L2308.0,1182.3L2312.9,1188.9L2316.4,1191.2L2321.1,1196.5L2326.0,1206.5L2329.5,1207.3L2333.8,1207.0L2337.6,1206.6L2341.4,1212.5L2344.3,1210.7L2349.2,1217.2L2352.1,1222.1L2355.9,1214.8L2359.3,1217.7L2363.1,1220.2L2366.6,1216.1L2370.1,1222.1L2373.8,1221.5L2377.3,1222.1L2381.7,1215.9L2384.8,1217.3L2388.3,1220.9L2392.1,1215.3L2395.6,1215.9L2399.0,1215.1L2403.7,1215.2L2408.0,1207.5L2413.5,1208.4L2417.3,1196.1L2421.1,1184.5L2423.7,1118.1L2427.4,1162.3L2430.9,1163.2L2434.7,1166.1L2439.0,1171.0L2444.8,1181.4L2449.2,1170.9L2453.5,1206.1L2458.2,1200.1L2459.8,1203.0L2465.6,1203.8L2470.0,1202.7L2477.2,1205.3L2481.6,1204.4L2485.4,1207.4L2488.8,1222.6L2493.2,1223.8L2496.1,1193.9L2499.8,1194.5L2503.3,1198.1L2507.1,1196.0L2510.6,1216.9L2514.0,1201.7L2517.8,1216.6L2521.3,1208.6L2525.1,1210.2L2528.8,1216.8L2532.9,1222.0L2536.1,1214.1L2539.6,1218.2L2543.3,1227.8L2546.8,1220.0L2551.2,1216.0L2554.0,1227.9L2557.8,1219.7L2561.3,1212.3L2564.8,1210.1L2568.5,1226.3L2572.9,1231.2L2576.4,1205.9L2581.6,1195.7L2586.8,1199.1L2590.3,1171.7L2594.1,1199.5L2597.5,1210.4L2601.3,1186.9L2604.8,1195.0L2609.1,1206.1L2612.9,1214.0L2615.8,1224.4L2620.1,1207.2L2623.6,1210.8L2626.5,1208.9L2630.0,1215.4L2633.8,1219.4L2639.6,1218.8L2643.9,1209.6L2647.7,1204.8L2652.0,1204.3L2654.6,1185.7L2659.0,1152.9L2662.8,1179.4L2666.2,1189.1L2670.0,1196.9L2673.5,1197.2L2677.3,1201.6L2681.6,1195.1L2684.5,1202.2L2688.3,1198.0L2691.7,1200.1L2696.1,1201.1L2700.4,1203.7L2704.8,1204.8L2709.1,1205.5L2713.5,1207.1L2716.4,1210.3L2720.7,1206.5L2724.5,1211.7L2727.4,1190.5L2731.5,1190.5L2735.2,1197.5L2738.1,1206.6L2742.5,1196.6L2746.8,1203.7L2750.6,1209.4L2754.1,1217.7L2757.0,1209.7L2760.7,1216.7L2764.2,1212.2L2767.7,1217.0L2770.9,1216.0L2774.3,1217.2L2778.7,1218.8L2782.2,1222.0L2785.4,1220.6L2788.8,1221.1L2793.2,1226.1L2796.7,1223.5L2800.4,1224.3L2804.2,1223.5L2807.7,1224.6L2810.6,1221.0L2814.1,1223.9L2817.8,1231.4L2821.6,1225.9L2825.1,1216.7L2828.8,1230.1L2832.9,1208.9L2836.1,1221.4L2840.4,1222.5L2846.8,1194.3L2850.6,1190.0L2854.1,1189.2L2857.5,1193.4L2861.3,1195.5L2864.8,1180.0L2868.6,1193.9L2872.3,1183.2L2875.2,1112.5L2879.6,1177.5L2883.1,1202.9L2887.4,1199.1L2891.8,1215.4L2897.6,1217.9L2904.8,1215.0L2909.1,1215.9L2913.5,1214.3L2917.8,1220.0L2922.8,1218.7L2926.5,1220.3L2930.9,1222.6L2936.7,1220.2L2941.0,1223.0L2948.3,1225.6L2954.9,1203.6L2959.3,1214.1L2962.8,1217.8L2966.5,1215.9L2970.0,1212.1L2973.5,1213.9L2977.3,1210.2L2981.6,1211.5L2986.0,1212.3L2991.8,1209.7L2998.4,1211.7L3002.5,1210.0L3006.2,1209.7L3010.6,1207.7L3013.5,1208.3L3016.4,1079.1L3020.7,1193.9L3024.5,1226.6L3030.9,1205.6L3035.2,1207.4L3038.1,1206.7L3044.2,1211.9L3045.9,1212.6L3049.4,1213.1L3054.6,1218.9L3060.4,1217.9L3067.1,1217.2L3070.5,1221.3L3074.9,1222.8L3079.2,1222.3L3082.1,1224.5L3087.9,1218.8L3093.7,1219.1L3100.4,1212.8L3103.9,1213.6L3106.8,1222.8L3111.1,1220.7L3115.5,1213.9L3118.4,1214.5L3122.1,1221.5L3125.6,1213.7L3128.5,1228.1L3132.9,1225.0L3136.6,1221.9L3140.1,1203.6L3143.6,1212.4L3146.5,1205.5L3150.2,1191.9L3153.7,1207.5L3157.5,1199.5L3161.3,1203.3L3165.3,1220.7L3176.3,1211.2L3186.5,1218.9L3193.7,1163.2L3197.2,1199.4L3201.5,1194.8L3205.3,1189.0L3208.2,1194.7L3212.6,1196.4L3218.4,1195.4L3222.7,1198.4L3227.1,1200.1L3230.5,1202.3L3234.3,1203.7L3238.7,1198.1L3243.0,1199.5L3247.3,1205.9L3252.3,1205.5L3256.0,1205.0L3258.9,1216.4L3263.3,1216.8L3266.8,1194.2L3269.7,1196.6L3273.4,1192.0L3277.8,1192.7L3280.7,1199.3L3283.6,1194.9L3287.9,1204.4L3292.3,1207.0L3295.8,1206.6L3298.7,1208.4L3302.4,1138.1L3306.8,1193.4L3310.5,1187.8L3314.0,1192.8L3318.4,1201.0L3321.8,1203.3L3327.1,1208.4L3331.4,1225.6L3335.8,1207.4L3343.0,1227.2L3346.5,1209.3L3350.3,1227.7L3354.6,1222.1L3357.5,1228.9L3360.4,1226.5L3364.2,1230.1L3367.6,1226.5L3371.4,1230.7L3374.9,1230.0L3382.1,1231.0L3385.9,1221.8L3390.3,1218.7L3393.7,1230.0L3397.2,1220.6L3401.0,1213.8L3404.5,1218.5L3407.4,1205.9L3411.1,1203.4L3414.6,1198.7L3418.4,1195.7L3421.9,1193.6L3425.6,1181.8L3428.5,1189.1L3432.9,1179.6L3436.6,1188.1L3439.5,1115.0L3443.9,1185.1L3447.4,1194.6L3450.8,1219.2L3458.1,1215.6L3461.8,1218.6L3465.3,1212.2L3469.7,1210.8L3473.4,1212.3L3476.9,1210.5L3483.6,1220.0L3490.3,1137.6L3494.6,1184.5L3498.1,1185.2L3501.0,1188.0L3504.8,1189.4L3508.8,1194.2L3512.0,1197.2L3516.3,1199.4L3519.8,1198.4L3523.6,1201.0L3531.4,1203.0L3535.2,1200.6L3538.7,1204.8L3542.2,1204.9L3545.9,1210.2L3550.3,1208.6L3553.2,1206.0L3556.1,1208.0L3560.4,1185.2L3563.9,1159.2L3570.6,1167.3L3574.9,1187.8L3579.3,1196.4L3582.1,1208.1L3585.9,1202.9" stroke="#B877D9" stroke-width="2" fill="none" stroke-linejoin="round"/><path d="M115.1,1218.6L118.6,1221.1L122.0,1218.2L125.8,1217.0L130.1,1218.0L133.0,1214.9L136.8,1213.3L140.9,1220.2L144.6,1214.8L148.1,1215.7L151.9,1215.6L155.7,1215.7L158.6,1211.3L162.6,1120.9L166.4,1198.5L170.2,1203.1L173.6,1200.4L176.5,1202.6L180.9,1209.9L184.6,1213.9L188.1,1212.6L191.6,1212.9L195.7,1211.6L198.6,1215.9L202.6,1218.2L207.8,1216.6L213.6,1215.7L216.5,1217.4L220.0,1215.9L224.4,1218.5L227.3,1215.2L231.6,1213.6L237.4,1218.0L246.1,1217.0L250.4,1212.8L254.8,1206.7L262.0,1210.8L267.8,1210.5L272.2,1206.6L278.0,1208.7L281.5,1208.6L286.1,1199.3L288.7,1106.5L292.5,1193.4L296.8,1194.3L300.6,1191.8L303.5,1195.6L307.0,1193.4L310.4,1210.1L317.7,1207.2L321.5,1206.4L325.8,1208.7L330.2,1206.6L336.0,1206.7L341.8,1204.8L347.6,1207.0L351.0,1207.8L354.2,1209.1L357.7,1209.4L361.5,1203.5L365.8,1205.0L368.4,1203.7L372.2,1207.3L376.5,1208.6L380.0,1206.1L383.2,1208.4L387.3,1203.9L390.2,1208.9L393.9,1207.1L397.4,1207.2L401.2,1213.4L405.5,1210.9L408.4,1210.6L412.2,1210.4L415.7,1212.7L418.6,1209.7L422.9,1208.3L430.2,1209.5L433.9,1210.2L437.4,1213.8L440.9,1210.1L445.2,1213.3L447.8,1117.8L451.9,1196.8L455.4,1198.6L459.1,1203.6L462.6,1209.8L467.0,1210.5L470.2,1210.4L473.7,1216.6L478.0,1210.8L481.8,1212.3L488.1,1216.5L492.5,1214.6L498.3,1218.6L502.6,1221.3L507.0,1217.7L509.9,1217.9L513.4,1222.2L517.1,1223.8L520.9,1217.2L523.8,1204.8L527.9,1211.8L531.6,1204.4L535.4,1209.1L539.7,1205.4L543.2,1206.1L547.6,1206.7L551.9,1204.4L556.3,1208.4L562.1,1206.9L567.9,1209.8L572.2,1212.4L576.5,1208.7L580.0,1212.4L582.9,1208.9L586.7,1213.4L591.0,1117.3L593.9,1208.5L597.7,1208.3L601.8,1207.7L605.5,1212.5L609.9,1211.0L612.8,1208.6L615.7,1213.9L620.0,1210.8L624.4,1210.0L630.2,1216.3L634.5,1218.5L638.9,1208.9L641.8,1222.8L645.5,1216.3L651.9,1218.0L655.7,1229.7L660.0,1225.1L666.4,1211.8L670.8,1213.2L675.1,1224.4L678.0,1220.8L682.4,1225.5L686.7,1229.5L689.6,1228.0L694.0,1227.7L700.0,1222.3L703.2,1207.6L708.1,1202.1L710.4,1208.4L714.7,1204.3L719.1,1209.1L722.0,1198.5L726.3,1194.1L729.8,1186.7L733.6,1140.2L736.5,1193.1L740.8,1197.6L744.6,1200.6L748.1,1200.1L751.9,1205.1L755.3,1212.2L759.7,1211.1L762.6,1214.4L766.1,1213.6L769.8,1218.8L774.2,1213.4L778.5,1219.3L782.9,1216.1L788.7,1222.9L794.5,1219.6L795.9,1223.4L801.7,1219.7L806.1,1223.9L809.5,1226.2L814.2,1226.1L821.1,1197.7L824.9,1207.7L832.1,1201.9L836.5,1200.8L843.7,1197.8L851.0,1195.7L856.8,1202.2L864.0,1198.9L872.7,1198.4L875.6,1127.6L879.4,1187.6L883.7,1182.6L890.7,1223.0L894.5,1211.9L898.2,1217.0L904.6,1213.5L909.0,1214.0L912.7,1221.4L916.2,1217.3L920.0,1221.3L923.5,1213.4L927.8,1220.6L931.6,1216.6L934.5,1204.6L938.5,1226.4L942.9,1217.8L949.0,1219.7L953.0,1207.2L956.8,1231.4L959.7,1219.0L964.0,1210.8L969.3,1211.5L971.9,1207.6L975.6,1230.0L979.1,1199.2L982.3,1208.2L985.8,1213.7L992.4,1221.9L996.5,1219.7L1000.9,1213.3L1004.6,1210.2L1008.1,1209.7L1011.9,1210.9L1015.3,1209.2L1019.1,1202.2L1022.6,1212.2L1029.3,1215.6L1033.6,1216.1L1037.1,1213.3L1040.9,1215.5L1044.3,1210.4L1048.7,1215.3L1051.9,1209.7L1054.8,1203.7L1059.4,1157.2L1062.6,1185.8L1066.4,1190.0L1070.4,1194.0L1077.7,1193.5L1084.9,1201.7L1091.6,1198.0L1095.9,1203.4L1099.7,1204.7L1106.7,1204.0L1110.4,1204.9L1114.2,1206.2L1118.5,1211.5L1122.0,1212.2L1124.9,1220.7L1129.3,1213.3L1133.0,1203.8L1136.5,1199.5L1140.0,1200.4L1143.8,1200.0L1147.2,1194.8L1151.0,1201.8L1154.5,1202.1L1157.7,1204.6L1162.0,1157.8L1166.1,1200.9L1169.0,1202.0L1172.7,1204.2L1177.1,1198.1L1182.9,1205.8L1187.2,1215.4L1191.0,1219.1L1198.8,1215.3L1202.6,1216.7L1205.5,1214.0L1209.8,1216.3L1214.2,1224.9L1224.3,1206.7L1227.2,1218.0L1231.3,1224.9L1239.4,1226.0L1242.9,1216.3L1246.7,1222.2L1251.0,1220.5L1254.5,1216.6L1260.6,1209.2L1264.9,1209.3L1271.9,1200.3L1275.1,1192.2L1279.1,1195.6L1286.1,1185.5L1287.7,1184.7L1293.5,1179.8L1297.9,1181.5L1300.8,1178.0L1304.6,1186.1L1308.6,1206.0L1312.4,1208.1L1315.9,1203.2L1319.6,1204.6L1326.9,1200.1L1330.7,1206.7L1334.7,1200.5L1337.9,1199.4L1342.2,1204.1L1345.7,1206.7L1348.6,1197.2L1352.1,1173.4L1356.4,1144.0L1359.6,1187.4L1363.1,1190.6L1367.5,1190.3L1371.8,1187.0L1376.2,1193.7L1380.5,1192.4L1387.8,1194.7L1395.0,1194.0L1397.9,1195.7L1402.3,1195.9L1406.6,1194.9L1410.9,1197.7L1415.3,1201.8L1418.2,1201.4L1422.0,1203.7L1425.4,1198.6L1428.9,1195.6L1432.7,1188.9L1436.5,1187.0L1440.5,1192.9L1444.3,1183.5L1448.0,1156.3L1451.0,1197.2L1455.0,1210.4L1458.8,1197.9L1462.5,1196.3L1466.0,1199.6L1469.8,1196.6L1473.8,1197.9L1477.6,1195.1L1481.1,1190.7L1484.9,1206.5L1487.2,1202.2L1491.5,1209.6L1495.6,1218.4L1498.8,1210.7L1502.8,1208.3L1507.2,1205.3L1509.5,1205.3L1513.8,1206.1L1518.2,1206.1L1521.7,1214.8L1525.4,1213.2L1531.2,1213.6L1539.4,1225.6L1543.7,1207.5L1547.2,1213.4L1551.0,1214.3L1557.3,1201.1L1561.7,1198.4L1565.2,1194.9L1568.9,1196.5L1571.8,1192.2L1576.2,1192.0L1579.9,1191.6L1582.8,1179.8L1586.9,1183.8L1590.7,1190.8L1594.1,1203.6L1597.9,1209.5L1602.3,1203.7L1605.7,1204.6L1608.9,1206.8L1616.2,1204.6L1621.1,1201.5L1626.9,1202.9L1630.4,1203.6L1645.7,1208.1L1649.2,1208.5L1653.0,1207.0L1656.5,1214.7L1660.8,1221.0L1663.7,1211.9L1671.0,1196.2L1674.7,1201.5L1679.1,1201.9L1683.4,1202.6L1689.2,1207.8L1693.6,1210.1L1697.0,1213.4L1700.2,1209.2L1704.6,1213.1L1708.6,1211.4L1711.0,1211.6L1715.3,1219.8L1719.1,1213.9L1722.6,1212.5L1726.9,1211.5L1730.4,1212.0L1733.3,1106.0L1737.0,1192.2L1744.3,1196.1L1750.7,1210.2L1755.0,1212.2L1761.7,1215.5L1766.0,1216.7L1777.1,1225.6L1780.5,1228.0L1787.8,1221.8L1793.6,1223.0L1800.8,1230.3L1809.5,1227.5L1813.0,1215.7L1816.8,1207.9L1823.4,1173.1L1827.5,1128.9L1830.7,1161.6L1835.0,1179.5L1839.4,1211.3L1845.7,1190.6L1849.5,1194.5L1853.9,1184.8L1856.8,1202.1L1860.2,1198.6L1863.1,1197.9L1867.5,1188.3L1872.1,1193.5L1873.8,1191.4L1878.1,1196.1L1881.0,1218.7L1885.4,1216.9L1888.9,1202.4L1891.8,1211.3L1895.5,1209.1L1899.9,1205.9L1902.8,1208.3L1939.0,1206.4L1943.4,1207.3L1946.3,1207.9L1950.6,1208.5L1954.4,1213.0L1957.3,1219.2L1960.8,1213.2L1964.2,1198.2L1968.0,1190.2L1971.5,1177.5L1976.1,1183.8L1981.0,1191.4L1986.3,1201.7L1990.6,1208.8L1994.1,1205.8L1997.6,1208.0L2001.3,1211.0L2004.2,1210.4L2008.6,1207.4L2011.5,1208.7L2015.2,1209.8L2019.3,1085.0L2022.2,1195.3L2026.0,1196.8L2029.7,1196.5L2033.2,1202.5L2037.0,1205.9L2040.5,1205.9L2043.4,1207.8L2048.3,1210.9L2053.5,1212.2L2058.4,1212.3L2062.2,1216.1L2065.1,1211.2L2070.0,1211.7L2072.9,1211.5L2076.7,1217.0L2080.2,1216.2L2084.0,1215.6L2088.3,1218.0L2092.1,1217.4L2095.0,1215.6L2099.0,1221.2L2101.9,1211.8L2105.7,1216.4L2110.6,1214.4L2116.4,1207.2L2121.1,1203.2L2124.0,1188.5L2127.4,1163.1L2131.2,1182.5L2134.1,1182.1L2138.2,1183.0L2141.9,1183.8L2145.4,1183.1L2149.8,1184.7L2153.5,1188.0L2156.4,1189.0L2160.2,1189.9L2163.1,1156.1L2167.1,1197.2L2170.3,1194.2L2173.8,1193.6L2177.6,1191.3L2181.1,1196.2L2184.8,1196.0L2189.2,1202.6L2192.1,1214.6L2196.1,1216.5L2199.9,1204.9L2202.8,1195.6L2207.1,1197.0L2210.9,1193.3L2213.8,1209.1L2217.3,1204.1L2221.6,1213.6L2224.5,1213.1L2228.9,1213.1L2233.2,1216.1L2236.7,1217.9L2240.5,1214.1L2244.3,1214.3L2247.1,1216.6L2251.2,1219.0L2261.6,1215.3L2264.5,1214.4L2268.9,1214.9L2272.4,1217.1L2275.3,1219.9L2279.6,1218.7L2282.5,1219.8L2286.9,1216.8L2291.2,1218.8L2294.1,1218.4L2297.6,1217.7L2301.4,1213.1L2304.3,1168.4L2308.0,1176.3L2312.9,1182.4L2316.4,1183.2L2321.1,1192.5L2326.0,1203.8L2329.5,1207.8L2333.8,1209.4L2337.6,1210.1L2341.4,1216.4L2344.3,1213.9L2349.2,1219.6L2352.1,1218.7L2355.9,1218.4L2359.3,1226.9L2363.1,1222.7L2366.6,1221.8L2370.1,1221.8L2373.8,1222.2L2377.3,1223.2L2381.7,1221.6L2384.8,1222.0L2388.3,1220.7L2392.1,1218.5L2395.6,1218.0L2399.0,1218.2L2403.7,1220.0L2408.0,1218.4L2413.5,1214.0L2417.3,1212.4L2421.1,1199.0L2423.7,1136.3L2427.4,1186.4L2430.9,1188.8L2434.7,1193.9L2439.0,1196.8L2444.8,1205.3L2449.2,1196.8L2453.5,1212.3L2458.2,1211.2L2459.8,1212.5L2465.6,1208.5L2470.0,1211.7L2477.2,1212.2L2481.6,1214.6L2485.4,1214.1L2488.8,1214.7L2493.2,1220.9L2496.1,1211.8L2499.8,1215.4L2503.3,1210.6L2507.1,1202.1L2510.6,1216.9L2514.0,1217.9L2517.8,1222.2L2521.3,1222.2L2525.1,1215.4L2528.8,1225.6L2532.9,1214.9L2536.1,1216.1L2539.6,1217.8L2543.3,1203.1L2546.8,1221.0L2551.2,1217.5L2554.0,1210.7L2557.8,1226.4L2561.3,1230.0L2564.8,1219.4L2568.5,1223.6L2572.9,1229.9L2576.4,1228.9L2581.6,1215.8L2586.8,1209.5L2590.3,1202.5L2594.1,1214.7L2597.5,1213.6L2601.3,1211.5L2604.8,1216.3L2609.1,1220.7L2612.9,1212.8L2615.8,1224.6L2620.1,1224.9L2623.6,1224.5L2626.5,1229.9L2630.0,1220.1L2633.8,1222.1L2639.6,1221.1L2643.9,1222.8L2647.7,1220.2L2652.0,1221.6L2654.6,1215.7L2659.0,1202.1L2662.8,1211.8L2666.2,1216.3L2670.0,1213.9L2673.5,1211.9L2677.3,1213.4L2681.6,1215.8L2684.5,1214.3L2688.3,1215.9L2691.7,1214.3L2696.1,1218.4L2700.4,1218.6L2704.8,1218.8L2709.1,1216.0L2713.5,1211.3L2716.4,1215.9L2720.7,1214.3L2724.5,1216.6L2727.4,1205.3L2731.5,1208.8L2735.2,1212.0L2738.1,1211.4L2742.5,1213.1L2746.8,1217.9L2750.6,1217.9L2754.1,1213.5L2757.0,1213.7L2760.7,1215.7L2764.2,1217.7L2767.7,1218.0L2770.9,1215.6L2774.3,1219.0L2778.7,1215.6L2782.2,1219.7L2785.4,1214.5L2788.8,1218.4L2793.2,1220.5L2796.7,1219.3L2800.4,1221.1L2804.2,1219.0L2807.7,1223.0L2810.6,1224.1L2814.1,1221.2L2817.8,1220.1L2821.6,1224.1L2825.1,1211.8L2828.8,1220.7L2832.9,1213.8L2836.1,1213.3L2840.4,1216.4L2846.8,1224.4L2850.6,1195.5L2854.1,1185.1L2857.5,1193.8L2861.3,1186.8L2864.8,1205.5L2868.6,1153.4L2872.3,1181.8L2875.2,1152.1L2879.6,1195.4L2883.1,1204.3L2887.4,1217.7L2891.8,1216.1L2897.6,1207.1L2904.8,1206.4L2909.1,1214.2L2913.5,1215.5L2917.8,1214.1L2922.8,1219.7L2926.5,1220.1L2930.9,1215.0L2936.7,1213.4L2941.0,1212.8L2948.3,1214.3L2954.9,1198.5L2959.3,1208.4L2962.8,1213.4L2966.5,1219.0L2970.0,1213.3L2973.5,1208.2L2977.3,1213.3L2981.6,1212.7L2986.0,1208.5L2991.8,1209.0L2998.4,1207.7L3002.5,1208.5L3006.2,1206.5L3010.6,1207.7L3013.5,1209.3L3016.4,1102.4L3020.7,1189.6L3024.5,1226.5L3030.9,1202.5L3035.2,1203.9L3038.1,1204.2L3044.2,1213.8L3045.9,1211.0L3049.4,1214.9L3054.6,1215.2L3060.4,1222.3L3067.1,1222.4L3070.5,1221.0L3074.9,1218.9L3079.2,1224.2L3082.1,1225.4L3087.9,1225.6L3093.7,1228.6L3100.4,1220.1L3103.9,1218.2L3106.8,1229.9L3111.1,1226.8L3115.5,1223.1L3118.4,1218.6L3122.1,1221.8L3125.6,1219.1L3128.5,1229.9L3132.9,1213.3L3136.6,1215.3L3140.1,1209.3L3143.6,1212.3L3146.5,1200.3L3150.2,1206.4L3153.7,1211.9L3157.5,1192.5L3161.3,1203.2L3165.3,1212.7L3176.3,1203.4L3186.5,1222.4L3193.7,1179.0L3197.2,1194.5L3201.5,1200.3L3205.3,1192.2L3208.2,1193.2L3212.6,1189.9L3218.4,1197.2L3222.7,1200.3L3227.1,1200.6L3230.5,1199.5L3234.3,1197.1L3238.7,1200.2L3243.0,1200.9L3247.3,1202.1L3252.3,1205.0L3256.0,1203.0L3258.9,1215.4L3263.3,1208.8L3266.8,1197.9L3269.7,1197.8L3273.4,1195.7L3277.8,1195.9L3280.7,1200.1L3283.6,1199.4L3287.9,1204.0L3292.3,1203.5L3295.8,1202.9L3298.7,1205.4L3302.4,1182.5L3306.8,1193.7L3310.5,1195.8L3314.0,1193.3L3318.4,1202.0L3321.8,1200.4L3327.1,1207.0L3331.4,1209.0L3335.8,1211.0L3343.0,1215.8L3346.5,1218.6L3350.3,1218.4L3354.6,1218.6L3357.5,1221.6L3360.4,1216.1L3364.2,1217.9L3367.6,1223.3L3371.4,1230.2L3374.9,1221.8L3382.1,1226.8L3385.9,1219.4L3390.3,1224.3L3393.7,1228.1L3397.2,1219.7L3401.0,1216.5L3404.5,1211.9L3407.4,1212.1L3411.1,1205.6L3414.6,1203.7L3418.4,1195.9L3421.9,1189.2L3425.6,1182.9L3428.5,1186.5L3432.9,1181.9L3436.6,1190.9L3439.5,1149.6L3443.9,1187.8L3447.4,1201.5L3450.8,1220.8L3458.1,1215.3L3461.8,1218.2L3465.3,1219.9L3469.7,1216.1L3473.4,1218.2L3476.9,1221.6L3483.6,1216.6L3490.3,1116.6L3494.6,1188.5L3498.1,1187.5L3501.0,1189.9L3504.8,1192.9L3508.8,1191.9L3512.0,1196.6L3516.3,1196.4L3519.8,1201.3L3523.6,1202.0L3531.4,1201.5L3535.2,1208.4L3538.7,1207.6L3542.2,1208.2L3545.9,1210.1L3550.3,1210.0L3553.2,1211.9L3556.1,1226.1L3560.4,1209.1L3563.9,1193.6L3570.6,1181.2L3574.9,1191.7L3579.3,1185.9L3582.1,1196.4L3585.9,1205.6" stroke="#705DA0" stroke-width="2" fill="none" stroke-linejoin="round"/><path d="M115.1,1211.6L118.6,1208.5L122.0,1208.4L125.8,1207.9L130.1,1209.0L133.0,1209.7L136.8,1209.3L140.9,1211.4L144.6,1212.2L148.1,1211.3L151.9,1208.1L155.7,1208.3L158.6,1207.0L162.6,1121.9L166.4,1195.9L170.2,1200.4L173.6,1199.9L176.5,1204.4L180.9,1200.9L184.6,1203.6L188.1,1209.2L191.6,1211.8L195.7,1209.6L198.6,1209.9L202.6,1209.3L207.8,1213.2L213.6,1216.7L216.5,1214.1L220.0,1215.5L224.4,1219.3L227.3,1216.8L231.6,1217.6L237.4,1218.3L246.1,1215.5L250.4,1213.2L254.8,1212.8L262.0,1215.2L267.8,1212.9L272.2,1209.0L278.0,1209.9L281.5,1204.3L286.1,1184.9L288.7,1115.7L292.5,1137.3L296.8,1147.3L300.6,1155.5L303.5,1161.2L307.0,1168.6L310.4,1199.2L317.7,1195.8L321.5,1198.7L325.8,1200.1L330.2,1197.3L336.0,1205.8L341.8,1209.9L347.6,1210.1L351.0,1215.1L354.2,1218.7L357.7,1224.9L361.5,1211.8L365.8,1205.8L368.4,1188.1L372.2,1184.0L376.5,1168.6L380.0,1180.5L383.2,1196.4L387.3,1209.3L390.2,1217.9L393.9,1215.4L397.4,1222.2L401.2,1219.8L405.5,1219.0L408.4,1218.7L412.2,1219.8L415.7,1215.3L418.6,1217.7L422.9,1217.1L430.2,1218.0L433.9,1215.9L437.4,1218.7L440.9,1218.7L445.2,1220.0L447.8,1175.2L451.9,1188.2L455.4,1194.0L459.1,1197.1L462.6,1207.4L467.0,1209.1L470.2,1211.6L473.7,1209.5L478.0,1220.9L481.8,1218.8L488.1,1219.8L492.5,1222.7L498.3,1221.7L502.6,1222.8L507.0,1222.6L509.9,1223.8L513.4,1224.3L517.1,1224.5L520.9,1217.7L523.8,1204.5L527.9,1211.9L531.6,1210.5L535.4,1207.9L539.7,1201.4L543.2,1204.9L547.6,1204.9L551.9,1201.4L556.3,1204.2L562.1,1202.8L567.9,1204.3L572.2,1203.5L576.5,1204.9L580.0,1210.6L582.9,1199.6L586.7,1210.0L591.0,1109.2L593.9,1210.3L597.7,1209.8L601.8,1205.6L605.5,1201.8L609.9,1207.5L612.8,1205.8L615.7,1207.9L620.0,1206.0L624.4,1212.3L630.2,1205.9L634.5,1209.8L638.9,1214.8L641.8,1208.9L645.5,1202.5L651.9,1209.3L655.7,1205.6L660.0,1204.6L666.4,1207.8L670.8,1201.8L675.1,1203.8L678.0,1205.2L682.4,1211.0L686.7,1205.9L689.6,1205.0L694.0,1200.2L700.0,1212.8L703.2,1210.8L708.1,1204.6L710.4,1205.0L714.7,1199.6L719.1,1199.4L722.0,1198.6L726.3,1195.8L729.8,1195.7L733.6,1138.3L736.5,1192.2L740.8,1196.3L744.6,1196.7L748.1,1195.1L751.9,1198.8L755.3,1197.9L759.7,1202.6L762.6,1202.5L766.1,1204.2L769.8,1203.9L774.2,1203.3L778.5,1205.9L782.9,1201.6L788.7,1209.5L794.5,1205.2L795.9,1209.8L801.7,1207.3L806.1,1209.9L809.5,1208.6L814.2,1208.9L821.1,1193.6L824.9,1202.5L832.1,1197.3L836.5,1194.5L843.7,1192.1L851.0,1189.7L856.8,1197.0L864.0,1193.3L872.7,1197.0L875.6,1115.2L879.4,1180.6L883.7,1176.5L890.7,1213.4L894.5,1207.7L898.2,1197.4L904.6,1206.4L909.0,1198.6L912.7,1205.0L916.2,1207.5L920.0,1201.4L923.5,1204.1L927.8,1220.1L931.6,1214.5L934.5,1217.9L938.5,1205.2L942.9,1201.7L949.0,1204.0L953.0,1214.5L956.8,1212.4L959.7,1201.0L964.0,1206.6L969.3,1229.1L971.9,1217.8L975.6,1221.0L979.1,1220.7L982.3,1214.7L985.8,1211.2L992.4,1220.2L996.5,1205.5L1000.9,1203.8L1004.6,1202.8L1008.1,1196.7L1011.9,1208.4L1015.3,1198.2L1019.1,1190.5L1022.6,1218.5L1029.3,1207.4L1033.6,1208.5L1037.1,1210.1L1040.9,1208.8L1044.3,1210.7L1048.7,1213.5L1051.9,1209.3L1054.8,1189.4L1059.4,1116.5L1062.6,1186.8L1066.4,1191.1L1070.4,1194.0L1077.7,1193.6L1084.9,1196.8L1091.6,1197.1L1095.9,1195.7L1099.7,1199.8L1106.7,1203.9L1110.4,1202.7L1114.2,1204.3L1118.5,1204.1L1122.0,1209.3L1124.9,1222.9L1129.3,1215.3L1133.0,1197.7L1136.5,1190.1L1140.0,1199.8L1143.8,1193.2L1147.2,1191.8L1151.0,1199.2L1154.5,1198.3L1157.7,1201.9L1162.0,1157.0L1166.1,1193.1L1169.0,1205.6L1172.7,1197.6L1177.1,1199.5L1182.9,1196.8L1187.2,1209.5L1191.0,1207.0L1198.8,1211.7L1202.6,1219.6L1205.5,1213.6L1209.8,1213.2L1214.2,1215.5L1224.3,1217.5L1227.2,1208.6L1231.3,1223.0L1239.4,1220.6L1242.9,1216.4L1246.7,1214.8L1251.0,1219.0L1254.5,1215.4L1260.6,1211.5L1264.9,1206.5L1271.9,1201.6L1275.1,1196.6L1279.1,1198.0L1286.1,1185.8L1287.7,1191.0L1293.5,1182.6L1297.9,1187.0L1300.8,1180.8L1304.6,1190.0L1308.6,1202.9L1312.4,1207.0L1315.9,1208.7L1319.6,1203.5L1326.9,1205.7L1330.7,1206.4L1334.7,1203.1L1337.9,1204.6L1342.2,1201.1L1345.7,1206.2L1348.6,1198.3L1352.1,1163.8L1356.4,1073.9L1359.6,1176.7L1363.1,1184.6L1367.5,1184.4L1371.8,1190.2L1376.2,1192.8L1380.5,1195.3L1387.8,1195.7L1395.0,1196.4L1397.9,1196.5L1402.3,1200.2L1406.6,1199.1L1410.9,1200.2L1415.3,1200.6L1418.2,1203.7L1422.0,1214.3L1425.4,1201.4L1428.9,1185.4L1432.7,1193.5L1436.5,1192.3L1440.5,1197.8L1444.3,1181.2L1448.0,1148.1L1451.0,1172.8L1455.0,1194.8L1458.8,1185.5L1462.5,1219.5L1466.0,1193.1L1469.8,1194.9L1473.8,1187.0L1477.6,1194.0L1481.1,1211.9L1484.9,1200.6L1487.2,1212.8L1491.5,1210.9L1495.6,1218.9L1498.8,1185.6L1502.8,1215.0L1507.2,1208.8L1509.5,1208.1L1513.8,1195.3L1518.2,1214.0L1521.7,1200.2L1525.4,1204.4L1531.2,1215.1L1539.4,1211.8L1543.7,1201.8L1547.2,1219.6L1551.0,1215.8L1557.3,1214.1L1561.7,1204.3L1565.2,1198.6L1568.9,1192.9L1571.8,1195.2L1576.2,1191.6L1579.9,1196.2L1582.8,1190.3L1586.9,1193.6L1590.7,1193.8L1594.1,1204.8L1597.9,1203.5L1602.3,1202.5L1605.7,1205.2L1608.9,1201.9L1616.2,1204.2L1621.1,1201.9L1626.9,1205.9L1630.4,1204.2L1645.7,1206.4L1649.2,1206.9L1653.0,1203.8L1656.5,1205.3L1660.8,1220.8L1663.7,1206.7L1671.0,1198.6L1674.7,1198.6L1679.1,1200.0L1683.4,1205.5L1689.2,1208.2L1693.6,1208.9L1697.0,1210.1L1700.2,1207.7L1704.6,1210.8L1708.6,1210.7L1711.0,1214.4L1715.3,1216.7L1719.1,1213.4L1722.6,1211.4L1726.9,1215.2L1730.4,1212.6L1733.3,1097.5L1737.0,1188.9L1744.3,1191.9L1750.7,1204.5L1755.0,1211.7L1761.7,1217.7L1766.0,1213.3L1777.1,1226.2L1780.5,1222.1L1787.8,1227.3L1793.6,1230.4L1800.8,1229.5L1809.5,1227.7L1813.0,1223.8L1816.8,1218.8L1823.4,1214.9L1827.5,1207.7L1830.7,1216.0L1835.0,1195.5L1839.4,1202.5L1845.7,1186.4L1849.5,1187.0L1853.9,1179.7L1856.8,1187.4L1860.2,1175.5L1863.1,1175.5L1867.5,1183.7L1872.1,1166.8L1873.8,1176.8L1878.1,1195.4L1881.0,1227.1L1885.4,1211.0L1888.9,1193.0L1891.8,1207.9L1895.5,1204.7L1899.9,1201.4L1902.8,1205.8L1939.0,1202.7L1943.4,1202.8L1946.3,1205.3L1950.6,1208.5L1954.4,1215.9L1957.3,1225.1L1960.8,1208.8L1964.2,1197.7L1968.0,1195.9L1971.5,1193.8L1976.1,1196.0L1981.0,1201.2L1986.3,1206.7L1990.6,1211.1L1994.1,1208.4L1997.6,1212.6L2001.3,1213.7L2004.2,1217.0L2008.6,1211.5L2011.5,1218.3L2015.2,1213.2L2019.3,1073.1L2022.2,1193.9L2026.0,1200.8L2029.7,1200.9L2033.2,1208.3L2037.0,1208.5L2040.5,1209.1L2043.4,1214.7L2048.3,1215.9L2053.5,1218.3L2058.4,1215.4L2062.2,1218.3L2065.1,1221.4L2070.0,1221.4L2072.9,1220.4L2076.7,1226.3L2080.2,1223.0L2084.0,1222.8L2088.3,1226.7L2092.1,1223.1L2095.0,1222.0L2099.0,1225.4L2101.9,1219.5L2105.7,1222.7L2110.6,1218.3L2116.4,1218.3L2121.1,1210.1L2124.0,1207.6L2127.4,1187.7L2131.2,1200.7L2134.1,1198.9L2138.2,1197.6L2141.9,1205.4L2145.4,1204.0L2149.8,1196.8L2153.5,1195.3L2156.4,1190.3L2160.2,1187.8L2163.1,1170.4L2167.1,1202.9L2170.3,1204.3L2173.8,1211.6L2177.6,1215.7L2181.1,1215.6L2184.8,1212.9L2189.2,1218.9L2192.1,1222.6L2196.1,1224.2L2199.9,1216.4L2202.8,1213.0L2207.1,1216.5L2210.9,1210.8L2213.8,1221.3L2217.3,1216.9L2221.6,1223.1L2224.5,1221.0L2228.9,1223.4L2233.2,1220.7L2236.7,1225.1L2240.5,1225.0L2244.3,1220.6L2247.1,1222.9L2251.2,1224.0L2261.6,1224.7L2264.5,1225.5L2268.9,1224.1L2272.4,1222.7L2275.3,1221.9L2279.6,1221.4L2282.5,1221.0L2286.9,1223.2L2291.2,1224.6L2294.1,1223.7L2297.6,1220.4L2301.4,1219.9L2304.3,1127.7L2308.0,1213.2L2312.9,1212.1L2316.4,1213.3L2321.1,1213.8L2326.0,1219.3L2329.5,1221.6L2333.8,1219.8L2337.6,1225.1L2341.4,1223.7L2344.3,1221.0L2349.2,1225.2L2352.1,1223.2L2355.9,1226.1L2359.3,1225.3L2363.1,1225.3L2366.6,1224.5L2370.1,1225.0L2373.8,1227.3L2377.3,1223.2L2381.7,1224.9L2384.8,1227.1L2388.3,1221.6L2392.1,1226.4L2395.6,1219.6L2399.0,1222.0L2403.7,1222.3L2408.0,1221.4L2413.5,1220.6L2417.3,1212.5L2421.1,1198.6L2423.7,1128.4L2427.4,1181.0L2430.9,1181.2L2434.7,1181.0L2439.0,1186.4L2444.8,1195.8L2449.2,1188.1L2453.5,1212.5L2458.2,1212.0L2459.8,1206.5L2465.6,1207.4L2470.0,1210.5L2477.2,1209.8L2481.6,1213.8L2485.4,1215.8L2488.8,1227.3L2493.2,1229.9L2496.1,1210.0L2499.8,1212.3L2503.3,1202.8L2507.1,1206.2L2510.6,1214.8L2514.0,1205.1L2517.8,1228.2L2521.3,1220.2L2525.1,1223.1L2528.8,1229.0L2532.9,1228.9L2536.1,1227.6L2539.6,1230.6L2543.3,1230.2L2546.8,1217.0L2551.2,1230.3L2554.0,1230.1L2557.8,1230.5L2561.3,1227.1L2564.8,1218.6L2568.5,1215.3L2572.9,1221.7L2576.4,1212.1L2581.6,1230.7L2586.8,1230.1L2590.3,1160.8L2594.1,1201.1L2597.5,1206.2L2601.3,1208.0L2604.8,1203.7L2609.1,1199.5L2612.9,1210.6L2615.8,1221.5L2620.1,1213.4L2623.6,1220.4L2626.5,1219.9L2630.0,1219.3L2633.8,1221.8L2639.6,1221.9L2643.9,1217.9L2647.7,1216.6L2652.0,1218.1L2654.6,1204.2L2659.0,1176.9L2662.8,1197.0L2666.2,1200.3L2670.0,1194.6L2673.5,1197.6L2677.3,1198.9L2681.6,1197.6L2684.5,1200.6L2688.3,1203.8L2691.7,1198.7L2696.1,1206.3L2700.4,1206.4L2704.8,1207.8L2709.1,1207.2L2713.5,1208.4L2716.4,1219.3L2720.7,1210.6L2724.5,1206.2L2727.4,1185.4L2731.5,1188.9L2735.2,1198.6L2738.1,1202.6L2742.5,1196.1L2746.8,1206.6L2750.6,1208.4L2754.1,1210.1L2757.0,1210.1L2760.7,1212.7L2764.2,1214.3L2767.7,1217.2L2770.9,1212.6L2774.3,1218.7L2778.7,1222.2L2782.2,1218.8L2785.4,1217.3L2788.8,1222.4L2793.2,1222.6L2796.7,1222.1L2800.4,1219.9L2804.2,1210.7L2807.7,1197.8L2810.6,1190.2L2814.1,1198.6L2817.8,1219.4L2821.6,1222.3L2825.1,1224.1L2828.8,1222.2L2832.9,1220.7L2836.1,1218.3L2840.4,1209.4L2846.8,1211.9L2850.6,1192.1L2854.1,1200.2L2857.5,1188.1L2861.3,1189.9L2864.8,1182.7L2868.6,1156.8L2872.3,1190.9L2875.2,1149.3L2879.6,1200.0L2883.1,1205.0L2887.4,1195.3L2891.8,1221.1L2897.6,1210.8L2904.8,1215.9L2909.1,1210.8L2913.5,1213.3L2917.8,1217.9L2922.8,1215.4L2926.5,1222.3L2930.9,1218.7L2936.7,1215.4L2941.0,1217.4L2948.3,1217.5L2954.9,1200.1L2959.3,1207.7L2962.8,1208.7L2966.5,1205.2L2970.0,1208.0L2973.5,1207.4L2977.3,1206.6L2981.6,1207.9L2986.0,1206.4L2991.8,1207.2L2998.4,1206.4L3002.5,1208.2L3006.2,1204.8L3010.6,1205.5L3013.5,1206.9L3016.4,1094.8L3020.7,1192.3L3024.5,1223.4L3030.9,1205.4L3035.2,1206.3L3038.1,1202.4L3044.2,1207.9L3045.9,1212.8L3049.4,1215.2L3054.6,1211.3L3060.4,1212.5L3067.1,1216.3L3070.5,1213.3L3074.9,1220.6L3079.2,1219.3L3082.1,1222.2L3087.9,1219.7L3093.7,1214.8L3100.4,1226.4L3103.9,1224.1L3106.8,1221.5L3111.1,1227.2L3115.5,1229.7L3118.4,1224.1L3122.1,1208.0L3125.6,1191.2L3128.5,1193.5L3132.9,1190.0L3136.6,1191.5L3140.1,1200.6L3143.6,1207.9L3146.5,1212.4L3150.2,1199.1L3153.7,1213.8L3157.5,1192.4L3161.3,1201.8L3165.3,1217.3L3176.3,1196.7L3186.5,1192.3L3193.7,1140.5L3197.2,1180.4L3201.5,1187.2L3205.3,1195.0L3208.2,1196.6L3212.6,1196.8L3218.4,1195.2L3222.7,1199.1L3227.1,1199.8L3230.5,1202.3L3234.3,1204.7L3238.7,1204.8L3243.0,1202.2L3247.3,1205.1L3252.3,1206.1L3256.0,1206.6L3258.9,1215.0L3263.3,1212.6L3266.8,1203.9L3269.7,1195.9L3273.4,1193.2L3277.8,1195.2L3280.7,1200.4L3283.6,1202.5L3287.9,1204.1L3292.3,1201.1L3295.8,1207.6L3298.7,1213.2L3302.4,1138.4L3306.8,1194.4L3310.5,1192.9L3314.0,1200.3L3318.4,1202.8L3321.8,1201.0L3327.1,1205.6L3331.4,1210.3L3335.8,1214.0L3343.0,1207.8L3346.5,1214.6L3350.3,1213.7L3354.6,1227.5L3357.5,1221.1L3360.4,1217.6L3364.2,1226.3L3367.6,1217.3L3371.4,1222.2L3374.9,1226.5L3382.1,1222.4L3385.9,1225.5L3390.3,1224.6L3393.7,1224.1L3397.2,1210.3L3401.0,1214.6L3404.5,1209.4L3407.4,1209.3L3411.1,1201.4L3414.6,1200.9L3418.4,1196.7L3421.9,1191.0L3425.6,1188.6L3428.5,1186.6L3432.9,1187.2L3436.6,1185.2L3439.5,1156.9L3443.9,1180.1L3447.4,1190.7L3450.8,1217.0L3458.1,1211.6L3461.8,1215.0L3465.3,1212.6L3469.7,1209.9L3473.4,1209.9L3476.9,1207.5L3483.6,1200.6L3490.3,1051.7L3494.6,1170.1L3498.1,1179.5L3501.0,1185.2L3504.8,1186.5L3508.8,1194.8L3512.0,1192.3L3516.3,1192.8L3519.8,1196.1L3523.6,1196.6L3531.4,1202.2L3535.2,1201.7L3538.7,1202.8L3542.2,1201.2L3545.9,1203.0L3550.3,1205.6L3553.2,1205.8L3556.1,1220.6L3560.4,1209.1L3563.9,1191.0L3570.6,1181.8L3574.9,1177.8L3579.3,1186.4L3582.1,1194.8L3585.9,1202.3" stroke="#37872D" stroke-width="2" fill="none" stroke-linejoin="round"/><path d="M115.1,1216.6L118.6,1219.1L122.0,1214.2L125.8,1216.4L130.1,1213.4L133.0,1216.4L136.8,1217.6L140.9,1223.5L144.6,1215.4L148.1,1222.5L151.9,1217.8L155.7,1221.0L158.6,1212.7L162.6,1121.5L166.4,1203.1L170.2,1202.0L173.6,1212.2L176.5,1206.7L180.9,1211.6L184.6,1216.1L188.1,1214.4L191.6,1219.3L195.7,1216.8L198.6,1220.0L202.6,1219.3L207.8,1224.1L213.6,1224.5L216.5,1219.3L220.0,1223.8L224.4,1224.4L227.3,1225.9L231.6,1225.3L237.4,1222.4L246.1,1224.8L250.4,1221.4L254.8,1221.0L262.0,1222.9L267.8,1216.8L272.2,1212.9L278.0,1215.3L281.5,1210.3L286.1,1198.6L288.7,1098.7L292.5,1192.6L296.8,1190.9L300.6,1195.1L303.5,1198.9L307.0,1194.7L310.4,1213.5L317.7,1212.4L321.5,1212.2L325.8,1207.7L330.2,1209.5L336.0,1215.3L341.8,1210.4L347.6,1212.9L351.0,1213.2L354.2,1213.0L357.7,1215.3L361.5,1201.0L365.8,1192.0L368.4,1178.3L372.2,1187.5L376.5,1197.4L380.0,1207.2L383.2,1208.5L387.3,1207.1L390.2,1212.9L393.9,1213.8L397.4,1212.2L401.2,1208.5L405.5,1209.7L408.4,1210.4L412.2,1209.8L415.7,1212.9L418.6,1210.1L422.9,1209.3L430.2,1210.3L433.9,1207.4L437.4,1210.1L440.9,1210.3L445.2,1206.8L447.8,1156.7L451.9,1201.4L455.4,1201.9L459.1,1202.4L462.6,1204.0L467.0,1207.4L470.2,1204.0L473.7,1201.6L478.0,1205.8L481.8,1207.6L488.1,1205.0L492.5,1206.4L498.3,1209.9L502.6,1208.7L507.0,1209.8L509.9,1206.3L513.4,1211.9L517.1,1206.6L520.9,1208.0L523.8,1201.8L527.9,1205.3L531.6,1203.1L535.4,1199.8L539.7,1200.3L543.2,1204.3L547.6,1201.8L551.9,1200.9L556.3,1197.2L562.1,1202.5L567.9,1202.6L572.2,1203.7L576.5,1203.0L580.0,1202.3L582.9,1203.1L586.7,1207.3L591.0,1154.8L593.9,1204.8L597.7,1211.2L601.8,1201.8L605.5,1212.1L609.9,1195.0L612.8,1199.8L615.7,1201.3L620.0,1219.6L624.4,1213.6L630.2,1222.0L634.5,1209.2L638.9,1197.6L641.8,1212.6L645.5,1229.6L651.9,1216.7L655.7,1207.1L660.0,1204.4L666.4,1220.6L670.8,1221.1L675.1,1230.2L678.0,1230.9L682.4,1229.7L686.7,1208.8L689.6,1227.9L694.0,1223.1L700.0,1223.3L703.2,1224.2L708.1,1220.8L710.4,1226.0L714.7,1208.8L719.1,1200.7L722.0,1204.1L726.3,1197.8L729.8,1197.5L733.6,1146.2L736.5,1200.0L740.8,1201.0L744.6,1204.2L748.1,1206.2L751.9,1216.0L755.3,1208.1L759.7,1219.0L762.6,1218.1L766.1,1216.1L769.8,1220.0L774.2,1219.1L778.5,1225.5L782.9,1226.1L788.7,1225.7L794.5,1226.5L795.9,1225.5L801.7,1226.6L806.1,1228.6L809.5,1225.9L814.2,1229.3L821.1,1207.8L824.9,1214.8L832.1,1212.8L836.5,1209.6L843.7,1207.3L851.0,1204.9L856.8,1205.9L864.0,1207.3L872.7,1209.8L875.6,1172.5L879.4,1199.3L883.7,1196.7L890.7,1227.3L894.5,1218.4L898.2,1217.3L904.6,1217.0L909.0,1217.1L912.7,1217.3L916.2,1216.7L920.0,1218.5L923.5,1222.3L927.8,1222.4L931.6,1211.4L934.5,1224.7L938.5,1216.8L942.9,1226.6L949.0,1212.1L953.0,1214.1L956.8,1217.7L959.7,1226.3L964.0,1212.2L969.3,1224.9L971.9,1209.6L975.6,1205.6L979.1,1207.7L982.3,1220.8L985.8,1217.9L992.4,1215.3L996.5,1213.1L1000.9,1218.9L1004.6,1207.6L1008.1,1203.9L1011.9,1209.1L1015.3,1199.8L1019.1,1197.4L1022.6,1208.8L1029.3,1212.4L1033.6,1208.7L1037.1,1210.7L1040.9,1207.0L1044.3,1210.9L1048.7,1210.3L1051.9,1206.0L1054.8,1194.6L1059.4,1162.3L1062.6,1193.3L1066.4,1192.9L1070.4,1193.1L1077.7,1193.8L1084.9,1195.1L1091.6,1196.1L1095.9,1200.6L1099.7,1198.4L1106.7,1195.7L1110.4,1202.0L1114.2,1199.7L1118.5,1200.2L1122.0,1199.1L1124.9,1212.4L1129.3,1205.4L1133.0,1194.6L1136.5,1192.9L1140.0,1191.2L1143.8,1189.1L1147.2,1192.4L1151.0,1191.9L1154.5,1194.8L1157.7,1197.2L1162.0,1138.6L1166.1,1171.1L1169.0,1180.4L1172.7,1171.0L1177.1,1172.9L1182.9,1189.0L1187.2,1195.8L1191.0,1197.3L1198.8,1189.2L1202.6,1195.0L1205.5,1196.0L1209.8,1194.4L1214.2,1199.5L1224.3,1205.4L1227.2,1209.7L1231.3,1208.9L1239.4,1209.0L1242.9,1208.2L1246.7,1209.3L1251.0,1213.7L1254.5,1207.4L1260.6,1207.5L1264.9,1204.4L1271.9,1194.0L1275.1,1195.7L1279.1,1195.4L1286.1,1191.1L1287.7,1184.7L1293.5,1181.4L1297.9,1182.8L1300.8,1184.7L1304.6,1191.3L1308.6,1206.9L1312.4,1202.9L1315.9,1200.4L1319.6,1202.7L1326.9,1202.0L1330.7,1199.7L1334.7,1197.2L1337.9,1204.4L1342.2,1201.0L1345.7,1208.5L1348.6,1200.8L1352.1,1170.0L1356.4,1148.4L1359.6,1188.1L1363.1,1184.2L1367.5,1186.6L1371.8,1193.6L1376.2,1192.1L1380.5,1193.6L1387.8,1196.7L1395.0,1192.0L1397.9,1197.0L1402.3,1197.5L1406.6,1196.3L1410.9,1199.9L1415.3,1202.6L1418.2,1203.4L1422.0,1214.9L1425.4,1204.7L1428.9,1184.7L1432.7,1182.6L1436.5,1175.2L1440.5,1185.3L1444.3,1180.4L1448.0,1157.9L1451.0,1199.3L1455.0,1196.6L1458.8,1204.1L1462.5,1206.1L1466.0,1217.2L1469.8,1210.7L1473.8,1183.1L1477.6,1202.6L1481.1,1218.4L1484.9,1200.3L1487.2,1196.8L1491.5,1184.7L1495.6,1204.0L1498.8,1200.1L1502.8,1212.8L1507.2,1221.8L1509.5,1206.7L1513.8,1213.7L1518.2,1223.9L1521.7,1199.2L1525.4,1216.6L1531.2,1216.3L1539.4,1215.1L1543.7,1201.3L1547.2,1214.1L1551.0,1210.2L1557.3,1192.4L1561.7,1204.3L1565.2,1196.1L1568.9,1193.2L1571.8,1189.4L1576.2,1187.9L1579.9,1192.2L1582.8,1180.1L1586.9,1189.0L1590.7,1189.9L1594.1,1199.2L1597.9,1204.3L1602.3,1198.1L1605.7,1199.7L1608.9,1205.1L1616.2,1200.6L1621.1,1196.7L1626.9,1204.8L1630.4,1198.2L1645.7,1199.7L1649.2,1203.4L1653.0,1200.3L1656.5,1204.3L1660.8,1211.1L1663.7,1200.0L1671.0,1195.3L1674.7,1200.5L1679.1,1199.2L1683.4,1198.9L1689.2,1204.2L1693.6,1198.3L1697.0,1203.7L1700.2,1201.0L1704.6,1201.2L1708.6,1204.1L1711.0,1202.2L1715.3,1203.1L1719.1,1202.6L1722.6,1204.8L1726.9,1202.0L1730.4,1201.9L1733.3,1123.3L1737.0,1151.1L1744.3,1167.2L1750.7,1176.1L1755.0,1180.3L1761.7,1185.7L1766.0,1193.3L1777.1,1197.3L1780.5,1200.0L1787.8,1199.7L1793.6,1196.9L1800.8,1203.7L1809.5,1218.5L1813.0,1210.7L1816.8,1201.9L1823.4,1212.8L1827.5,1207.2L1830.7,1204.5L1835.0,1216.1L1839.4,1205.2L1845.7,1198.8L1849.5,1197.0L1853.9,1195.0L1856.8,1193.8L1860.2,1198.1L1863.1,1180.3L1867.5,1184.0L1872.1,1186.1L1873.8,1192.3L1878.1,1191.3L1881.0,1218.4L1885.4,1205.4L1888.9,1200.5L1891.8,1205.9L1895.5,1206.7L1899.9,1202.9L1902.8,1209.8L1939.0,1205.9L1943.4,1206.5L1946.3,1205.0L1950.6,1208.3L1954.4,1212.1L1957.3,1212.7L1960.8,1199.3L1964.2,1179.1L1968.0,1190.3L1971.5,1191.6L1976.1,1201.2L1981.0,1204.5L1986.3,1206.5L1990.6,1211.5L1994.1,1210.7L1997.6,1210.6L2001.3,1210.1L2004.2,1207.6L2008.6,1210.0L2011.5,1206.6L2015.2,1210.0L2019.3,1121.6L2022.2,1152.9L2026.0,1164.5L2029.7,1170.1L2033.2,1178.7L2037.0,1187.9L2040.5,1188.5L2043.4,1195.8L2048.3,1195.5L2053.5,1204.3L2058.4,1204.5L2062.2,1205.0L2065.1,1211.4L2070.0,1213.1L2072.9,1210.5L2076.7,1211.1L2080.2,1213.5L2084.0,1211.9L2088.3,1214.9L2092.1,1215.5L2095.0,1210.1L2099.0,1215.8L2101.9,1213.6L2105.7,1210.3L2110.6,1212.6L2116.4,1211.1L2121.1,1204.8L2124.0,1197.7L2127.4,1179.0L2131.2,1193.4L2134.1,1193.1L2138.2,1193.5L2141.9,1192.2L2145.4,1193.6L2149.8,1190.9L2153.5,1197.3L2156.4,1198.2L2160.2,1199.2L2163.1,1174.2L2167.1,1193.7L2170.3,1185.8L2173.8,1188.9L2177.6,1197.9L2181.1,1202.8L2184.8,1198.9L2189.2,1202.7L2192.1,1211.0L2196.1,1213.0L2199.9,1192.2L2202.8,1187.9L2207.1,1188.7L2210.9,1195.0L2213.8,1210.3L2217.3,1212.0L2221.6,1212.3L2224.5,1214.1L2228.9,1212.5L2233.2,1212.8L2236.7,1213.4L2240.5,1214.1L2244.3,1218.0L2247.1,1218.8L2251.2,1217.3L2261.6,1212.3L2264.5,1215.3L2268.9,1215.0L2272.4,1219.6L2275.3,1218.5L2279.6,1215.6L2282.5,1217.4L2286.9,1217.8L2291.2,1214.9L2294.1,1214.7L2297.6,1219.5L2301.4,1214.4L2304.3,1126.5L2308.0,1194.3L2312.9,1201.1L2316.4,1198.1L2321.1,1206.9L2326.0,1209.6L2329.5,1208.4L2333.8,1216.0L2337.6,1213.6L2341.4,1217.2L2344.3,1218.5L2349.2,1215.8L2352.1,1219.8L2355.9,1220.8L2359.3,1222.1L2363.1,1220.3L2366.6,1219.7L2370.1,1218.5L2373.8,1221.5L2377.3,1223.5L2381.7,1217.7L2384.8,1222.2L2388.3,1218.1L2392.1,1217.1L2395.6,1217.0L2399.0,1222.6L2403.7,1219.3L2408.0,1217.2L2413.5,1212.3L2417.3,1208.7L2421.1,1194.4L2423.7,1182.7L2427.4,1182.5L2430.9,1183.2L2434.7,1186.0L2439.0,1185.0L2444.8,1194.0L2449.2,1184.9L2453.5,1213.9L2458.2,1212.5L2459.8,1204.9L2465.6,1211.6L2470.0,1208.7L2477.2,1210.1L2481.6,1210.8L2485.4,1213.0L2488.8,1222.2L2493.2,1226.5L2496.1,1207.0L2499.8,1205.2L2503.3,1205.9L2507.1,1198.1L2510.6,1201.4L2514.0,1208.1L2517.8,1215.6L2521.3,1212.3L2525.1,1220.7L2528.8,1230.0L2532.9,1224.6L2536.1,1205.3L2539.6,1224.2L2543.3,1223.6L2546.8,1209.1L2551.2,1216.3L2554.0,1214.3L2557.8,1215.2L2561.3,1229.9L2564.8,1221.0L2568.5,1230.6L2572.9,1212.2L2576.4,1226.1L2581.6,1203.3L2586.8,1228.2L2590.3,1196.8L2594.1,1194.8L2597.5,1223.1L2601.3,1209.6L2604.8,1203.2L2609.1,1192.2L2612.9,1207.1L2615.8,1212.6L2620.1,1218.8L2623.6,1219.2L2626.5,1223.1L2630.0,1215.6L2633.8,1221.1L2639.6,1218.2L2643.9,1224.0L2647.7,1214.3L2652.0,1216.5L2654.6,1209.1L2659.0,1183.9L2662.8,1205.3L2666.2,1199.7L2670.0,1196.9L2673.5,1201.4L2677.3,1203.0L2681.6,1203.2L2684.5,1200.8L2688.3,1203.0L2691.7,1203.8L2696.1,1204.8L2700.4,1209.1L2704.8,1207.3L2709.1,1207.7L2713.5,1205.4L2716.4,1196.1L2720.7,1189.9L2724.5,1174.9L2727.4,1172.5L2731.5,1179.7L2735.2,1195.3L2738.1,1206.3L2742.5,1195.5L2746.8,1206.0L2750.6,1207.7L2754.1,1214.0L2757.0,1212.0L2760.7,1212.3L2764.2,1215.8L2767.7,1221.9L2770.9,1216.8L2774.3,1221.6L2778.7,1218.7L2782.2,1227.7L2785.4,1217.9L2788.8,1224.8L2793.2,1230.2L2796.7,1227.2L2800.4,1230.1L2804.2,1228.5L2807.7,1229.6L2810.6,1220.9L2814.1,1230.9L2817.8,1230.4L2821.6,1221.1L2825.1,1230.7L2828.8,1223.0L2832.9,1218.8L2836.1,1212.5L2840.4,1217.1L2846.8,1209.6L2850.6,1191.0L2854.1,1191.7L2857.5,1189.0L2861.3,1188.9L2864.8,1177.1L2868.6,1149.1L2872.3,1180.4L2875.2,1145.5L2879.6,1186.3L2883.1,1186.5L2887.4,1189.9L2891.8,1199.1L2897.6,1205.6L2904.8,1201.2L2909.1,1210.0L2913.5,1211.3L2917.8,1214.8L2922.8,1217.2L2926.5,1214.3L2930.9,1215.6L2936.7,1216.3L2941.0,1215.7L2948.3,1216.1L2954.9,1198.8L2959.3,1201.7L2962.8,1209.4L2966.5,1208.7L2970.0,1210.2L2973.5,1206.9L2977.3,1209.3L2981.6,1206.5L2986.0,1206.9L2991.8,1208.1L2998.4,1205.0L3002.5,1204.2L3006.2,1204.6L3010.6,1210.9L3013.5,1202.6L3016.4,1074.6L3020.7,1194.7L3024.5,1209.6L3030.9,1200.8L3035.2,1200.2L3038.1,1201.3L3044.2,1209.4L3045.9,1202.2L3049.4,1209.2L3054.6,1205.1L3060.4,1208.8L3067.1,1211.6L3070.5,1214.8L3074.9,1211.1L3079.2,1212.9L3082.1,1212.2L3087.9,1214.5L3093.7,1212.4L3100.4,1211.6L3103.9,1209.0L3106.8,1213.3L3111.1,1215.1L3115.5,1207.8L3118.4,1208.8L3122.1,1210.2L3125.6,1208.4L3128.5,1202.7L3132.9,1190.8L3136.6,1201.4L3140.1,1197.6L3143.6,1202.8L3146.5,1200.8L3150.2,1200.4L3153.7,1212.6L3157.5,1180.7L3161.3,1210.1L3165.3,1212.7L3176.3,1206.5L3186.5,1201.4L3193.7,1168.5L3197.2,1194.8L3201.5,1191.3L3205.3,1187.3L3208.2,1185.0L3212.6,1189.3L3218.4,1189.3L3222.7,1197.0L3227.1,1196.2L3230.5,1196.6L3234.3,1198.7L3238.7,1199.2L3243.0,1201.8L3247.3,1196.3L3252.3,1203.2L3256.0,1200.3L3258.9,1218.0L3263.3,1213.9L3266.8,1196.3L3269.7,1191.7L3273.4,1186.3L3277.8,1187.1L3280.7,1193.9L3283.6,1195.9L3287.9,1204.6L3292.3,1207.0L3295.8,1203.7L3298.7,1212.9L3302.4,1180.7L3306.8,1191.4L3310.5,1193.2L3314.0,1194.6L3318.4,1202.6L3321.8,1204.7L3327.1,1207.3L3331.4,1215.9L3335.8,1213.1L3343.0,1220.5L3346.5,1214.9L3350.3,1229.8L3354.6,1220.5L3357.5,1222.0L3360.4,1223.0L3364.2,1226.2L3367.6,1230.4L3371.4,1230.6L3374.9,1230.2L3382.1,1230.3L3385.9,1230.9L3390.3,1229.6L3393.7,1229.6L3397.2,1222.2L3401.0,1225.5L3404.5,1216.5L3407.4,1213.3L3411.1,1202.6L3414.6,1208.6L3418.4,1200.3L3421.9,1196.5L3425.6,1187.6L3428.5,1186.9L3432.9,1182.5L3436.6,1191.5L3439.5,1136.4L3443.9,1150.3L3447.4,1172.1L3450.8,1203.3L3458.1,1204.0L3461.8,1204.0L3465.3,1204.0L3469.7,1208.0L3473.4,1214.1L3476.9,1208.3L3483.6,1209.1L3490.3,1103.6L3494.6,1154.7L3498.1,1159.2L3501.0,1167.2L3504.8,1172.4L3508.8,1180.0L3512.0,1188.7L3516.3,1191.3L3519.8,1194.8L3523.6,1197.7L3531.4,1197.6L3535.2,1202.4L3538.7,1207.8L3542.2,1205.8L3545.9,1209.9L3550.3,1206.1L3553.2,1196.3L3556.1,1208.8L3560.4,1194.3L3563.9,1184.0L3570.6,1185.3L3574.9,1199.7L3579.3,1200.2L3582.1,1204.9L3585.9,1212.3" stroke="#FADE2A" stroke-width="2" fill="none" stroke-linejoin="round"/><path d="M115.1,1218.1L118.6,1213.3L122.0,1217.9L125.8,1212.9L130.1,1208.7L133.0,1208.2L136.8,1213.2L140.9,1212.4L144.6,1222.2L148.1,1216.0L151.9,1224.1L155.7,1218.6L158.6,1218.5L162.6,1100.5L166.4,1197.2L170.2,1189.7L173.6,1185.5L176.5,1195.7L180.9,1197.9L184.6,1202.6L188.1,1205.3L191.6,1208.2L195.7,1212.9L198.6,1215.0L202.6,1210.7L207.8,1220.5L213.6,1219.3L216.5,1225.7L220.0,1210.7L224.4,1213.6L227.3,1220.0L231.6,1211.0L237.4,1216.7L246.1,1214.5L250.4,1221.4L254.8,1223.9L262.0,1214.1L267.8,1216.6L272.2,1215.8L278.0,1214.3L281.5,1212.3L286.1,1199.3L288.7,1151.7L292.5,1189.4L296.8,1182.2L300.6,1179.3L303.5,1187.8L307.0,1175.2L310.4,1210.0L317.7,1208.6L321.5,1201.5L325.8,1207.3L330.2,1204.8L336.0,1212.7L341.8,1208.8L347.6,1212.5L351.0,1213.5L354.2,1217.2L357.7,1228.2L361.5,1212.5L365.8,1203.8L368.4,1196.7L372.2,1204.2L376.5,1213.2L380.0,1209.6L383.2,1218.0L387.3,1217.6L390.2,1226.9L393.9,1228.2L397.4,1214.5L401.2,1213.9L405.5,1224.7L408.4,1219.7L412.2,1217.6L415.7,1219.3L418.6,1214.7L422.9,1217.0L430.2,1222.2L433.9,1218.9L437.4,1214.6L440.9,1222.4L445.2,1213.6L447.8,1098.7L451.9,1199.2L455.4,1201.1L459.1,1205.4L462.6,1205.4L467.0,1213.9L470.2,1225.7L473.7,1221.0L478.0,1213.4L481.8,1215.8L488.1,1225.4L492.5,1219.9L498.3,1221.7L502.6,1222.8L507.0,1217.3L509.9,1210.8L513.4,1215.6L517.1,1219.2L520.9,1224.9L523.8,1197.1L527.9,1215.9L531.6,1208.0L535.4,1201.0L539.7,1203.7L543.2,1201.9L547.6,1217.8L551.9,1211.2L556.3,1210.1L562.1,1212.6L567.9,1213.3L572.2,1201.6L576.5,1213.4L580.0,1203.4L582.9,1200.8L586.7,1202.2L591.0,1023.0L593.9,1191.5L597.7,1202.8L601.8,1208.4L605.5,1212.3L609.9,1227.3L612.8,1223.9L615.7,1196.0L620.0,1226.7L624.4,1202.1L630.2,1176.3L634.5,1185.3L638.9,1231.0L641.8,1214.6L645.5,1215.9L651.9,1224.8L655.7,1197.9L660.0,1214.8L666.4,1189.0L670.8,1230.9L675.1,1234.9L678.0,1221.7L682.4,1228.7L686.7,1200.2L689.6,1226.9L694.0,1222.8L700.0,1206.7L703.2,1234.0L708.1,1227.4L710.4,1220.8L714.7,1212.9L719.1,1209.0L722.0,1198.5L726.3,1170.1L729.8,1202.3L733.6,1137.8L736.5,1196.0L740.8,1196.5L744.6,1196.5L748.1,1202.2L751.9,1206.3L755.3,1214.1L759.7,1206.2L762.6,1217.5L766.1,1213.6L769.8,1217.3L774.2,1230.5L778.5,1220.2L782.9,1230.2L788.7,1226.2L794.5,1225.3L795.9,1219.1L801.7,1220.7L806.1,1218.0L809.5,1222.3L814.2,1229.9L821.1,1196.8L824.9,1207.4L832.1,1200.2L836.5,1203.5L843.7,1207.5L851.0,1209.9L856.8,1204.9L864.0,1192.5L872.7,1194.3L875.6,1053.6L879.4,1176.5L883.7,1173.9L890.7,1229.1L894.5,1224.7L898.2,1207.4L904.6,1207.3L909.0,1200.9L912.7,1198.1L916.2,1215.8L920.0,1230.9L923.5,1231.1L927.8,1209.5L931.6,1230.5L934.5,1232.2L938.5,1229.1L942.9,1232.5L949.0,1230.9L953.0,1204.3L956.8,1225.2L959.7,1230.8L964.0,1227.5L969.3,1233.8L971.9,1217.3L975.6,1206.5L979.1,1197.6L982.3,1214.2L985.8,1215.2L992.4,1216.5L996.5,1223.8L1000.9,1218.5L1004.6,1225.2L1008.1,1202.8L1011.9,1210.3L1015.3,1196.3L1019.1,1190.5L1022.6,1217.2L1029.3,1204.7L1033.6,1211.0L1037.1,1212.2L1040.9,1219.3L1044.3,1205.6L1048.7,1224.9L1051.9,1205.8L1054.8,1188.1L1059.4,1162.6L1062.6,1196.3L1066.4,1185.8L1070.4,1188.5L1077.7,1181.7L1084.9,1204.2L1091.6,1192.0L1095.9,1205.7L1099.7,1194.3L1106.7,1197.6L1110.4,1193.5L1114.2,1205.9L1118.5,1205.6L1122.0,1215.7L1124.9,1225.0L1129.3,1212.6L1133.0,1198.2L1136.5,1187.6L1140.0,1190.7L1143.8,1208.1L1147.2,1197.3L1151.0,1206.6L1154.5,1191.3L1157.7,1224.1L1162.0,1150.4L1166.1,1214.1L1169.0,1178.9L1172.7,1201.8L1177.1,1188.7L1182.9,1191.8L1187.2,1213.1L1191.0,1231.1L1198.8,1188.5L1202.6,1231.8L1205.5,1202.5L1209.8,1210.4L1214.2,1202.1L1224.3,1206.1L1227.2,1211.1L1231.3,1208.8L1239.4,1216.6L1242.9,1229.9L1246.7,1214.0L1251.0,1212.2L1254.5,1213.1L1260.6,1207.1L1264.9,1200.6L1271.9,1197.0L1275.1,1199.5L1279.1,1190.5L1286.1,1189.8L1287.7,1188.0L1293.5,1180.3L1297.9,1186.3L1300.8,1189.2L1304.6,1193.3L1308.6,1203.4L1312.4,1210.1L1315.9,1203.6L1319.6,1202.1L1326.9,1209.2L1330.7,1208.4L1334.7,1208.1L1337.9,1206.2L1342.2,1207.7L1345.7,1213.5L1348.6,1200.7L1352.1,1177.3L1356.4,1170.7L1359.6,1196.0L1363.1,1190.3L1367.5,1185.3L1371.8,1192.6L1376.2,1199.9L1380.5,1204.5L1387.8,1211.1L1395.0,1210.7L1397.9,1200.3L1402.3,1202.6L1406.6,1201.0L1410.9,1196.0L1415.3,1203.4L1418.2,1208.2L1422.0,1210.3L1425.4,1198.9L1428.9,1187.1L1432.7,1179.9L1436.5,1190.1L1440.5,1230.0L1444.3,1197.6L1448.0,1159.4L1451.0,1190.8L1455.0,1155.8L1458.8,1195.6L1462.5,1161.4L1466.0,1197.1L1469.8,1190.7L1473.8,1181.9L1477.6,1228.7L1481.1,1173.0L1484.9,1222.9L1487.2,1212.6L1491.5,1223.2L1495.6,1221.5L1498.8,1230.2L1502.8,1221.9L1507.2,1187.9L1509.5,1232.4L1513.8,1195.1L1518.2,1202.1L1521.7,1205.9L1525.4,1210.9L1531.2,1207.2L1539.4,1207.1L1543.7,1218.7L1547.2,1222.4L1551.0,1200.9L1557.3,1186.9L1561.7,1188.7L1565.2,1198.8L1568.9,1190.0L1571.8,1187.1L1576.2,1185.3L1579.9,1177.0L1582.8,1054.6L1586.9,1165.2L1590.7,1181.4L1594.1,1201.1L1597.9,1205.2L1602.3,1196.0L1605.7,1211.4L1608.9,1201.7L1616.2,1208.1L1621.1,1194.1L1626.9,1197.4L1630.4,1192.0L1645.7,1187.8L1649.2,1189.8L1653.0,1194.8L1656.5,1196.8L1660.8,1202.0L1663.7,1202.5L1671.0,1184.0L1674.7,1190.0L1679.1,1186.7L1683.4,1197.0L1689.2,1195.0L1693.6,1202.4L1697.0,1196.0L1700.2,1181.6L1704.6,1200.8L1708.6,1198.1L1711.0,1194.8L1715.3,1206.3L1719.1,1212.2L1722.6,1209.5L1726.9,1200.7L1730.4,1194.7L1733.3,1119.1L1737.0,1176.0L1744.3,1176.2L1750.7,1190.3L1755.0,1184.9L1761.7,1189.9L1766.0,1200.5L1777.1,1201.4L1780.5,1212.3L1787.8,1203.9L1793.6,1224.2L1800.8,1203.7L1809.5,1224.0L1813.0,1211.1L1816.8,1196.6L1823.4,1142.5L1827.5,1161.5L1830.7,1173.5L1835.0,1215.6L1839.4,1204.2L1845.7,1167.3L1849.5,1185.0L1853.9,1183.9L1856.8,1204.3L1860.2,1188.6L1863.1,1191.2L1867.5,1172.4L1872.1,1179.3L1873.8,1196.8L1878.1,1202.3L1881.0,1200.2L1885.4,1211.1L1888.9,1200.9L1891.8,1201.9L1895.5,1189.8L1899.9,1190.4L1902.8,1194.4L1939.0,1197.4L1943.4,1203.6L1946.3,1210.6L1950.6,1204.7L1954.4,1210.7L1957.3,1228.4L1960.8,1197.8L1964.2,1199.5L1968.0,1195.4L1971.5,1191.8L1976.1,1194.2L1981.0,1205.9L1986.3,1201.9L1990.6,1202.8L1994.1,1207.0L1997.6,1207.7L2001.3,1213.2L2004.2,1209.1L2008.6,1214.0L2011.5,1213.1L2015.2,1212.8L2019.3,1065.9L2022.2,1201.9L2026.0,1206.0L2029.7,1206.8L2033.2,1195.6L2037.0,1211.8L2040.5,1208.8L2043.4,1220.4L2048.3,1215.4L2053.5,1223.6L2058.4,1221.9L2062.2,1218.1L2065.1,1213.0L2070.0,1221.0L2072.9,1217.9L2076.7,1220.4L2080.2,1221.9L2084.0,1219.7L2088.3,1215.5L2092.1,1218.7L2095.0,1220.1L2099.0,1222.7L2101.9,1214.9L2105.7,1215.9L2110.6,1207.0L2116.4,1197.4L2121.1,1192.3L2124.0,1187.0L2127.4,1174.3L2131.2,1191.9L2134.1,1196.1L2138.2,1202.6L2141.9,1203.2L2145.4,1199.0L2149.8,1200.2L2153.5,1205.9L2156.4,1202.7L2160.2,1209.3L2163.1,1194.1L2167.1,1211.9L2170.3,1218.8L2173.8,1210.6L2177.6,1214.3L2181.1,1215.9L2184.8,1218.1L2189.2,1209.9L2192.1,1221.7L2196.1,1221.5L2199.9,1208.0L2202.8,1204.6L2207.1,1189.5L2210.9,1184.9L2213.8,1184.3L2217.3,1191.1L2221.6,1204.1L2224.5,1213.4L2228.9,1219.2L2233.2,1219.2L2236.7,1214.6L2240.5,1227.2L2244.3,1221.9L2247.1,1225.4L2251.2,1224.4L2261.6,1222.4L2264.5,1218.4L2268.9,1218.7L2272.4,1230.3L2275.3,1230.0L2279.6,1230.3L2282.5,1221.6L2286.9,1219.0L2291.2,1227.3L2294.1,1227.9L2297.6,1222.2L2301.4,1212.4L2304.3,1131.1L2308.0,1196.3L2312.9,1194.5L2316.4,1201.8L2321.1,1194.1L2326.0,1206.8L2329.5,1207.2L2333.8,1213.2L2337.6,1202.0L2341.4,1219.2L2344.3,1217.1L2349.2,1220.0L2352.1,1219.0L2355.9,1226.6L2359.3,1221.8L2363.1,1214.1L2366.6,1214.2L2370.1,1212.1L2373.8,1206.7L2377.3,1210.4L2381.7,1207.6L2384.8,1213.6L2388.3,1217.1L2392.1,1206.3L2395.6,1220.5L2399.0,1219.7L2403.7,1218.2L2408.0,1201.2L2413.5,1212.3L2417.3,1199.5L2421.1,1198.9L2423.7,1114.2L2427.4,1172.7L2430.9,1177.1L2434.7,1176.2L2439.0,1177.9L2444.8,1186.6L2449.2,1176.7L2453.5,1202.6L2458.2,1199.4L2459.8,1195.5L2465.6,1194.1L2470.0,1203.7L2477.2,1198.8L2481.6,1197.8L2485.4,1205.7L2488.8,1212.9L2493.2,1212.7L2496.1,1196.8L2499.8,1186.7L2503.3,1183.7L2507.1,1213.0L2510.6,1196.0L2514.0,1212.5L2517.8,1188.3L2521.3,1228.1L2525.1,1174.4L2528.8,1222.5L2532.9,1207.1L2536.1,1187.6L2539.6,1222.5L2543.3,1212.3L2546.8,1231.7L2551.2,1231.4L2554.0,1230.2L2557.8,1216.5L2561.3,1224.5L2564.8,1200.2L2568.5,1211.4L2572.9,1233.4L2576.4,1206.3L2581.6,1194.6L2586.8,1201.8L2590.3,1163.5L2594.1,1215.3L2597.5,1214.0L2601.3,1188.0L2604.8,1198.3L2609.1,1189.0L2612.9,1185.3L2615.8,1193.7L2620.1,1216.8L2623.6,1231.2L2626.5,1230.2L2630.0,1206.5L2633.8,1221.2L2639.6,1196.9L2643.9,1206.3L2647.7,1218.0L2652.0,1207.6L2654.6,1197.3L2659.0,1174.3L2662.8,1193.9L2666.2,1195.6L2670.0,1190.9L2673.5,1189.2L2677.3,1192.7L2681.6,1192.3L2684.5,1189.0L2688.3,1200.9L2691.7,1198.3L2696.1,1199.8L2700.4,1206.7L2704.8,1202.1L2709.1,1207.9L2713.5,1213.6L2716.4,1220.8L2720.7,1214.3L2724.5,1206.2L2727.4,1189.1L2731.5,1180.7L2735.2,1189.7L2738.1,1195.8L2742.5,1195.9L2746.8,1201.5L2750.6,1201.7L2754.1,1214.9L2757.0,1217.0L2760.7,1220.1L2764.2,1219.1L2767.7,1230.2L2770.9,1215.6L2774.3,1223.6L2778.7,1230.1L2782.2,1225.4L2785.4,1231.4L2788.8,1230.2L2793.2,1223.2L2796.7,1214.8L2800.4,1213.5L2804.2,1208.5L2807.7,1203.1L2810.6,1202.5L2814.1,1227.6L2817.8,1212.0L2821.6,1202.9L2825.1,1231.7L2828.8,1234.9L2832.9,1227.0L2836.1,1177.7L2840.4,1203.9L2846.8,1205.5L2850.6,1208.1L2854.1,1195.4L2857.5,1184.6L2861.3,1172.5L2864.8,1165.7L2868.6,1027.5L2872.3,1166.2L2875.2,1128.0L2879.6,1197.0L2883.1,1214.4L2887.4,1220.4L2891.8,1220.0L2897.6,1223.0L2904.8,1203.6L2909.1,1224.4L2913.5,1218.4L2917.8,1223.5L2922.8,1218.5L2926.5,1218.9L2930.9,1218.2L2936.7,1207.6L2941.0,1215.7L2948.3,1214.2L2954.9,1194.9L2959.3,1198.3L2962.8,1206.3L2966.5,1196.1L2970.0,1203.0L2973.5,1211.5L2977.3,1208.6L2981.6,1215.3L2986.0,1209.6L2991.8,1218.8L2998.4,1207.0L3002.5,1206.7L3006.2,1204.6L3010.6,1203.8L3013.5,1194.0L3016.4,1006.6L3020.7,1173.6L3024.5,1211.8L3030.9,1206.8L3035.2,1216.9L3038.1,1209.8L3044.2,1220.1L3045.9,1217.1L3049.4,1219.1L3054.6,1218.8L3060.4,1218.5L3067.1,1217.0L3070.5,1215.7L3074.9,1219.1L3079.2,1224.6L3082.1,1220.5L3087.9,1205.7L3093.7,1230.2L3100.4,1217.1L3103.9,1227.9L3106.8,1190.5L3111.1,1202.8L3115.5,1188.2L3118.4,1159.6L3122.1,1183.0L3125.6,1169.1L3128.5,1192.2L3132.9,1158.3L3136.6,1168.9L3140.1,1194.5L3143.6,1219.5L3146.5,1204.0L3150.2,1229.5L3153.7,1177.7L3157.5,1166.9L3161.3,1184.6L3165.3,1184.3L3176.3,1207.0L3186.5,1165.8L3193.7,1177.5L3197.2,1181.4L3201.5,1206.6L3205.3,1187.4L3208.2,1191.0L3212.6,1200.4L3218.4,1200.5L3222.7,1202.3L3227.1,1211.5L3230.5,1215.1L3234.3,1211.6L3238.7,1207.1L3243.0,1221.1L3247.3,1209.8L3252.3,1206.1L3256.0,1219.6L3258.9,1220.5L3263.3,1220.9L3266.8,1210.4L3269.7,1205.9L3273.4,1217.0L3277.8,1213.3L3280.7,1220.5L3283.6,1216.1L3287.9,1208.4L3292.3,1224.1L3295.8,1223.0L3298.7,1226.6L3302.4,1100.5L3306.8,1210.7L3310.5,1211.3L3314.0,1211.8L3318.4,1211.6L3321.8,1224.4L3327.1,1218.3L3331.4,1216.0L3335.8,1230.2L3343.0,1230.3L3346.5,1209.6L3350.3,1200.6L3354.6,1226.9L3357.5,1230.0L3360.4,1204.8L3364.2,1198.1L3367.6,1234.7L3371.4,1226.2L3374.9,1206.9L3382.1,1230.1L3385.9,1205.9L3390.3,1230.7L3393.7,1225.7L3397.2,1220.0L3401.0,1208.9L3404.5,1206.7L3407.4,1211.4L3411.1,1201.5L3414.6,1191.1L3418.4,1187.4L3421.9,1173.9L3425.6,1154.9L3428.5,1169.6L3432.9,1177.7L3436.6,1170.7L3439.5,1007.3L3443.9,1158.6L3447.4,1186.4L3450.8,1219.0L3458.1,1221.5L3461.8,1225.4L3465.3,1217.7L3469.7,1219.2L3473.4,1216.2L3476.9,1218.9L3483.6,1219.5L3490.3,1124.2L3494.6,1184.2L3498.1,1175.6L3501.0,1192.2L3504.8,1184.6L3508.8,1190.3L3512.0,1199.6L3516.3,1200.8L3519.8,1193.7L3523.6,1197.8L3531.4,1199.9L3535.2,1202.8L3538.7,1193.1L3542.2,1211.3L3545.9,1204.1L3550.3,1197.3L3553.2,1205.2L3556.1,1208.3L3560.4,1207.0L3563.9,1193.5L3570.6,1186.7L3574.9,1204.4L3579.3,1198.9L3582.1,1201.7L3585.9,1211.5" stroke="#447EBC" stroke-width="2" fill="none" stroke-linejoin="round"/><path d="M115.1,1215.3L118.6,1214.4L122.0,1213.4L125.8,1217.7L130.1,1215.0L133.0,1214.6L136.8,1211.0L140.9,1219.7L144.6,1208.4L148.1,1213.1L151.9,1214.5L155.7,1214.9L158.6,1208.2L162.6,1116.1L166.4,1196.2L170.2,1199.1L173.6,1197.4L176.5,1197.3L180.9,1210.1L184.6,1207.2L188.1,1207.1L191.6,1210.9L195.7,1204.1L198.6,1210.1L202.6,1214.6L207.8,1211.0L213.6,1214.8L216.5,1210.5L220.0,1212.9L224.4,1209.7L227.3,1214.1L231.6,1211.1L237.4,1207.2L246.1,1210.6L250.4,1211.4L254.8,1209.2L262.0,1206.4L267.8,1206.3L272.2,1203.4L278.0,1201.0L281.5,1201.9L286.1,1195.7L288.7,1116.7L292.5,1188.2L296.8,1188.0L300.6,1189.2L303.5,1194.7L307.0,1191.1L310.4,1203.0L317.7,1204.3L321.5,1201.7L325.8,1204.8L330.2,1200.1L336.0,1202.4L341.8,1201.1L347.6,1199.3L351.0,1201.2L354.2,1205.9L357.7,1206.8L361.5,1197.2L365.8,1187.1L368.4,1169.7L372.2,1196.5L376.5,1199.0L380.0,1202.3L383.2,1204.2L387.3,1202.6L390.2,1208.6L393.9,1206.7L397.4,1207.1L401.2,1205.9L405.5,1205.4L408.4,1206.6L412.2,1208.1L415.7,1210.0L418.6,1211.8L422.9,1210.9L430.2,1207.1L433.9,1206.6L437.4,1211.8L440.9,1214.2L445.2,1211.7L447.8,1114.3L451.9,1198.8L455.4,1200.4L459.1,1201.0L462.6,1205.6L467.0,1209.3L470.2,1213.2L473.7,1211.9L478.0,1211.3L481.8,1218.8L488.1,1213.7L492.5,1217.6L498.3,1216.4L502.6,1221.8L507.0,1222.5L509.9,1223.8L513.4,1221.8L517.1,1222.7L520.9,1217.5L523.8,1208.4L527.9,1211.9L531.6,1213.8L535.4,1207.0L539.7,1211.2L543.2,1208.8L547.6,1206.4L551.9,1207.7L556.3,1207.0L562.1,1210.9L567.9,1208.6L572.2,1208.5L576.5,1212.7L580.0,1209.7L582.9,1208.8L586.7,1221.0L591.0,1133.0L593.9,1170.2L597.7,1184.1L601.8,1185.1L605.5,1186.6L609.9,1197.8L612.8,1200.6L615.7,1199.1L620.0,1221.6L624.4,1214.2L630.2,1198.4L634.5,1230.7L638.9,1222.0L641.8,1210.8L645.5,1217.5L651.9,1216.8L655.7,1215.0L660.0,1222.6L666.4,1206.9L670.8,1229.9L675.1,1206.5L678.0,1222.4L682.4,1229.8L686.7,1215.5L689.6,1224.6L694.0,1209.6L700.0,1219.6L703.2,1222.4L708.1,1227.9L710.4,1206.3L714.7,1193.5L719.1,1192.2L722.0,1195.5L726.3,1199.6L729.8,1192.7L733.6,1143.4L736.5,1188.1L740.8,1192.3L744.6,1193.7L748.1,1197.2L751.9,1204.7L755.3,1204.2L759.7,1206.0L762.6,1210.4L766.1,1210.2L769.8,1210.8L774.2,1206.8L778.5,1209.7L782.9,1212.6L788.7,1213.6L794.5,1217.5L795.9,1214.5L801.7,1212.5L806.1,1215.6L809.5,1213.8L814.2,1211.8L821.1,1194.2L824.9,1206.6L832.1,1198.7L836.5,1197.5L843.7,1190.6L851.0,1196.1L856.8,1196.7L864.0,1195.1L872.7,1200.7L875.6,1143.4L879.4,1186.1L883.7,1183.8L890.7,1214.1L894.5,1207.1L898.2,1210.4L904.6,1203.9L909.0,1214.0L912.7,1193.8L916.2,1209.2L920.0,1208.4L923.5,1202.2L927.8,1219.7L931.6,1218.0L934.5,1217.7L938.5,1211.3L942.9,1202.6L949.0,1219.0L953.0,1216.5L956.8,1213.6L959.7,1207.0L964.0,1205.1L969.3,1203.0L971.9,1197.6L975.6,1202.9L979.1,1208.1L982.3,1214.5L985.8,1206.0L992.4,1207.5L996.5,1205.0L1000.9,1196.8L1004.6,1202.8L1008.1,1196.6L1011.9,1202.7L1015.3,1196.0L1019.1,1196.5L1022.6,1211.5L1029.3,1204.5L1033.6,1206.9L1037.1,1205.7L1040.9,1206.7L1044.3,1205.7L1048.7,1208.9L1051.9,1203.4L1054.8,1193.4L1059.4,1166.4L1062.6,1190.8L1066.4,1191.8L1070.4,1190.6L1077.7,1188.2L1084.9,1194.1L1091.6,1193.7L1095.9,1194.1L1099.7,1196.4L1106.7,1198.1L1110.4,1203.5L1114.2,1200.4L1118.5,1202.9L1122.0,1206.2L1124.9,1216.5L1129.3,1205.5L1133.0,1192.5L1136.5,1191.5L1140.0,1194.8L1143.8,1191.9L1147.2,1199.8L1151.0,1201.4L1154.5,1198.1L1157.7,1204.1L1162.0,1167.7L1166.1,1191.2L1169.0,1201.6L1172.7,1195.0L1177.1,1193.5L1182.9,1202.9L1187.2,1203.7L1191.0,1218.9L1198.8,1220.0L1202.6,1208.3L1205.5,1210.4L1209.8,1209.9L1214.2,1197.7L1224.3,1216.9L1227.2,1212.5L1231.3,1213.9L1239.4,1216.5L1242.9,1217.2L1246.7,1215.2L1251.0,1216.7L1254.5,1219.4L1260.6,1211.6L1264.9,1211.8L1271.9,1206.5L1275.1,1204.5L1279.1,1196.7L1286.1,1194.0L1287.7,1196.5L1293.5,1193.7L1297.9,1189.8L1300.8,1192.3L1304.6,1200.6L1308.6,1214.0L1312.4,1212.7L1315.9,1207.9L1319.6,1213.1L1326.9,1213.7L1330.7,1213.5L1334.7,1210.4L1337.9,1213.0L1342.2,1212.7L1345.7,1215.6L1348.6,1206.2L1352.1,1181.8L1356.4,1157.5L1359.6,1195.5L1363.1,1195.3L1367.5,1196.2L1371.8,1200.0L1376.2,1198.0L1380.5,1200.8L1387.8,1202.5L1395.0,1204.3L1397.9,1203.7L1402.3,1204.6L1406.6,1207.8L1410.9,1207.9L1415.3,1208.5L1418.2,1215.6L1422.0,1224.8L1425.4,1198.8L1428.9,1196.0L1432.7,1182.1L1436.5,1182.7L1440.5,1199.7L1444.3,1191.3L1448.0,1161.7L1451.0,1200.3L1455.0,1199.1L1458.8,1202.5L1462.5,1203.5L1466.0,1193.1L1469.8,1187.5L1473.8,1208.2L1477.6,1207.7L1481.1,1206.5L1484.9,1216.1L1487.2,1209.8L1491.5,1218.6L1495.6,1203.8L1498.8,1198.9L1502.8,1213.3L1507.2,1220.7L1509.5,1211.1L1513.8,1214.3L1518.2,1221.5L1521.7,1211.2L1525.4,1218.8L1531.2,1222.7L1539.4,1218.3L1543.7,1227.4L1547.2,1206.6L1551.0,1212.4L1557.3,1191.7L1561.7,1195.2L1565.2,1196.3L1568.9,1181.7L1571.8,1184.5L1576.2,1176.5L1579.9,1180.0L1582.8,1161.4L1586.9,1176.6L1590.7,1179.4L1594.1,1194.1L1597.9,1203.2L1602.3,1196.9L1605.7,1195.9L1608.9,1201.6L1616.2,1200.4L1621.1,1196.6L1626.9,1198.9L1630.4,1202.4L1645.7,1199.6L1649.2,1201.4L1653.0,1202.2L1656.5,1206.4L1660.8,1220.8L1663.7,1201.0L1671.0,1190.3L1674.7,1192.1L1679.1,1194.9L1683.4,1196.9L1689.2,1202.8L1693.6,1203.6L1697.0,1205.8L1700.2,1209.8L1704.6,1209.4L1708.6,1206.0L1711.0,1208.4L1715.3,1209.7L1719.1,1208.8L1722.6,1210.2L1726.9,1211.3L1730.4,1205.0L1733.3,1095.8L1737.0,1179.8L1744.3,1196.2L1750.7,1201.2L1755.0,1208.2L1761.7,1214.7L1766.0,1213.9L1777.1,1224.6L1780.5,1218.7L1787.8,1222.8L1793.6,1225.3L1800.8,1227.3L1809.5,1223.8L1813.0,1225.7L1816.8,1219.3L1823.4,1224.4L1827.5,1207.3L1830.7,1209.0L1835.0,1214.8L1839.4,1204.7L1845.7,1193.1L1849.5,1199.9L1853.9,1187.2L1856.8,1189.9L1860.2,1185.6L1863.1,1195.3L1867.5,1186.6L1872.1,1190.6L1873.8,1179.4L1878.1,1209.7L1881.0,1214.9L1885.4,1215.1L1888.9,1195.2L1891.8,1204.6L1895.5,1209.2L1899.9,1207.6L1902.8,1202.8L1939.0,1208.3L1943.4,1206.1L1946.3,1206.2L1950.6,1205.8L1954.4,1215.8L1957.3,1225.6L1960.8,1206.6L1964.2,1196.4L1968.0,1195.3L1971.5,1199.4L1976.1,1197.5L1981.0,1203.9L1986.3,1209.5L1990.6,1208.9L1994.1,1210.6L1997.6,1216.9L2001.3,1213.4L2004.2,1212.9L2008.6,1213.3L2011.5,1214.7L2015.2,1217.9L2019.3,1120.9L2022.2,1195.1L2026.0,1198.7L2029.7,1199.7L2033.2,1206.3L2037.0,1211.0L2040.5,1212.8L2043.4,1214.8L2048.3,1216.4L2053.5,1219.0L2058.4,1218.8L2062.2,1222.4L2065.1,1217.6L2070.0,1223.4L2072.9,1223.9L2076.7,1223.0L2080.2,1219.3L2084.0,1224.8L2088.3,1227.8L2092.1,1223.0L2095.0,1225.1L2099.0,1225.4L2101.9,1222.6L2105.7,1223.3L2110.6,1216.8L2116.4,1215.8L2121.1,1210.2L2124.0,1201.0L2127.4,1183.1L2131.2,1197.1L2134.1,1194.7L2138.2,1193.3L2141.9,1200.4L2145.4,1197.1L2149.8,1201.6L2153.5,1205.0L2156.4,1199.5L2160.2,1200.1L2163.1,1185.5L2167.1,1207.0L2170.3,1207.6L2173.8,1204.2L2177.6,1202.7L2181.1,1206.1L2184.8,1209.2L2189.2,1212.9L2192.1,1216.4L2196.1,1206.4L2199.9,1184.7L2202.8,1178.4L2207.1,1180.9L2210.9,1187.2L2213.8,1211.4L2217.3,1215.3L2221.6,1209.6L2224.5,1214.6L2228.9,1216.5L2233.2,1220.7L2236.7,1215.2L2240.5,1210.9L2244.3,1215.8L2247.1,1215.2L2251.2,1214.8L2261.6,1213.5L2264.5,1216.3L2268.9,1216.9L2272.4,1213.5L2275.3,1213.5L2279.6,1216.2L2282.5,1214.3L2286.9,1212.8L2291.2,1213.5L2294.1,1215.0L2297.6,1209.8L2301.4,1208.5L2304.3,1127.7L2308.0,1204.1L2312.9,1207.4L2316.4,1206.1L2321.1,1207.0L2326.0,1211.7L2329.5,1208.1L2333.8,1213.8L2337.6,1207.7L2341.4,1213.8L2344.3,1214.1L2349.2,1213.6L2352.1,1212.0L2355.9,1211.6L2359.3,1216.5L2363.1,1213.3L2366.6,1215.5L2370.1,1217.7L2373.8,1216.9L2377.3,1212.1L2381.7,1217.1L2384.8,1215.4L2388.3,1212.9L2392.1,1210.2L2395.6,1216.9L2399.0,1211.8L2403.7,1210.5L2408.0,1213.3L2413.5,1209.5L2417.3,1203.8L2421.1,1193.5L2423.7,1133.6L2427.4,1185.5L2430.9,1183.7L2434.7,1182.4L2439.0,1190.2L2444.8,1191.8L2449.2,1187.5L2453.5,1205.5L2458.2,1200.8L2459.8,1203.3L2465.6,1206.1L2470.0,1203.0L2477.2,1205.5L2481.6,1199.8L2485.4,1201.8L2488.8,1212.6L2493.2,1211.4L2496.1,1207.3L2499.8,1201.8L2503.3,1202.7L2507.1,1195.7L2510.6,1202.4L2514.0,1201.4L2517.8,1202.5L2521.3,1204.1L2525.1,1204.3L2528.8,1205.9L2532.9,1215.6L2536.1,1209.5L2539.6,1216.4L2543.3,1205.4L2546.8,1219.4L2551.2,1217.1L2554.0,1208.4L2557.8,1211.2L2561.3,1210.6L2564.8,1203.3L2568.5,1210.0L2572.9,1217.3L2576.4,1214.1L2581.6,1216.1L2586.8,1205.4L2590.3,1196.3L2594.1,1198.9L2597.5,1201.3L2601.3,1200.7L2604.8,1196.9L2609.1,1201.8L2612.9,1198.7L2615.8,1206.7L2620.1,1210.8L2623.6,1206.3L2626.5,1210.6L2630.0,1207.4L2633.8,1208.2L2639.6,1205.5L2643.9,1207.9L2647.7,1203.6L2652.0,1210.6L2654.6,1198.0L2659.0,1177.1L2662.8,1184.4L2666.2,1188.9L2670.0,1191.7L2673.5,1196.0L2677.3,1195.9L2681.6,1197.9L2684.5,1202.0L2688.3,1192.2L2691.7,1196.6L2696.1,1197.9L2700.4,1200.2L2704.8,1199.9L2709.1,1198.6L2713.5,1198.4L2716.4,1203.5L2720.7,1201.7L2724.5,1204.2L2727.4,1186.3L2731.5,1186.7L2735.2,1196.8L2738.1,1197.4L2742.5,1188.8L2746.8,1192.0L2750.6,1204.9L2754.1,1207.1L2757.0,1200.7L2760.7,1209.7L2764.2,1202.8L2767.7,1209.0L2770.9,1204.7L2774.3,1208.3L2778.7,1214.0L2782.2,1210.8L2785.4,1213.7L2788.8,1213.7L2793.2,1216.1L2796.7,1216.4L2800.4,1216.9L2804.2,1217.8L2807.7,1216.3L2810.6,1204.8L2814.1,1202.6L2817.8,1216.4L2821.6,1220.0L2825.1,1218.4L2828.8,1213.8L2832.9,1090.2L2836.1,1199.0L2840.4,1206.8L2846.8,1199.9L2850.6,1193.3L2854.1,1177.9L2857.5,1174.4L2861.3,1170.7L2864.8,1159.8L2868.6,1147.5L2872.3,1137.4L2875.2,1164.3L2879.6,1164.8L2883.1,1175.8L2887.4,1183.9L2891.8,1176.4L2897.6,1195.2L2904.8,1197.1L2909.1,1205.8L2913.5,1212.1L2917.8,1206.6L2922.8,1209.9L2926.5,1211.1L2930.9,1212.3L2936.7,1216.6L2941.0,1218.9L2948.3,1218.3L2954.9,1190.1L2959.3,1204.7L2962.8,1209.5L2966.5,1201.6L2970.0,1206.3L2973.5,1203.0L2977.3,1200.8L2981.6,1202.0L2986.0,1201.8L2991.8,1200.7L2998.4,1198.1L3002.5,1200.5L3006.2,1200.2L3010.6,1198.7L3013.5,1201.9L3016.4,1102.6L3020.7,1177.6L3024.5,1216.9L3030.9,1195.1L3035.2,1196.6L3038.1,1192.8L3044.2,1201.7L3045.9,1201.6L3049.4,1206.3L3054.6,1209.1L3060.4,1208.5L3067.1,1213.6L3070.5,1216.5L3074.9,1210.4L3079.2,1216.3L3082.1,1212.8L3087.9,1218.0L3093.7,1219.3L3100.4,1223.5L3103.9,1224.9L3106.8,1228.0L3111.1,1208.2L3115.5,1220.7L3118.4,1200.8L3122.1,1179.8L3125.6,1157.3L3128.5,1178.7L3132.9,1188.7L3136.6,1210.1L3140.1,1197.9L3143.6,1204.9L3146.5,1193.4L3150.2,1193.0L3153.7,1179.6L3157.5,1158.2L3161.3,1197.5L3165.3,1210.1L3176.3,1199.9L3186.5,1192.2L3193.7,1142.3L3197.2,1171.6L3201.5,1177.6L3205.3,1165.9L3208.2,1167.2L3212.6,1172.6L3218.4,1175.8L3222.7,1177.6L3227.1,1182.9L3230.5,1183.4L3234.3,1188.6L3238.7,1185.2L3243.0,1186.0L3247.3,1190.0L3252.3,1191.5L3256.0,1191.9L3258.9,1208.7L3263.3,1202.8L3266.8,1183.0L3269.7,1182.6L3273.4,1174.9L3277.8,1181.2L3280.7,1188.8L3283.6,1186.7L3287.9,1198.7L3292.3,1198.5L3295.8,1198.8L3298.7,1199.1L3302.4,1119.0L3306.8,1145.0L3310.5,1159.2L3314.0,1167.5L3318.4,1176.4L3321.8,1183.5L3327.1,1182.7L3331.4,1202.1L3335.8,1201.9L3343.0,1201.0L3346.5,1206.0L3350.3,1214.6L3354.6,1216.5L3357.5,1218.6L3360.4,1212.1L3364.2,1214.0L3367.6,1226.0L3371.4,1218.2L3374.9,1215.6L3382.1,1224.1L3385.9,1217.2L3390.3,1215.3L3393.7,1219.7L3397.2,1209.6L3401.0,1206.4L3404.5,1206.3L3407.4,1199.6L3411.1,1200.6L3414.6,1196.0L3418.4,1193.2L3421.9,1192.9L3425.6,1189.2L3428.5,1188.3L3432.9,1184.4L3436.6,1186.3L3439.5,1124.8L3443.9,1182.1L3447.4,1195.2L3450.8,1209.7L3458.1,1211.5L3461.8,1210.7L3465.3,1211.2L3469.7,1207.8L3473.4,1208.3L3476.9,1208.8L3483.6,1208.4L3490.3,1107.0L3494.6,1184.8L3498.1,1181.6L3501.0,1186.0L3504.8,1189.3L3508.8,1188.8L3512.0,1194.6L3516.3,1194.3L3519.8,1190.7L3523.6,1195.1L3531.4,1200.8L3535.2,1202.5L3538.7,1200.3L3542.2,1201.9L3545.9,1207.0L3550.3,1204.1L3553.2,1209.9L3556.1,1219.0L3560.4,1206.4L3563.9,1190.6L3570.6,1191.2L3574.9,1197.0L3579.3,1190.3L3582.1,1199.4L3585.9,1205.8" stroke="#C15C17" stroke-width="2" fill="none" stroke-linejoin="round"/><path d="M115.1,1214.9L118.6,1220.7L122.0,1217.1L125.8,1223.3L130.1,1215.7L133.0,1223.4L136.8,1217.1L140.9,1225.4L144.6,1222.1L148.1,1220.8L151.9,1228.4L155.7,1221.4L158.6,1217.4L162.6,1122.2L166.4,1178.2L170.2,1185.9L173.6,1190.6L176.5,1198.5L180.9,1203.0L184.6,1211.7L188.1,1213.0L191.6,1219.9L195.7,1212.7L198.6,1219.8L202.6,1228.3L207.8,1225.5L213.6,1222.8L216.5,1228.7L220.0,1229.9L224.4,1229.5L227.3,1226.6L231.6,1226.6L237.4,1229.0L246.1,1230.4L250.4,1227.5L254.8,1229.8L262.0,1226.3L267.8,1218.0L272.2,1218.3L278.0,1216.7L281.5,1206.1L286.1,1184.9L288.7,1092.5L292.5,1161.6L296.8,1170.2L300.6,1172.6L303.5,1181.2L307.0,1180.8L310.4,1215.9L317.7,1206.5L321.5,1206.8L325.8,1209.8L330.2,1207.5L336.0,1213.8L341.8,1210.8L347.6,1215.0L351.0,1218.7L354.2,1225.8L357.7,1219.2L361.5,1202.9L365.8,1198.2L368.4,1178.9L372.2,1196.6L376.5,1202.0L380.0,1207.2L383.2,1214.1L387.3,1211.7L390.2,1216.2L393.9,1214.6L397.4,1216.3L401.2,1213.1L405.5,1216.2L408.4,1214.2L412.2,1213.5L415.7,1217.6L418.6,1218.2L422.9,1214.4L430.2,1216.0L433.9,1216.0L437.4,1215.4L440.9,1211.8L445.2,1213.2L447.8,1120.0L451.9,1192.0L455.4,1195.1L459.1,1199.1L462.6,1204.6L467.0,1200.5L470.2,1205.9L473.7,1209.2L478.0,1216.2L481.8,1213.9L488.1,1212.3L492.5,1214.2L498.3,1216.7L502.6,1214.5L507.0,1215.6L509.9,1217.5L513.4,1216.3L517.1,1215.3L520.9,1209.5L523.8,1203.8L527.9,1208.3L531.6,1206.4L535.4,1202.2L539.7,1201.9L543.2,1200.1L547.6,1202.8L551.9,1202.1L556.3,1202.6L562.1,1201.4L567.9,1205.1L572.2,1200.2L576.5,1204.7L580.0,1202.0L582.9,1198.3L586.7,1214.5L591.0,1122.6L593.9,1202.5L597.7,1203.8L601.8,1204.0L605.5,1206.2L609.9,1205.2L612.8,1208.8L615.7,1208.4L620.0,1215.5L624.4,1211.9L630.2,1213.1L634.5,1208.9L638.9,1202.3L641.8,1208.2L645.5,1223.9L651.9,1222.3L655.7,1215.3L660.0,1209.0L666.4,1220.1L670.8,1220.7L675.1,1220.3L678.0,1220.0L682.4,1220.0L686.7,1208.0L689.6,1206.5L694.0,1218.0L700.0,1212.3L703.2,1206.2L708.1,1207.4L710.4,1203.9L714.7,1205.6L719.1,1197.1L722.0,1197.0L726.3,1201.3L729.8,1190.9L733.6,1152.0L736.5,1196.7L740.8,1199.1L744.6,1195.9L748.1,1203.0L751.9,1202.4L755.3,1202.8L759.7,1209.1L762.6,1211.2L766.1,1208.3L769.8,1211.0L774.2,1209.6L778.5,1214.4L782.9,1213.9L788.7,1217.4L794.5,1219.1L795.9,1219.5L801.7,1219.7L806.1,1214.3L809.5,1216.3L814.2,1218.1L821.1,1197.9L824.9,1207.7L832.1,1199.9L836.5,1201.4L843.7,1204.3L851.0,1200.3L856.8,1204.6L864.0,1202.6L872.7,1205.3L875.6,1133.1L879.4,1192.7L883.7,1186.2L890.7,1220.5L894.5,1211.8L898.2,1212.2L904.6,1210.6L909.0,1208.4L912.7,1215.7L916.2,1212.5L920.0,1223.5L923.5,1218.6L927.8,1217.4L931.6,1214.2L934.5,1222.5L938.5,1213.7L942.9,1217.8L949.0,1217.1L953.0,1214.1L956.8,1219.2L959.7,1217.3L964.0,1216.8L969.3,1219.8L971.9,1214.9L975.6,1221.8L979.1,1225.7L982.3,1219.4L985.8,1217.3L992.4,1217.8L996.5,1212.6L1000.9,1215.6L1004.6,1214.5L1008.1,1207.7L1011.9,1209.8L1015.3,1204.8L1019.1,1197.2L1022.6,1218.7L1029.3,1212.9L1033.6,1210.1L1037.1,1216.6L1040.9,1210.3L1044.3,1209.5L1048.7,1209.1L1051.9,1215.3L1054.8,1195.4L1059.4,1163.5L1062.6,1180.7L1066.4,1183.5L1070.4,1186.4L1077.7,1194.2L1084.9,1191.6L1091.6,1200.6L1095.9,1203.1L1099.7,1199.2L1106.7,1200.3L1110.4,1202.0L1114.2,1203.9L1118.5,1208.8L1122.0,1209.3L1124.9,1222.9L1129.3,1215.4L1133.0,1200.1L1136.5,1200.2L1140.0,1200.2L1143.8,1195.4L1147.2,1204.4L1151.0,1206.9L1154.5,1202.2L1157.7,1210.2L1162.0,1143.4L1166.1,1175.6L1169.0,1181.6L1172.7,1186.8L1177.1,1193.8L1182.9,1198.1L1187.2,1195.6L1191.0,1209.2L1198.8,1206.8L1202.6,1208.0L1205.5,1208.2L1209.8,1206.9L1214.2,1213.3L1224.3,1214.1L1227.2,1209.1L1231.3,1214.2L1239.4,1211.2L1242.9,1218.7L1246.7,1213.3L1251.0,1211.8L1254.5,1209.4L1260.6,1209.9L1264.9,1207.1L1271.9,1207.8L1275.1,1208.3L1279.1,1208.9L1286.1,1200.7L1287.7,1202.9L1293.5,1201.2L1297.9,1204.2L1300.8,1196.1L1304.6,1204.7L1308.6,1212.6L1312.4,1211.5L1315.9,1209.4L1319.6,1206.0L1326.9,1206.8L1330.7,1206.7L1334.7,1208.4L1337.9,1205.4L1342.2,1207.3L1345.7,1206.7L1348.6,1207.6L1352.1,1194.3L1356.4,1149.9L1359.6,1177.7L1363.1,1182.1L1367.5,1183.0L1371.8,1189.2L1376.2,1194.9L1380.5,1194.9L1387.8,1197.7L1395.0,1202.1L1397.9,1199.2L1402.3,1200.2L1406.6,1201.7L1410.9,1202.0L1415.3,1208.1L1418.2,1205.7L1422.0,1216.5L1425.4,1208.7L1428.9,1194.7L1432.7,1193.8L1436.5,1194.7L1440.5,1192.0L1444.3,1193.9L1448.0,1154.5L1451.0,1202.3L1455.0,1201.5L1458.8,1202.3L1462.5,1198.8L1466.0,1200.6L1469.8,1206.7L1473.8,1199.8L1477.6,1209.7L1481.1,1212.6L1484.9,1212.7L1487.2,1206.1L1491.5,1210.4L1495.6,1217.0L1498.8,1205.1L1502.8,1212.7L1507.2,1209.3L1509.5,1216.5L1513.8,1211.4L1518.2,1214.1L1521.7,1211.5L1525.4,1215.4L1531.2,1214.1L1539.4,1213.6L1543.7,1213.5L1547.2,1221.2L1551.0,1211.2L1557.3,1200.0L1561.7,1197.9L1565.2,1198.0L1568.9,1190.1L1571.8,1187.1L1576.2,1187.4L1579.9,1188.0L1582.8,1171.7L1586.9,1180.0L1590.7,1188.0L1594.1,1199.4L1597.9,1203.7L1602.3,1200.3L1605.7,1200.9L1608.9,1202.4L1616.2,1201.8L1621.1,1200.4L1626.9,1200.8L1630.4,1197.6L1645.7,1200.4L1649.2,1200.8L1653.0,1200.1L1656.5,1205.6L1660.8,1216.4L1663.7,1203.8L1671.0,1188.8L1674.7,1191.3L1679.1,1197.0L1683.4,1196.2L1689.2,1203.5L1693.6,1200.1L1697.0,1207.9L1700.2,1204.3L1704.6,1203.7L1708.6,1206.5L1711.0,1211.6L1715.3,1209.9L1719.1,1207.3L1722.6,1209.5L1726.9,1212.8L1730.4,1208.7L1733.3,1101.9L1737.0,1191.7L1744.3,1194.5L1750.7,1203.3L1755.0,1206.0L1761.7,1211.0L1766.0,1207.9L1777.1,1219.8L1780.5,1216.8L1787.8,1215.7L1793.6,1222.9L1800.8,1222.6L1809.5,1220.9L1813.0,1223.1L1816.8,1219.7L1823.4,1215.0L1827.5,1203.9L1830.7,1208.4L1835.0,1213.2L1839.4,1199.6L1845.7,1198.7L1849.5,1193.4L1853.9,1191.2L1856.8,1202.2L1860.2,1198.9L1863.1,1180.1L1867.5,1190.4L1872.1,1196.4L1873.8,1194.9L1878.1,1201.2L1881.0,1215.2L1885.4,1218.1L1888.9,1198.2L1891.8,1203.8L1895.5,1206.2L1899.9,1203.3L1902.8,1204.2L1939.0,1203.5L1943.4,1204.0L1946.3,1206.0L1950.6,1206.9L1954.4,1212.3L1957.3,1215.5L1960.8,1208.4L1964.2,1196.6L1968.0,1205.4L1971.5,1198.5L1976.1,1198.4L1981.0,1204.2L1986.3,1205.0L1990.6,1206.2L1994.1,1201.1L1997.6,1206.1L2001.3,1204.3L2004.2,1209.4L2008.6,1208.1L2011.5,1209.7L2015.2,1209.6L2019.3,1173.3L2022.2,1200.7L2026.0,1204.8L2029.7,1201.3L2033.2,1205.2L2037.0,1204.8L2040.5,1208.3L2043.4,1206.4L2048.3,1202.5L2053.5,1206.3L2058.4,1207.1L2062.2,1207.2L2065.1,1206.1L2070.0,1206.1L2072.9,1210.2L2076.7,1210.4L2080.2,1208.6L2084.0,1206.3L2088.3,1207.8L2092.1,1210.6L2095.0,1207.9L2099.0,1208.7L2101.9,1209.9L2105.7,1210.1L2110.6,1212.2L2116.4,1208.2L2121.1,1200.5L2124.0,1190.5L2127.4,1172.4L2131.2,1191.5L2134.1,1194.3L2138.2,1200.4L2141.9,1196.8L2145.4,1200.9L2149.8,1199.0L2153.5,1200.3L2156.4,1202.5L2160.2,1202.5L2163.1,1190.2L2167.1,1205.0L2170.3,1200.8L2173.8,1203.1L2177.6,1201.3L2181.1,1203.6L2184.8,1204.2L2189.2,1203.4L2192.1,1210.1L2196.1,1211.7L2199.9,1205.6L2202.8,1202.4L2207.1,1196.5L2210.9,1189.5L2213.8,1196.2L2217.3,1195.5L2221.6,1205.1L2224.5,1207.4L2228.9,1205.6L2233.2,1210.1L2236.7,1211.8L2240.5,1214.7L2244.3,1208.6L2247.1,1206.4L2251.2,1209.1L2261.6,1218.0L2264.5,1204.3L2268.9,1204.6L2272.4,1209.3L2275.3,1207.2L2279.6,1204.4L2282.5,1209.2L2286.9,1209.2L2291.2,1206.5L2294.1,1205.3L2297.6,1207.5L2301.4,1204.6L2304.3,1135.9L2308.0,1199.5L2312.9,1200.4L2316.4,1203.8L2321.1,1207.4L2326.0,1206.0L2329.5,1207.4L2333.8,1210.7L2337.6,1203.6L2341.4,1209.3L2344.3,1205.7L2349.2,1209.9L2352.1,1207.9L2355.9,1208.5L2359.3,1208.9L2363.1,1210.7L2366.6,1211.0L2370.1,1211.0L2373.8,1205.0L2377.3,1208.7L2381.7,1213.2L2384.8,1212.3L2388.3,1214.2L2392.1,1208.8L2395.6,1210.2L2399.0,1212.7L2403.7,1214.3L2408.0,1213.6L2413.5,1212.0L2417.3,1208.7L2421.1,1202.8L2423.7,1139.1L2427.4,1197.2L2430.9,1194.0L2434.7,1195.1L2439.0,1195.5L2444.8,1203.6L2449.2,1195.1L2453.5,1210.1L2458.2,1209.7L2459.8,1211.8L2465.6,1212.8L2470.0,1211.3L2477.2,1210.8L2481.6,1211.5L2485.4,1214.1L2488.8,1223.8L2493.2,1223.9L2496.1,1210.2L2499.8,1208.5L2503.3,1205.5L2507.1,1203.6L2510.6,1219.9L2514.0,1211.2L2517.8,1218.2L2521.3,1224.3L2525.1,1218.3L2528.8,1217.8L2532.9,1224.1L2536.1,1223.6L2539.6,1221.6L2543.3,1223.5L2546.8,1226.0L2551.2,1231.1L2554.0,1229.8L2557.8,1229.6L2561.3,1230.7L2564.8,1225.3L2568.5,1216.4L2572.9,1206.6L2576.4,1204.4L2581.6,1207.8L2586.8,1215.8L2590.3,1185.1L2594.1,1208.0L2597.5,1214.1L2601.3,1209.7L2604.8,1216.8L2609.1,1213.2L2612.9,1214.7L2615.8,1217.4L2620.1,1225.4L2623.6,1227.2L2626.5,1218.4L2630.0,1214.7L2633.8,1229.6L2639.6,1224.5L2643.9,1222.8L2647.7,1222.1L2652.0,1223.5L2654.6,1212.7L2659.0,1185.1L2662.8,1204.4L2666.2,1204.9L2670.0,1201.7L2673.5,1204.8L2677.3,1202.4L2681.6,1206.0L2684.5,1204.5L2688.3,1207.5L2691.7,1206.7L2696.1,1207.3L2700.4,1210.8L2704.8,1209.7L2709.1,1203.5L2713.5,1198.4L2716.4,1200.3L2720.7,1188.9L2724.5,1194.4L2727.4,1183.9L2731.5,1191.9L2735.2,1205.8L2738.1,1206.7L2742.5,1203.5L2746.8,1208.1L2750.6,1209.8L2754.1,1220.9L2757.0,1216.2L2760.7,1217.3L2764.2,1222.3L2767.7,1223.5L2770.9,1219.6L2774.3,1218.2L2778.7,1225.4L2782.2,1224.1L2785.4,1224.1L2788.8,1221.0L2793.2,1224.0L2796.7,1223.3L2800.4,1219.9L2804.2,1201.8L2807.7,1185.5L2810.6,1165.6L2814.1,1189.0L2817.8,1209.8L2821.6,1215.5L2825.1,1227.2L2828.8,1226.7L2832.9,1222.1L2836.1,1225.7L2840.4,1202.3L2846.8,1209.3L2850.6,1199.5L2854.1,1214.8L2857.5,1200.5L2861.3,1199.6L2864.8,1201.8L2868.6,1151.3L2872.3,1186.8L2875.2,1149.7L2879.6,1214.1L2883.1,1213.0L2887.4,1211.8L2891.8,1216.0L2897.6,1218.5L2904.8,1216.4L2909.1,1216.5L2913.5,1217.8L2917.8,1216.6L2922.8,1214.9L2926.5,1214.4L2930.9,1214.3L2936.7,1217.6L2941.0,1215.7L2948.3,1214.0L2954.9,1194.7L2959.3,1197.4L2962.8,1207.4L2966.5,1206.7L2970.0,1210.2L2973.5,1210.0L2977.3,1210.4L2981.6,1210.1L2986.0,1207.1L2991.8,1209.4L2998.4,1210.1L3002.5,1206.0L3006.2,1209.2L3010.6,1210.4L3013.5,1213.5L3016.4,1094.0L3020.7,1199.4L3024.5,1219.0L3030.9,1204.2L3035.2,1209.6L3038.1,1205.9L3044.2,1208.5L3045.9,1206.9L3049.4,1211.4L3054.6,1212.9L3060.4,1211.6L3067.1,1212.5L3070.5,1214.9L3074.9,1218.3L3079.2,1216.5L3082.1,1220.4L3087.9,1215.3L3093.7,1215.2L3100.4,1224.6L3103.9,1219.3L3106.8,1221.1L3111.1,1221.5L3115.5,1221.5L3118.4,1220.8L3122.1,1208.8L3125.6,1216.1L3128.5,1203.4L3132.9,1207.4L3136.6,1219.5L3140.1,1195.7L3143.6,1214.0L3146.5,1182.4L3150.2,1203.3L3153.7,1205.2L3157.5,1202.7L3161.3,1196.5L3165.3,1217.0L3176.3,1195.3L3186.5,1216.5L3193.7,1170.1L3197.2,1200.4L3201.5,1194.6L3205.3,1188.6L3208.2,1183.1L3212.6,1193.5L3218.4,1194.0L3222.7,1196.3L3227.1,1194.8L3230.5,1197.2L3234.3,1197.4L3238.7,1200.5L3243.0,1199.5L3247.3,1201.3L3252.3,1203.7L3256.0,1199.5L3258.9,1214.4L3263.3,1209.4L3266.8,1200.7L3269.7,1200.0L3273.4,1191.1L3277.8,1191.8L3280.7,1188.6L3283.6,1193.6L3287.9,1202.2L3292.3,1201.2L3295.8,1207.4L3298.7,1203.8L3302.4,1134.0L3306.8,1191.3L3310.5,1197.8L3314.0,1193.4L3318.4,1199.7L3321.8,1198.0L3327.1,1200.1L3331.4,1199.7L3335.8,1197.7L3343.0,1190.1L3346.5,1211.1L3350.3,1198.0L3354.6,1216.0L3357.5,1205.2L3360.4,1197.7L3364.2,1213.2L3367.6,1222.0L3371.4,1204.6L3374.9,1213.9L3382.1,1200.9L3385.9,1197.9L3390.3,1203.2L3393.7,1207.9L3397.2,1211.5L3401.0,1208.9L3404.5,1206.0L3407.4,1200.6L3411.1,1201.8L3414.6,1201.7L3418.4,1200.4L3421.9,1193.3L3425.6,1189.4L3428.5,1192.1L3432.9,1191.3L3436.6,1191.4L3439.5,1154.8L3443.9,1189.9L3447.4,1195.9L3450.8,1210.8L3458.1,1204.9L3461.8,1206.5L3465.3,1205.7L3469.7,1204.7L3473.4,1207.5L3476.9,1203.5L3483.6,1203.2L3490.3,1127.9L3494.6,1190.2L3498.1,1183.7L3501.0,1190.6L3504.8,1187.6L3508.8,1188.9L3512.0,1188.8L3516.3,1193.9L3519.8,1196.2L3523.6,1196.5L3531.4,1198.5L3535.2,1201.6L3538.7,1201.3L3542.2,1200.1L3545.9,1201.7L3550.3,1199.6L3553.2,1200.3L3556.1,1214.4L3560.4,1208.2L3563.9,1190.6L3570.6,1187.5L3574.9,1199.4L3579.3,1193.3L3582.1,1198.7L3585.9,1201.4" stroke="#890F02" stroke-width="2" fill="none" stroke-linejoin="round"/><path d="M115.1,1218.2L118.6,1221.1L122.0,1217.7L125.8,1218.9L130.1,1220.7L133.0,1220.9L136.8,1218.1L140.9,1228.4L144.6,1220.6L148.1,1220.2L151.9,1217.5L155.7,1218.6L158.6,1213.8L162.6,1152.5L166.4,1197.3L170.2,1195.3L173.6,1199.5L176.5,1207.5L180.9,1212.7L184.6,1209.5L188.1,1214.5L191.6,1219.2L195.7,1219.5L198.6,1223.5L202.6,1222.4L207.8,1224.9L213.6,1225.1L216.5,1230.4L220.0,1229.8L224.4,1230.0L227.3,1229.0L231.6,1230.0L237.4,1230.6L246.1,1229.1L250.4,1224.4L254.8,1224.9L262.0,1225.4L267.8,1224.1L272.2,1215.2L278.0,1215.5L281.5,1205.4L286.1,1185.8L288.7,1096.5L292.5,1160.7L296.8,1164.5L300.6,1173.1L303.5,1177.4L307.0,1176.8L310.4,1218.4L317.7,1210.4L321.5,1208.1L325.8,1213.3L330.2,1210.3L336.0,1210.1L341.8,1213.2L347.6,1216.6L351.0,1214.6L354.2,1223.2L357.7,1230.1L361.5,1213.1L365.8,1207.7L368.4,1199.7L372.2,1208.5L376.5,1206.9L380.0,1209.8L383.2,1218.5L387.3,1219.1L390.2,1224.6L393.9,1218.3L397.4,1222.6L401.2,1218.9L405.5,1220.9L408.4,1222.2L412.2,1218.8L415.7,1218.9L418.6,1222.0L422.9,1214.9L430.2,1220.3L433.9,1219.6L437.4,1221.5L440.9,1222.2L445.2,1219.3L447.8,1153.1L451.9,1161.7L455.4,1171.5L459.1,1178.5L462.6,1193.5L467.0,1200.5L470.2,1200.0L473.7,1209.6L478.0,1211.6L481.8,1216.7L488.1,1219.0L492.5,1216.3L498.3,1221.5L502.6,1224.1L507.0,1220.0L509.9,1223.8L513.4,1221.2L517.1,1222.9L520.9,1214.5L523.8,1207.7L527.9,1211.1L531.6,1211.3L535.4,1213.7L539.7,1202.5L543.2,1206.2L547.6,1206.9L551.9,1207.5L556.3,1209.1L562.1,1209.3L567.9,1208.4L572.2,1207.0L576.5,1209.3L580.0,1210.4L582.9,1206.3L586.7,1216.1L591.0,1105.3L593.9,1214.0L597.7,1216.4L601.8,1220.9L605.5,1205.1L609.9,1205.2L612.8,1214.5L615.7,1214.6L620.0,1225.5L624.4,1202.2L630.2,1214.0L634.5,1206.2L638.9,1225.1L641.8,1210.3L645.5,1203.3L651.9,1217.3L655.7,1230.0L660.0,1222.8L666.4,1218.1L670.8,1211.5L675.1,1212.1L678.0,1212.5L682.4,1219.4L686.7,1230.2L689.6,1210.0L694.0,1211.3L700.0,1225.1L703.2,1211.4L708.1,1223.0L710.4,1192.8L714.7,1211.6L719.1,1206.7L722.0,1202.1L726.3,1213.5L729.8,1198.1L733.6,1135.6L736.5,1206.5L740.8,1207.0L744.6,1208.5L748.1,1212.2L751.9,1210.0L755.3,1209.7L759.7,1209.8L762.6,1212.8L766.1,1208.9L769.8,1214.5L774.2,1214.8L778.5,1219.2L782.9,1211.0L788.7,1212.6L794.5,1212.5L795.9,1219.1L801.7,1214.4L806.1,1219.7L809.5,1213.8L814.2,1216.8L821.1,1206.7L824.9,1210.7L832.1,1208.8L836.5,1204.2L843.7,1204.7L851.0,1210.0L856.8,1205.2L864.0,1212.9L872.7,1204.6L875.6,1160.2L879.4,1200.9L883.7,1198.7L890.7,1213.7L894.5,1212.7L898.2,1215.0L904.6,1210.5L909.0,1210.7L912.7,1205.1L916.2,1217.5L920.0,1209.4L923.5,1213.3L927.8,1222.6L931.6,1207.5L934.5,1221.9L938.5,1216.3L942.9,1213.0L949.0,1220.5L953.0,1217.9L956.8,1212.2L959.7,1216.9L964.0,1219.3L969.3,1210.5L971.9,1219.0L975.6,1207.3L979.1,1226.2L982.3,1214.5L985.8,1214.2L992.4,1216.1L996.5,1205.8L1000.9,1208.9L1004.6,1215.3L1008.1,1205.0L1011.9,1205.6L1015.3,1198.7L1019.1,1196.8L1022.6,1215.1L1029.3,1211.9L1033.6,1210.5L1037.1,1211.2L1040.9,1206.1L1044.3,1205.5L1048.7,1210.8L1051.9,1208.9L1054.8,1190.7L1059.4,1189.6L1062.6,1190.9L1066.4,1193.3L1070.4,1193.4L1077.7,1189.5L1084.9,1193.5L1091.6,1198.8L1095.9,1198.1L1099.7,1199.4L1106.7,1200.2L1110.4,1203.4L1114.2,1201.2L1118.5,1203.7L1122.0,1208.0L1124.9,1221.0L1129.3,1211.8L1133.0,1194.8L1136.5,1195.1L1140.0,1192.7L1143.8,1194.0L1147.2,1204.3L1151.0,1197.1L1154.5,1194.8L1157.7,1209.9L1162.0,1135.8L1166.1,1198.8L1169.0,1202.6L1172.7,1201.6L1177.1,1192.7L1182.9,1207.7L1187.2,1207.2L1191.0,1214.3L1198.8,1220.8L1202.6,1219.3L1205.5,1229.1L1209.8,1225.6L1214.2,1222.3L1224.3,1224.6L1227.2,1220.5L1231.3,1231.0L1239.4,1225.0L1242.9,1226.5L1246.7,1226.1L1251.0,1226.9L1254.5,1225.6L1260.6,1217.0L1264.9,1214.1L1271.9,1214.8L1275.1,1207.0L1279.1,1205.0L1286.1,1197.4L1287.7,1199.4L1293.5,1195.3L1297.9,1192.9L1300.8,1190.8L1304.6,1200.5L1308.6,1225.2L1312.4,1221.0L1315.9,1220.4L1319.6,1219.4L1326.9,1219.1L1330.7,1220.8L1334.7,1216.5L1337.9,1221.0L1342.2,1220.7L1345.7,1225.4L1348.6,1214.9L1352.1,1183.1L1356.4,1170.1L1359.6,1205.3L1363.1,1202.1L1367.5,1200.0L1371.8,1205.3L1376.2,1204.4L1380.5,1205.6L1387.8,1211.7L1395.0,1213.4L1397.9,1213.0L1402.3,1215.3L1406.6,1214.8L1410.9,1217.2L1415.3,1212.0L1418.2,1219.8L1422.0,1231.6L1425.4,1223.2L1428.9,1200.1L1432.7,1198.1L1436.5,1193.6L1440.5,1193.1L1444.3,1203.6L1448.0,1163.9L1451.0,1217.0L1455.0,1216.6L1458.8,1216.6L1462.5,1220.1L1466.0,1214.8L1469.8,1211.1L1473.8,1220.7L1477.6,1224.6L1481.1,1213.8L1484.9,1225.6L1487.2,1223.9L1491.5,1214.5L1495.6,1220.1L1498.8,1225.8L1502.8,1217.0L1507.2,1229.4L1509.5,1225.9L1513.8,1231.2L1518.2,1214.7L1521.7,1230.9L1525.4,1218.5L1531.2,1230.7L1539.4,1230.7L1543.7,1231.6L1547.2,1230.9L1551.0,1227.5L1557.3,1207.1L1561.7,1212.7L1565.2,1211.4L1568.9,1196.1L1571.8,1193.9L1576.2,1181.9L1579.9,1194.3L1582.8,1168.9L1586.9,1186.2L1590.7,1187.1L1594.1,1207.9L1597.9,1218.3L1602.3,1214.7L1605.7,1213.8L1608.9,1210.4L1616.2,1209.6L1621.1,1212.6L1626.9,1212.8L1630.4,1214.3L1645.7,1212.7L1649.2,1215.9L1653.0,1211.1L1656.5,1217.0L1660.8,1231.3L1663.7,1217.3L1671.0,1199.7L1674.7,1200.3L1679.1,1201.4L1683.4,1206.0L1689.2,1215.2L1693.6,1211.8L1697.0,1218.6L1700.2,1220.3L1704.6,1218.0L1708.6,1216.8L1711.0,1224.8L1715.3,1224.3L1719.1,1221.9L1722.6,1221.4L1726.9,1222.2L1730.4,1224.2L1733.3,1101.6L1737.0,1188.3L1744.3,1202.0L1750.7,1214.0L1755.0,1218.4L1761.7,1223.7L1766.0,1228.9L1777.1,1231.0L1780.5,1230.8L1787.8,1231.0L1793.6,1230.7L1800.8,1231.3L1809.5,1232.0L1813.0,1231.3L1816.8,1232.2L1823.4,1230.5L1827.5,1224.4L1830.7,1226.5L1835.0,1228.2L1839.4,1208.2L1845.7,1203.0L1849.5,1211.4L1853.9,1204.1L1856.8,1199.6L1860.2,1197.4L1863.1,1199.6L1867.5,1193.8L1872.1,1197.4L1873.8,1198.6L1878.1,1210.8L1881.0,1229.2L1885.4,1224.4L1888.9,1208.1L1891.8,1220.8L1895.5,1219.4L1899.9,1216.1L1902.8,1214.6L1939.0,1216.5L1943.4,1218.6L1946.3,1217.3L1950.6,1217.8L1954.4,1221.1L1957.3,1229.9L1960.8,1218.9L1964.2,1209.2L1968.0,1208.3L1971.5,1212.9L1976.1,1212.6L1981.0,1216.9L1986.3,1218.5L1990.6,1218.8L1994.1,1215.0L1997.6,1217.8L2001.3,1218.0L2004.2,1221.8L2008.6,1218.9L2011.5,1219.0L2015.2,1224.0L2019.3,1092.1L2022.2,1155.5L2026.0,1168.6L2029.7,1178.4L2033.2,1187.1L2037.0,1193.6L2040.5,1195.4L2043.4,1210.7L2048.3,1207.8L2053.5,1209.0L2058.4,1212.9L2062.2,1217.9L2065.1,1223.8L2070.0,1218.7L2072.9,1217.0L2076.7,1226.9L2080.2,1224.3L2084.0,1221.4L2088.3,1221.3L2092.1,1223.9L2095.0,1224.5L2099.0,1220.6L2101.9,1217.8L2105.7,1223.9L2110.6,1218.3L2116.4,1216.0L2121.1,1212.6L2124.0,1204.0L2127.4,1191.8L2131.2,1201.9L2134.1,1201.6L2138.2,1204.7L2141.9,1197.6L2145.4,1204.8L2149.8,1204.3L2153.5,1197.5L2156.4,1189.9L2160.2,1182.3L2163.1,1150.6L2167.1,1188.7L2170.3,1195.8L2173.8,1202.1L2177.6,1212.6L2181.1,1208.4L2184.8,1206.9L2189.2,1210.2L2192.1,1216.9L2196.1,1224.5L2199.9,1213.9L2202.8,1216.2L2207.1,1209.0L2210.9,1208.7L2213.8,1222.1L2217.3,1213.8L2221.6,1215.9L2224.5,1219.7L2228.9,1219.8L2233.2,1217.6L2236.7,1222.8L2240.5,1219.7L2244.3,1218.6L2247.1,1221.4L2251.2,1222.1L2261.6,1221.3L2264.5,1219.3L2268.9,1219.6L2272.4,1217.9L2275.3,1226.1L2279.6,1221.9L2282.5,1223.0L2286.9,1219.4L2291.2,1224.4L2294.1,1218.0L2297.6,1224.6L2301.4,1219.9L2304.3,1170.8L2308.0,1204.3L2312.9,1206.5L2316.4,1206.1L2321.1,1210.5L2326.0,1213.6L2329.5,1215.8L2333.8,1223.3L2337.6,1216.4L2341.4,1222.1L2344.3,1221.4L2349.2,1223.7L2352.1,1220.8L2355.9,1225.2L2359.3,1222.3L2363.1,1228.9L2366.6,1222.2L2370.1,1223.4L2373.8,1228.3L2377.3,1224.6L2381.7,1226.2L2384.8,1227.6L2388.3,1224.1L2392.1,1223.8L2395.6,1222.8L2399.0,1220.1L2403.7,1216.1L2408.0,1219.5L2413.5,1218.5L2417.3,1204.5L2421.1,1188.8L2423.7,1149.4L2427.4,1169.0L2430.9,1169.3L2434.7,1176.2L2439.0,1176.5L2444.8,1186.5L2449.2,1176.6L2453.5,1211.1L2458.2,1202.5L2459.8,1202.3L2465.6,1204.7L2470.0,1206.0L2477.2,1199.5L2481.6,1202.4L2485.4,1205.2L2488.8,1217.7L2493.2,1219.8L2496.1,1195.4L2499.8,1200.0L2503.3,1196.7L2507.1,1194.3L2510.6,1215.0L2514.0,1210.7L2517.8,1211.1L2521.3,1208.8L2525.1,1214.4L2528.8,1219.4L2532.9,1207.9L2536.1,1219.4L2539.6,1216.3L2543.3,1216.7L2546.8,1211.3L2551.2,1218.4L2554.0,1209.2L2557.8,1218.0L2561.3,1219.9L2564.8,1230.8L2568.5,1204.5L2572.9,1197.2L2576.4,1227.1L2581.6,1200.2L2586.8,1203.7L2590.3,1169.2L2594.1,1191.3L2597.5,1197.3L2601.3,1187.3L2604.8,1199.6L2609.1,1208.0L2612.9,1201.0L2615.8,1199.8L2620.1,1209.6L2623.6,1207.8L2626.5,1208.5L2630.0,1193.9L2633.8,1203.5L2639.6,1206.6L2643.9,1211.8L2647.7,1208.5L2652.0,1201.4L2654.6,1195.8L2659.0,1177.6L2662.8,1193.0L2666.2,1191.8L2670.0,1191.2L2673.5,1191.0L2677.3,1195.9L2681.6,1195.5L2684.5,1194.9L2688.3,1203.3L2691.7,1197.7L2696.1,1197.3L2700.4,1198.5L2704.8,1201.7L2709.1,1201.5L2713.5,1201.4L2716.4,1206.1L2720.7,1207.5L2724.5,1203.4L2727.4,1195.6L2731.5,1195.8L2735.2,1194.2L2738.1,1201.1L2742.5,1195.5L2746.8,1200.9L2750.6,1204.2L2754.1,1207.7L2757.0,1205.5L2760.7,1208.3L2764.2,1212.5L2767.7,1210.8L2770.9,1209.9L2774.3,1209.8L2778.7,1209.6L2782.2,1210.0L2785.4,1214.8L2788.8,1213.0L2793.2,1211.2L2796.7,1216.5L2800.4,1217.6L2804.2,1216.7L2807.7,1217.6L2810.6,1213.9L2814.1,1214.7L2817.8,1219.7L2821.6,1214.6L2825.1,1220.3L2828.8,1208.7L2832.9,1214.7L2836.1,1222.8L2840.4,1207.4L2846.8,1202.9L2850.6,1191.7L2854.1,1207.4L2857.5,1198.6L2861.3,1182.4L2864.8,1192.0L2868.6,1157.1L2872.3,1202.9L2875.2,1148.3L2879.6,1215.4L2883.1,1193.9L2887.4,1210.6L2891.8,1210.9L2897.6,1214.2L2904.8,1208.1L2909.1,1209.9L2913.5,1213.1L2917.8,1214.3L2922.8,1214.0L2926.5,1217.5L2930.9,1213.8L2936.7,1214.5L2941.0,1212.4L2948.3,1220.2L2954.9,1199.0L2959.3,1207.5L2962.8,1211.2L2966.5,1210.4L2970.0,1208.2L2973.5,1208.7L2977.3,1206.1L2981.6,1207.1L2986.0,1208.1L2991.8,1206.6L2998.4,1208.1L3002.5,1203.9L3006.2,1206.4L3010.6,1207.7L3013.5,1201.0L3016.4,1100.1L3020.7,1187.8L3024.5,1220.6L3030.9,1200.8L3035.2,1204.5L3038.1,1201.6L3044.2,1206.6L3045.9,1203.1L3049.4,1216.4L3054.6,1212.6L3060.4,1211.1L3067.1,1220.8L3070.5,1214.7L3074.9,1217.6L3079.2,1218.0L3082.1,1218.3L3087.9,1221.5L3093.7,1224.7L3100.4,1217.8L3103.9,1214.9L3106.8,1224.1L3111.1,1214.5L3115.5,1212.9L3118.4,1211.4L3122.1,1222.7L3125.6,1210.4L3128.5,1230.1L3132.9,1214.3L3136.6,1206.3L3140.1,1189.4L3143.6,1204.4L3146.5,1195.7L3150.2,1182.2L3153.7,1192.4L3157.5,1192.0L3161.3,1201.7L3165.3,1229.7L3176.3,1200.2L3186.5,1203.3L3193.7,1149.8L3197.2,1193.2L3201.5,1191.4L3205.3,1186.4L3208.2,1188.0L3212.6,1187.9L3218.4,1198.2L3222.7,1196.8L3227.1,1199.1L3230.5,1201.5L3234.3,1203.8L3238.7,1203.0L3243.0,1203.0L3247.3,1203.5L3252.3,1205.4L3256.0,1202.3L3258.9,1214.1L3263.3,1212.3L3266.8,1201.0L3269.7,1198.8L3273.4,1194.2L3277.8,1195.5L3280.7,1199.1L3283.6,1202.5L3287.9,1201.9L3292.3,1207.7L3295.8,1210.4L3298.7,1207.3L3302.4,1140.6L3306.8,1195.9L3310.5,1195.6L3314.0,1194.9L3318.4,1198.7L3321.8,1202.6L3327.1,1208.0L3331.4,1207.3L3335.8,1219.5L3343.0,1207.1L3346.5,1218.1L3350.3,1224.5L3354.6,1222.5L3357.5,1226.1L3360.4,1216.8L3364.2,1231.4L3367.6,1210.0L3371.4,1208.3L3374.9,1223.8L3382.1,1221.4L3385.9,1224.0L3390.3,1219.0L3393.7,1220.7L3397.2,1219.5L3401.0,1206.4L3404.5,1211.5L3407.4,1202.7L3411.1,1199.5L3414.6,1197.8L3418.4,1195.0L3421.9,1195.9L3425.6,1184.5L3428.5,1190.5L3432.9,1181.6L3436.6,1186.2L3439.5,1148.5L3443.9,1186.3L3447.4,1198.1L3450.8,1214.5L3458.1,1214.2L3461.8,1219.2L3465.3,1215.6L3469.7,1208.9L3473.4,1210.2L3476.9,1212.5L3483.6,1212.2L3490.3,1134.5L3494.6,1180.7L3498.1,1189.0L3501.0,1189.8L3504.8,1190.8L3508.8,1192.4L3512.0,1197.3L3516.3,1195.3L3519.8,1198.9L3523.6,1201.1L3531.4,1203.5L3535.2,1204.2L3538.7,1205.0L3542.2,1204.2L3545.9,1204.3L3550.3,1208.1L3553.2,1206.6L3556.1,1219.5L3560.4,1211.9L3563.9,1203.2L3570.6,1193.6L3574.9,1201.5L3579.3,1196.3L3582.1,1208.3L3585.9,1206.6" stroke="#0A437C" stroke-width="2" fill="none" stroke-linejoin="round"/></svg>
<div class="t" style="right:3628.0px;top:891.9px;font-size:24.2px;color:#ccccdc;text-align:right;">12.5</div>
<div class="t" style="right:3628.0px;top:952.2px;font-size:24.2px;color:#ccccdc;text-align:right;">10</div>
<div class="t" style="right:3628.0px;top:1012.5px;font-size:24.2px;color:#ccccdc;text-align:right;">7.5</div>
<div class="t" style="right:3628.0px;top:1072.8px;font-size:24.2px;color:#ccccdc;text-align:right;">5</div>
<div class="t" style="right:3628.0px;top:1133.1px;font-size:24.2px;color:#ccccdc;text-align:right;">2.5</div>
<div class="t" style="right:3628.0px;top:1193.4px;font-size:24.2px;color:#ccccdc;text-align:right;">0</div>
<div class="t" style="right:3628.0px;top:1253.7px;font-size:24.2px;color:#ccccdc;text-align:right;">-2.5</div>
<div class="t" style="left:-53.5px;width:600px;top:1296.5px;font-size:24.2px;color:#ccccdc;text-align:center;">17:11:45</div>
<div class="t" style="left:124.4px;width:600px;top:1296.5px;font-size:24.2px;color:#ccccdc;text-align:center;">17:12:00</div>
<div class="t" style="left:302.4px;width:600px;top:1296.5px;font-size:24.2px;color:#ccccdc;text-align:center;">17:12:15</div>
<div class="t" style="left:480.3px;width:600px;top:1296.5px;font-size:24.2px;color:#ccccdc;text-align:center;">17:12:30</div>
<div class="t" style="left:658.3px;width:600px;top:1296.5px;font-size:24.2px;color:#ccccdc;text-align:center;">17:12:45</div>
<div class="t" style="left:836.2px;width:600px;top:1296.5px;font-size:24.2px;color:#ccccdc;text-align:center;">17:13:00</div>
<div class="t" style="left:1014.1px;width:600px;top:1296.5px;font-size:24.2px;color:#ccccdc;text-align:center;">17:13:15</div>
<div class="t" style="left:1192.1px;width:600px;top:1296.5px;font-size:24.2px;color:#ccccdc;text-align:center;">17:13:30</div>
<div class="t" style="left:1370.0px;width:600px;top:1296.5px;font-size:24.2px;color:#ccccdc;text-align:center;">17:13:45</div>
<div class="t" style="left:1548.0px;width:600px;top:1296.5px;font-size:24.2px;color:#ccccdc;text-align:center;">17:14:00</div>
<div class="t" style="left:1725.9px;width:600px;top:1296.5px;font-size:24.2px;color:#ccccdc;text-align:center;">17:14:15</div>
<div class="t" style="left:1903.8px;width:600px;top:1296.5px;font-size:24.2px;color:#ccccdc;text-align:center;">17:14:30</div>
<div class="t" style="left:2081.8px;width:600px;top:1296.5px;font-size:24.2px;color:#ccccdc;text-align:center;">17:14:45</div>
<div class="t" style="left:2259.7px;width:600px;top:1296.5px;font-size:24.2px;color:#ccccdc;text-align:center;">17:15:00</div>
<div class="t" style="left:2437.7px;width:600px;top:1296.5px;font-size:24.2px;color:#ccccdc;text-align:center;">17:15:15</div>
<div class="t" style="left:2615.6px;width:600px;top:1296.5px;font-size:24.2px;color:#ccccdc;text-align:center;">17:15:30</div>
<div class="t" style="left:2793.5px;width:600px;top:1296.5px;font-size:24.2px;color:#ccccdc;text-align:center;">17:15:45</div>
<div class="t" style="left:2971.5px;width:600px;top:1296.5px;font-size:24.2px;color:#ccccdc;text-align:center;">17:16:00</div>
<div class="t" style="left:3149.4px;width:600px;top:1296.5px;font-size:24.2px;color:#ccccdc;text-align:center;">17:16:15</div>
<div class="t" style="left:3327.4px;width:600px;top:1296.5px;font-size:24.2px;color:#ccccdc;text-align:center;">17:16:30</div>
<div class="abs" style="left:55px;top:1345.7px;width:28px;height:8px;border-radius:4px;background:#8AB8FF"></div>
<div class="t" style="left:99.5px;top:1336.2px;font-size:25.2px;color:#ccccdc;letter-spacing:-0.3px">r1_score</div>
<div class="abs" style="left:215px;top:1345.7px;width:28px;height:8px;border-radius:4px;background:#73BF69"></div>
<div class="t" style="left:259.5px;top:1336.2px;font-size:25.2px;color:#ccccdc;letter-spacing:-0.3px">r2_score</div>
<div class="abs" style="left:378.5px;top:1345.7px;width:28px;height:8px;border-radius:4px;background:#8AB8FF"></div>
<div class="t" style="left:423.0px;top:1336.2px;font-size:25.2px;color:#ccccdc;letter-spacing:-0.3px">r3_score</div>
<div class="abs" style="left:542px;top:1345.7px;width:28px;height:8px;border-radius:4px;background:#FF780A"></div>
<div class="t" style="left:586.5px;top:1336.2px;font-size:25.2px;color:#ccccdc;letter-spacing:-0.3px">r4_score</div>
<div class="abs" style="left:706px;top:1345.7px;width:28px;height:8px;border-radius:4px;background:#F2495C"></div>
<div class="t" style="left:750.5px;top:1336.2px;font-size:25.2px;color:#ccccdc;letter-spacing:-0.3px">r5_score</div>
<div class="abs" style="left:868.5px;top:1345.7px;width:28px;height:8px;border-radius:4px;background:#5794F2"></div>
<div class="t" style="left:913.0px;top:1336.2px;font-size:25.2px;color:#ccccdc;letter-spacing:-0.3px">r6_score</div>
<div class="abs" style="left:1031px;top:1345.7px;width:28px;height:8px;border-radius:4px;background:#B877D9"></div>
<div class="t" style="left:1075.5px;top:1336.2px;font-size:25.2px;color:#ccccdc;letter-spacing:-0.3px">r7_score</div>
<div class="abs" style="left:1190px;top:1345.7px;width:28px;height:8px;border-radius:4px;background:#705DA0"></div>
<div class="t" style="left:1234.5px;top:1336.2px;font-size:25.2px;color:#ccccdc;letter-spacing:-0.3px">r8_score</div>
<div class="abs" style="left:1353px;top:1345.7px;width:28px;height:8px;border-radius:4px;background:#37872D"></div>
<div class="t" style="left:1397.5px;top:1336.2px;font-size:25.2px;color:#ccccdc;letter-spacing:-0.3px">r9_score</div>
<div class="abs" style="left:1516px;top:1345.7px;width:28px;height:8px;border-radius:4px;background:#FADE2A"></div>
<div class="t" style="left:1560.5px;top:1336.2px;font-size:25.2px;color:#ccccdc;letter-spacing:-0.3px">r10_score</div>
<div class="abs" style="left:1690px;top:1345.7px;width:28px;height:8px;border-radius:4px;background:#447EBC"></div>
<div class="t" style="left:1734.5px;top:1336.2px;font-size:25.2px;color:#ccccdc;letter-spacing:-0.3px">r11_score</div>
<div class="abs" style="left:1861px;top:1345.7px;width:28px;height:8px;border-radius:4px;background:#C15C17"></div>
<div class="t" style="left:1905.5px;top:1336.2px;font-size:25.2px;color:#ccccdc;letter-spacing:-0.3px">r12_score</div>
<div class="abs" style="left:2035.5px;top:1345.7px;width:28px;height:8px;border-radius:4px;background:#890F02"></div>
<div class="t" style="left:2080.0px;top:1336.2px;font-size:25.2px;color:#ccccdc;letter-spacing:-0.3px">r13_score</div>
<div class="abs" style="left:2211px;top:1345.7px;width:28px;height:8px;border-radius:4px;background:#0A437C"></div>
<div class="t" style="left:2255.5px;top:1336.2px;font-size:25.2px;color:#ccccdc;letter-spacing:-0.3px">r14_score</div>
<div class="panel" style="top:1402.7px"></div>
<div class="t" style="left:46.5px;top:1422.4px;font-size:29.3px;color:#ccccdc;-webkit-text-stroke:0.35px #ccccdc;letter-spacing:0.55px">R-scores: downsampled (LTTB algorithm)</div>
<svg width="3723" height="1981" style="left:0;top:0;overflow:hidden"><rect x="105.5" y="1513" width="3565.5" height="1" fill="rgba(240,250,255,0.09)"/><rect x="105.5" y="1574" width="3565.5" height="1" fill="rgba(240,250,255,0.09)"/><rect x="105.5" y="1634" width="3565.5" height="1" fill="rgba(240,250,255,0.09)"/><rect x="105.5" y="1694" width="3565.5" height="1" fill="rgba(240,250,255,0.09)"/><rect x="105.5" y="1754" width="3565.5" height="1" fill="rgba(240,250,255,0.09)"/><rect x="105.5" y="1815" width="3565.5" height="1" fill="rgba(240,250,255,0.09)"/><rect x="105.5" y="1875" width="3565.5" height="1" fill="rgba(240,250,255,0.09)"/><rect x="246" y="1502.2" width="1" height="393.0" fill="rgba(240,250,255,0.09)"/><rect x="424" y="1502.2" width="1" height="393.0" fill="rgba(240,250,255,0.09)"/><rect x="602" y="1502.2" width="1" height="393.0" fill="rgba(240,250,255,0.09)"/><rect x="780" y="1502.2" width="1" height="393.0" fill="rgba(240,250,255,0.09)"/><rect x="958" y="1502.2" width="1" height="393.0" fill="rgba(240,250,255,0.09)"/><rect x="1136" y="1502.2" width="1" height="393.0" fill="rgba(240,250,255,0.09)"/><rect x="1314" y="1502.2" width="1" height="393.0" fill="rgba(240,250,255,0.09)"/><rect x="1492" y="1502.2" width="1" height="393.0" fill="rgba(240,250,255,0.09)"/><rect x="1670" y="1502.2" width="1" height="393.0" fill="rgba(240,250,255,0.09)"/><rect x="1847" y="1502.2" width="1" height="393.0" fill="rgba(240,250,255,0.09)"/><rect x="2025" y="1502.2" width="1" height="393.0" fill="rgba(240,250,255,0.09)"/><rect x="2203" y="1502.2" width="1" height="393.0" fill="rgba(240,250,255,0.09)"/><rect x="2381" y="1502.2" width="1" height="393.0" fill="rgba(240,250,255,0.09)"/><rect x="2559" y="1502.2" width="1" height="393.0" fill="rgba(240,250,255,0.09)"/><rect x="2737" y="1502.2" width="1" height="393.0" fill="rgba(240,250,255,0.09)"/><rect x="2915" y="1502.2" width="1" height="393.0" fill="rgba(240,250,255,0.09)"/><rect x="3093" y="1502.2" width="1" height="393.0" fill="rgba(240,250,255,0.09)"/><rect x="3271" y="1502.2" width="1" height="393.0" fill="rgba(240,250,255,0.09)"/><rect x="3449" y="1502.2" width="1" height="393.0" fill="rgba(240,250,255,0.09)"/><rect x="3627" y="1502.2" width="1" height="393.0" fill="rgba(240,250,255,0.09)"/><path d="M115.1,1823.9L140.9,1820.6L162.6,1705.0L170.2,1815.4L220.0,1820.6L262.0,1814.0L288.7,1602.2L300.6,1793.0L354.2,1820.5L365.8,1804.8L397.4,1815.2L440.9,1816.8L447.8,1740.3L473.7,1809.3L517.1,1821.0L535.4,1804.0L591.0,1655.7L597.7,1813.0L651.9,1823.9L655.7,1812.7L710.4,1815.2L733.6,1715.2L744.6,1797.6L794.5,1828.4L821.1,1810.7L875.6,1719.5L890.7,1831.0L938.5,1835.7L959.7,1814.4L979.1,1829.1L1029.3,1823.1L1059.4,1789.6L1066.4,1813.8L1124.9,1826.5L1151.0,1807.8L1162.0,1786.3L1205.5,1833.6L1251.0,1835.2L1297.9,1797.4L1308.6,1822.3L1356.4,1750.8L1359.6,1804.6L1418.2,1819.3L1448.0,1780.3L1451.0,1828.2L1491.5,1813.1L1513.8,1837.4L1543.7,1837.0L1582.8,1789.2L1597.9,1822.6L1660.8,1834.4L1674.7,1810.6L1726.9,1820.4L1733.3,1660.2L1777.1,1824.1L1827.5,1794.2L1873.8,1790.2L1881.0,1825.9L1957.3,1816.5L1976.1,1794.1L2011.5,1812.1L2019.3,1614.8L2048.3,1809.7L2084.0,1813.1L2127.4,1803.2L2149.8,1812.0L2163.1,1805.4L2192.1,1816.4L2221.6,1813.9L2240.5,1821.0L2294.1,1823.9L2304.3,1742.5L2333.8,1817.7L2370.1,1824.5L2413.5,1818.6L2423.7,1735.5L2444.8,1810.9L2493.2,1829.6L2507.1,1806.8L2532.9,1823.3L2586.8,1831.6L2590.3,1798.3L2633.8,1830.2L2659.0,1783.2L2684.5,1809.1L2727.4,1741.4L2738.1,1803.8L2770.9,1825.9L2804.2,1810.0L2817.8,1838.2L2861.3,1781.2L2887.4,1814.8L2930.9,1820.6L2954.9,1799.5L2973.5,1817.1L3016.4,1679.8L3035.2,1804.9L3087.9,1829.5L3125.6,1802.9L3143.6,1828.1L3193.7,1787.2L3201.5,1811.5L3243.0,1819.7L3258.9,1829.4L3302.4,1712.3L3314.0,1810.6L3357.5,1838.1L3397.2,1829.7L3418.4,1798.8L3450.8,1827.7L3490.3,1722.2L3494.6,1803.1L3542.2,1820.5L3563.9,1795.9L3585.9,1812.5" stroke="#8AB8FF" stroke-width="2" fill="none" stroke-linejoin="round"/><path d="M115.1,1815.7L122.0,1820.9L162.6,1763.1L170.2,1803.3L216.5,1828.5L262.0,1820.8L288.7,1695.4L310.4,1807.4L357.7,1827.4L368.4,1755.1L390.2,1827.2L440.9,1826.5L447.8,1705.2L473.7,1819.8L517.1,1834.0L535.4,1811.1L591.0,1705.8L597.7,1792.8L645.5,1833.6L678.0,1838.7L708.1,1838.5L733.6,1788.5L751.9,1824.1L795.9,1838.2L821.1,1815.5L875.6,1711.6L890.7,1835.0L934.5,1838.4L959.7,1811.8L979.1,1835.5L1029.3,1825.3L1059.4,1750.4L1066.4,1810.2L1124.9,1831.6L1136.5,1808.0L1162.0,1682.2L1202.6,1827.1L1251.0,1834.6L1286.1,1802.2L1308.6,1822.7L1356.4,1761.8L1359.6,1801.2L1418.2,1816.1L1448.0,1711.7L1455.0,1809.7L1491.5,1807.2L1518.2,1826.8L1547.2,1824.1L1582.8,1783.3L1597.9,1815.2L1660.8,1828.1L1674.7,1801.2L1726.9,1826.5L1733.3,1575.9L1777.1,1832.6L1839.4,1830.7L1853.9,1792.1L1881.0,1838.3L1957.3,1835.8L1971.5,1770.1L2008.6,1827.1L2019.3,1542.6L2048.3,1822.4L2088.3,1828.4L2127.4,1754.4L2138.2,1801.8L2163.1,1782.2L2196.1,1822.6L2213.8,1814.9L2261.6,1822.8L2297.6,1821.0L2304.3,1728.2L2333.8,1817.8L2363.1,1830.2L2413.5,1817.5L2423.7,1741.4L2453.5,1814.2L2493.2,1728.5L2507.1,1814.8L2539.6,1836.9L2572.9,1832.9L2590.3,1750.2L2615.8,1821.7L2659.0,1780.6L2677.3,1805.8L2727.4,1789.3L2738.1,1812.1L2782.2,1834.5L2788.8,1829.5L2828.8,1838.5L2861.3,1769.7L2868.6,1738.5L2897.6,1816.0L2954.9,1787.5L2973.5,1818.7L3016.4,1692.9L3038.1,1792.9L3079.2,1826.9L3122.1,1822.6L3146.5,1798.6L3193.7,1765.3L3201.5,1792.3L3230.5,1801.7L3263.3,1813.2L3302.4,1658.2L3314.0,1798.5L3360.4,1827.5L3393.7,1822.8L3421.9,1782.2L3439.5,1724.7L3461.8,1819.0L3494.6,1771.2L3538.7,1811.9L3570.6,1799.0L3585.9,1813.9" stroke="#73BF69" stroke-width="2" fill="none" stroke-linejoin="round"/><path d="M115.1,1823.8L140.9,1833.1L162.6,1701.9L170.2,1801.1L216.5,1837.8L262.0,1827.5L288.7,1667.4L310.4,1816.3L357.7,1827.7L368.4,1802.5L401.2,1822.5L440.9,1823.7L447.8,1645.9L473.7,1815.3L513.4,1827.2L547.6,1807.1L591.0,1696.0L597.7,1814.9L641.8,1835.7L670.8,1816.8L700.0,1835.0L733.6,1723.6L744.6,1804.7L788.7,1824.7L806.1,1827.5L875.6,1689.4L890.7,1826.9L927.8,1798.8L953.0,1837.3L985.8,1808.2L1022.6,1821.7L1059.4,1760.6L1066.4,1800.6L1124.9,1832.0L1140.0,1801.6L1162.0,1728.4L1202.6,1826.1L1254.5,1834.5L1286.1,1794.5L1308.6,1824.5L1356.4,1731.3L1359.6,1801.6L1410.9,1819.5L1448.0,1745.9L1462.5,1839.3L1477.6,1811.4L1513.8,1838.4L1551.0,1835.9L1582.8,1801.2L1597.9,1830.1L1660.8,1838.6L1674.7,1817.0L1726.9,1833.4L1733.3,1686.3L1777.1,1838.1L1823.4,1804.2L1872.1,1802.8L1881.0,1830.8L1957.3,1832.1L1968.0,1812.9L2015.2,1825.3L2019.3,1663.4L2048.3,1821.6L2099.0,1835.5L2127.4,1795.1L2134.1,1806.3L2163.1,1785.1L2210.9,1749.1L2224.5,1830.6L2264.5,1831.2L2297.6,1836.4L2304.3,1694.8L2333.8,1825.4L2366.6,1838.3L2413.5,1823.4L2423.7,1665.2L2453.5,1817.3L2493.2,1830.0L2507.1,1813.7L2539.6,1824.8L2576.4,1825.8L2590.3,1792.0L2615.8,1824.8L2659.0,1783.8L2677.3,1808.7L2727.4,1794.5L2754.1,1818.2L2757.0,1811.9L2804.2,1828.4L2828.8,1832.1L2840.4,1806.5L2875.2,1746.0L2897.6,1821.2L2948.3,1834.4L2998.4,1821.5L3020.7,1762.9L3045.9,1815.5L3070.5,1838.7L3122.1,1839.1L3146.5,1798.1L3193.7,1759.7L3201.5,1799.7L3252.3,1816.0L3273.4,1759.7L3287.9,1814.3L3314.0,1807.9L3350.3,1838.3L3390.3,1837.9L3425.6,1802.5L3439.5,1730.3L3461.8,1825.4L3494.6,1799.4L3545.9,1818.0L3570.6,1801.1L3585.9,1816.7" stroke="#8AB8FF" stroke-width="2" fill="none" stroke-linejoin="round"/><path d="M115.1,1815.3L140.9,1821.2L162.6,1717.0L170.2,1781.4L202.6,1821.1L262.0,1821.8L288.7,1710.8L310.4,1823.6L357.7,1836.1L368.4,1817.7L405.5,1829.7L445.2,1828.9L447.8,1717.1L473.7,1824.4L517.1,1838.3L543.2,1814.6L591.0,1692.3L597.7,1825.4L630.2,1818.9L666.4,1838.8L700.0,1839.1L733.6,1748.3L751.9,1834.0L794.5,1839.1L814.2,1839.5L875.6,1772.7L890.7,1822.4L934.5,1839.1L975.6,1819.1L985.8,1833.8L1022.6,1831.4L1059.4,1772.5L1066.4,1813.1L1124.9,1837.8L1147.2,1802.6L1162.0,1764.5L1202.6,1831.8L1251.0,1838.6L1297.9,1797.2L1308.6,1830.4L1356.4,1744.6L1359.6,1786.0L1418.2,1829.8L1448.0,1748.7L1451.0,1822.0L1484.9,1838.2L1521.7,1840.2L1547.2,1839.2L1582.8,1796.3L1597.9,1830.8L1660.8,1838.5L1674.7,1806.2L1722.6,1824.0L1733.3,1710.0L1780.5,1831.0L1816.8,1838.6L1863.1,1770.6L1881.0,1838.7L1957.3,1840.4L1971.5,1803.4L2004.2,1835.8L2019.3,1780.3L2048.3,1830.8L2099.0,1839.0L2127.4,1790.3L2134.1,1809.6L2163.1,1789.1L2192.1,1838.2L2217.3,1827.9L2244.3,1838.4L2297.6,1836.1L2304.3,1741.1L2333.8,1833.2L2377.3,1838.9L2413.5,1826.5L2423.7,1742.6L2453.5,1823.5L2493.2,1839.3L2507.1,1814.2L2539.6,1839.3L2572.9,1837.3L2590.3,1779.2L2630.0,1836.1L2659.0,1778.6L2677.3,1806.0L2716.4,1823.9L2731.5,1797.5L2760.7,1829.7L2796.7,1839.3L2828.8,1838.6L2836.1,1837.7L2875.2,1745.0L2897.6,1822.2L2936.7,1839.6L2998.4,1832.3L3016.4,1705.5L3035.2,1826.2L3067.1,1839.0L3122.1,1838.4L3136.6,1772.9L3165.3,1839.4L3205.3,1780.0L3230.5,1822.5L3258.9,1838.7L3302.4,1722.6L3321.8,1818.0L3350.3,1835.1L3385.9,1838.2L3421.9,1791.1L3439.5,1693.5L3461.8,1824.8L3494.6,1796.8L3545.9,1813.8L3570.6,1794.8L3585.9,1812.8" stroke="#FF780A" stroke-width="2" fill="none" stroke-linejoin="round"/><path d="M115.1,1820.8L140.9,1825.5L162.6,1712.6L170.2,1796.5L213.6,1825.2L262.0,1818.9L288.7,1741.6L310.4,1813.3L361.5,1797.4L383.2,1820.2L397.4,1815.8L445.2,1826.0L447.8,1721.7L481.8,1824.3L513.4,1830.0L535.4,1808.1L591.0,1701.6L597.7,1821.4L630.2,1806.0L686.7,1838.8L689.6,1821.1L733.6,1750.2L748.1,1809.8L794.5,1832.9L814.2,1833.7L875.6,1737.2L890.7,1813.4L942.9,1837.3L975.6,1837.7L979.1,1823.1L1022.6,1832.3L1059.4,1764.3L1066.4,1808.2L1124.9,1837.8L1143.8,1798.1L1162.0,1750.1L1205.5,1836.0L1246.7,1839.2L1287.7,1806.9L1308.6,1830.3L1356.4,1765.8L1359.6,1807.9L1418.2,1819.6L1448.0,1758.2L1451.0,1808.7L1487.2,1831.1L1521.7,1833.9L1539.4,1839.1L1582.8,1770.7L1597.9,1816.8L1660.8,1832.7L1674.7,1800.4L1719.1,1816.6L1733.3,1776.3L1777.1,1823.7L1816.8,1825.9L1863.1,1789.2L1881.0,1826.8L1957.3,1834.0L1964.2,1800.3L2011.5,1827.1L2019.3,1702.5L2048.3,1827.5L2099.0,1839.6L2127.4,1769.1L2134.1,1790.3L2163.1,1767.7L2192.1,1836.4L2217.3,1812.1L2244.3,1833.8L2297.6,1827.2L2304.3,1732.6L2333.8,1815.4L2363.1,1830.7L2408.0,1826.4L2423.7,1706.5L2453.5,1819.7L2493.2,1836.6L2507.1,1807.7L2546.8,1834.0L2586.8,1838.3L2590.3,1799.7L2615.8,1825.7L2659.0,1784.1L2681.6,1810.4L2727.4,1786.8L2738.1,1809.6L2764.2,1824.2L2785.4,1819.1L2828.8,1833.6L2861.3,1717.3L2883.1,1813.0L2930.9,1827.7L2954.9,1807.3L2977.3,1818.4L3016.4,1752.3L3035.2,1818.8L3093.7,1839.0L3118.4,1793.5L3146.5,1679.5L3165.3,1810.9L3201.5,1796.7L3230.5,1819.4L3273.4,1787.6L3302.4,1715.8L3314.0,1812.9L3354.6,1838.3L3390.3,1838.3L3411.1,1814.8L3443.9,1778.1L3490.3,1740.6L3494.6,1812.3L3535.2,1820.2L3579.3,1807.2L3585.9,1822.5" stroke="#F2495C" stroke-width="2" fill="none" stroke-linejoin="round"/><path d="M115.1,1830.4L140.9,1833.7L162.6,1678.2L170.2,1800.9L207.8,1838.1L262.0,1835.2L288.7,1714.1L310.4,1824.1L357.7,1834.3L368.4,1811.1L401.2,1828.4L445.2,1827.2L447.8,1742.5L473.7,1812.2L507.0,1832.6L547.6,1800.6L591.0,1725.9L597.7,1812.9L630.2,1806.3L660.0,1830.0L710.4,1823.3L733.6,1755.6L748.1,1808.3L788.7,1827.5L814.2,1829.0L875.6,1713.4L890.7,1833.6L923.5,1820.6L975.6,1836.0L982.3,1818.6L1037.1,1819.8L1059.4,1761.5L1066.4,1794.7L1124.9,1837.6L1143.8,1790.8L1162.0,1744.6L1198.8,1825.5L1242.9,1838.6L1297.9,1782.1L1312.4,1821.2L1356.4,1745.4L1359.6,1791.6L1410.9,1811.6L1448.0,1750.1L1462.5,1802.7L1487.2,1801.1L1518.2,1829.8L1557.3,1805.8L1582.8,1791.9L1597.9,1818.1L1671.0,1804.6L1700.2,1820.4L1726.9,1816.8L1733.3,1674.6L1777.1,1828.2L1827.5,1765.5L1849.5,1811.7L1881.0,1837.9L1902.8,1820.7L1968.0,1811.5L2015.2,1830.7L2019.3,1706.3L2048.3,1829.7L2088.3,1835.4L2127.4,1769.2L2141.9,1810.9L2163.1,1795.8L2192.1,1823.1L2217.3,1797.6L2240.5,1819.7L2297.6,1820.0L2304.3,1725.4L2333.8,1812.2L2363.1,1822.1L2413.5,1818.2L2427.4,1755.5L2453.5,1806.8L2488.8,1829.8L2510.6,1816.1L2551.2,1833.8L2568.5,1834.1L2590.3,1763.2L2626.5,1825.0L2659.0,1798.5L2673.5,1809.2L2724.5,1813.8L2731.5,1800.8L2778.7,1821.7L2785.4,1816.7L2825.1,1827.1L2864.8,1792.4L2875.2,1757.0L2897.6,1814.1L2948.3,1823.7L2998.4,1816.5L3016.4,1687.6L3035.2,1812.6L3082.1,1830.6L3122.1,1830.1L3136.6,1801.1L3193.7,1774.7L3201.5,1801.9L3252.3,1816.3L3263.3,1827.4L3302.4,1717.2L3314.0,1805.9L3357.5,1837.0L3385.9,1835.0L3425.6,1797.9L3439.5,1714.4L3461.8,1824.8L3494.6,1790.4L3545.9,1814.7L3570.6,1791.8L3585.9,1811.9" stroke="#5794F2" stroke-width="2" fill="none" stroke-linejoin="round"/><path d="M115.1,1829.0L140.9,1833.2L162.6,1723.8L170.2,1811.9L202.6,1838.7L262.0,1834.7L288.7,1756.4L310.4,1827.1L357.7,1838.2L368.4,1811.8L397.4,1829.9L440.9,1833.0L447.8,1696.1L473.7,1821.9L517.1,1839.2L539.7,1808.2L591.0,1660.2L597.7,1821.8L630.2,1838.9L686.7,1839.4L703.2,1837.0L733.6,1690.8L744.6,1813.2L774.2,1838.1L814.2,1838.7L875.6,1692.3L890.7,1838.5L938.5,1822.8L953.0,1836.6L979.1,1816.9L1022.6,1826.0L1059.4,1771.5L1066.4,1808.4L1124.9,1820.4L1143.8,1800.8L1162.0,1757.6L1202.6,1826.4L1246.7,1833.2L1293.5,1786.6L1308.6,1825.9L1356.4,1733.5L1359.6,1794.0L1418.2,1822.1L1448.0,1769.7L1455.0,1815.6L1481.1,1810.0L1521.7,1838.1L1539.4,1838.6L1582.8,1788.6L1597.9,1825.0L1660.8,1830.8L1674.7,1806.2L1719.1,1821.8L1733.3,1687.0L1777.1,1829.4L1827.5,1835.9L1867.5,1776.7L1881.0,1829.5L1957.3,1830.4L1971.5,1797.3L2015.2,1819.4L2019.3,1633.5L2048.3,1820.1L2099.0,1829.3L2127.4,1768.3L2134.1,1788.0L2163.1,1758.2L2196.1,1828.5L2217.3,1813.5L2240.5,1825.2L2297.6,1824.8L2304.3,1731.8L2333.8,1815.2L2370.1,1830.3L2413.5,1816.6L2423.7,1726.3L2453.5,1814.3L2493.2,1832.0L2507.1,1804.2L2543.3,1836.0L2572.9,1839.4L2590.3,1779.9L2615.8,1832.6L2659.0,1761.1L2677.3,1809.8L2727.4,1798.7L2754.1,1825.9L2757.0,1817.9L2793.2,1834.3L2828.8,1838.3L2850.6,1798.2L2875.2,1720.7L2897.6,1826.1L2948.3,1833.8L2998.4,1819.9L3016.4,1687.3L3035.2,1815.6L3082.1,1832.7L3100.4,1821.0L3128.5,1836.3L3193.7,1771.4L3201.5,1803.0L3247.3,1814.1L3263.3,1825.0L3302.4,1746.3L3331.4,1833.8L3346.5,1817.5L3393.7,1838.2L3425.6,1790.0L3439.5,1723.2L3461.8,1826.8L3494.6,1792.7L3545.9,1818.4L3563.9,1767.4L3585.9,1811.1" stroke="#B877D9" stroke-width="2" fill="none" stroke-linejoin="round"/><path d="M115.1,1826.8L140.9,1828.4L162.6,1729.1L170.2,1811.3L202.6,1826.4L246.1,1825.2L288.7,1714.7L310.4,1818.3L361.5,1811.7L387.3,1812.1L401.2,1821.6L445.2,1821.5L447.8,1726.0L473.7,1824.8L517.1,1832.0L539.7,1813.6L591.0,1725.5L597.7,1816.5L638.9,1817.1L655.7,1837.9L694.0,1835.9L733.6,1748.4L744.6,1808.8L788.7,1831.1L814.2,1834.3L875.6,1735.8L890.7,1831.2L934.5,1812.8L956.8,1839.6L979.1,1807.4L1033.6,1824.3L1059.4,1765.4L1070.4,1802.2L1124.9,1828.9L1147.2,1803.0L1162.0,1766.0L1198.8,1823.5L1239.4,1834.2L1293.5,1788.0L1312.4,1816.3L1356.4,1752.2L1359.6,1795.6L1415.3,1810.0L1448.0,1764.5L1455.0,1818.6L1481.1,1798.9L1521.7,1823.0L1539.4,1833.8L1582.8,1788.0L1597.9,1817.7L1660.8,1829.2L1674.7,1809.7L1715.3,1828.0L1733.3,1714.2L1777.1,1833.8L1827.5,1737.1L1849.5,1802.7L1881.0,1826.9L1957.3,1827.4L1971.5,1785.7L2001.3,1819.2L2019.3,1693.2L2048.3,1819.1L2099.0,1829.4L2127.4,1771.3L2134.1,1790.3L2163.1,1764.3L2192.1,1822.8L2217.3,1812.3L2251.2,1827.2L2297.6,1825.9L2304.3,1776.6L2341.4,1824.6L2359.3,1835.1L2408.0,1826.6L2423.7,1744.5L2444.8,1813.5L2493.2,1829.1L2507.1,1810.3L2543.3,1811.3L2561.3,1838.2L2590.3,1810.7L2626.5,1838.1L2659.0,1810.3L2681.6,1824.0L2727.4,1813.5L2746.8,1826.1L2757.0,1821.9L2807.7,1831.2L2821.6,1832.3L2854.1,1793.3L2875.2,1760.3L2897.6,1815.3L2954.9,1806.7L2977.3,1821.5L3016.4,1710.6L3035.2,1812.1L3067.1,1830.6L3106.8,1838.1L3146.5,1808.5L3186.5,1830.6L3205.3,1800.4L3252.3,1813.2L3258.9,1823.6L3302.4,1790.7L3318.4,1810.2L3371.4,1838.4L3393.7,1836.3L3425.6,1791.1L3439.5,1757.8L3490.3,1724.8L3494.6,1796.7L3545.9,1818.3L3570.6,1789.4L3585.9,1813.8" stroke="#705DA0" stroke-width="2" fill="none" stroke-linejoin="round"/><path d="M115.1,1819.8L140.9,1819.6L162.6,1730.1L170.2,1808.6L224.4,1827.5L262.0,1823.4L288.7,1723.9L310.4,1807.4L357.7,1833.1L376.5,1776.8L390.2,1826.1L445.2,1828.2L447.8,1783.4L478.0,1829.1L517.1,1832.7L539.7,1809.6L591.0,1717.4L597.7,1818.0L638.9,1823.0L670.8,1810.0L700.0,1821.0L733.6,1746.5L744.6,1804.9L788.7,1817.7L814.2,1817.1L875.6,1723.4L890.7,1821.6L942.9,1809.9L969.3,1837.3L1008.1,1804.9L1022.6,1826.7L1059.4,1724.8L1066.4,1799.3L1124.9,1831.1L1136.5,1798.3L1162.0,1765.2L1202.6,1827.8L1251.0,1827.2L1293.5,1790.8L1315.9,1816.9L1356.4,1682.1L1359.6,1784.9L1418.2,1811.9L1448.0,1756.3L1462.5,1827.7L1498.8,1793.8L1518.2,1822.2L1547.2,1827.8L1568.9,1801.1L1605.7,1813.4L1660.8,1829.0L1674.7,1806.8L1715.3,1824.9L1733.3,1705.7L1777.1,1834.4L1830.7,1824.2L1872.1,1775.0L1881.0,1835.3L1957.3,1833.3L1971.5,1802.0L2011.5,1826.5L2019.3,1681.3L2048.3,1824.1L2088.3,1834.9L2127.4,1795.9L2141.9,1813.6L2163.1,1778.6L2192.1,1830.8L2217.3,1825.1L2240.5,1833.2L2291.2,1832.8L2304.3,1735.9L2333.8,1828.0L2373.8,1835.5L2413.5,1828.8L2423.7,1736.6L2453.5,1820.7L2503.3,1811.0L2517.8,1836.4L2546.8,1825.2L2586.8,1838.3L2590.3,1769.0L2615.8,1829.7L2659.0,1785.1L2673.5,1805.8L2716.4,1827.5L2731.5,1797.1L2778.7,1830.4L2807.7,1806.0L2825.1,1832.3L2864.8,1790.9L2875.2,1757.5L2897.6,1819.0L2948.3,1825.7L2998.4,1814.6L3016.4,1703.0L3035.2,1814.5L3082.1,1830.4L3115.5,1837.9L3132.9,1798.2L3193.7,1748.7L3205.3,1803.2L3234.3,1812.9L3258.9,1823.2L3302.4,1746.6L3314.0,1808.5L3354.6,1835.7L3393.7,1832.3L3421.9,1799.2L3439.5,1765.1L3490.3,1659.9L3494.6,1778.3L3531.4,1810.4L3574.9,1786.0L3585.9,1810.5" stroke="#37872D" stroke-width="2" fill="none" stroke-linejoin="round"/><path d="M115.1,1824.8L140.9,1831.7L162.6,1729.7L173.6,1820.4L207.8,1832.3L262.0,1831.1L288.7,1706.9L300.6,1803.3L336.0,1823.5L368.4,1786.5L390.2,1821.1L440.9,1818.5L447.8,1764.9L478.0,1814.0L513.4,1820.1L535.4,1808.0L591.0,1763.0L597.7,1819.4L638.9,1805.8L675.1,1838.4L710.4,1834.2L733.6,1754.4L751.9,1824.2L801.7,1834.8L821.1,1816.0L875.6,1780.7L890.7,1835.5L931.6,1819.6L959.7,1834.5L979.1,1815.9L1029.3,1820.6L1059.4,1770.5L1066.4,1801.1L1124.9,1820.6L1136.5,1801.1L1162.0,1746.8L1202.6,1803.2L1251.0,1821.9L1293.5,1789.6L1308.6,1815.1L1356.4,1756.6L1359.6,1796.3L1418.2,1811.6L1448.0,1766.1L1466.0,1825.4L1491.5,1792.9L1507.2,1830.0L1547.2,1822.3L1582.8,1788.3L1597.9,1812.5L1660.8,1819.3L1679.1,1807.4L1722.6,1813.0L1733.3,1731.5L1777.1,1805.5L1835.0,1824.3L1863.1,1788.5L1881.0,1826.6L1957.3,1820.9L1964.2,1787.3L2015.2,1818.2L2019.3,1729.8L2053.5,1812.5L2099.0,1824.0L2127.4,1787.2L2134.1,1801.3L2163.1,1782.4L2192.1,1819.2L2213.8,1818.5L2247.1,1827.0L2297.6,1827.7L2304.3,1734.7L2333.8,1824.2L2377.3,1831.7L2408.0,1825.4L2423.7,1790.9L2453.5,1822.1L2493.2,1834.7L2507.1,1806.3L2532.9,1832.8L2586.8,1836.4L2594.1,1803.0L2626.5,1831.3L2659.0,1792.1L2677.3,1811.2L2727.4,1780.7L2738.1,1814.5L2782.2,1835.9L2785.4,1826.1L2825.1,1838.9L2850.6,1799.2L2875.2,1753.7L2897.6,1813.8L2936.7,1824.5L2991.8,1816.3L3016.4,1682.8L3035.2,1808.4L3070.5,1823.0L3111.1,1823.3L3132.9,1799.0L3193.7,1776.7L3201.5,1799.5L3252.3,1811.4L3258.9,1826.2L3302.4,1788.9L3331.4,1824.1L3350.3,1838.0L3393.7,1837.8L3411.1,1810.8L3439.5,1744.6L3490.3,1711.8L3494.6,1762.9L3538.7,1816.0L3563.9,1792.2L3585.9,1820.5" stroke="#FADE2A" stroke-width="2" fill="none" stroke-linejoin="round"/><path d="M115.1,1826.3L140.9,1820.6L162.6,1708.7L170.2,1797.9L216.5,1833.9L254.8,1832.1L288.7,1759.9L310.4,1818.2L357.7,1836.4L368.4,1804.9L393.9,1836.4L440.9,1830.6L447.8,1706.9L473.7,1829.2L523.8,1805.3L547.6,1826.0L591.0,1631.2L597.7,1811.0L630.2,1784.5L675.1,1843.1L703.2,1842.2L733.6,1746.0L755.3,1822.3L782.9,1838.4L814.2,1838.1L875.6,1661.8L890.7,1837.3L927.8,1817.7L969.3,1842.0L979.1,1805.8L1022.6,1825.4L1059.4,1770.8L1084.9,1812.4L1124.9,1833.2L1136.5,1795.8L1162.0,1758.6L1202.6,1840.0L1242.9,1838.1L1293.5,1788.5L1312.4,1818.3L1356.4,1778.9L1359.6,1804.2L1395.0,1818.9L1440.5,1838.2L1455.0,1764.0L1477.6,1836.9L1507.2,1796.1L1547.2,1830.6L1582.8,1662.8L1597.9,1813.4L1671.0,1792.2L1700.2,1789.8L1719.1,1820.4L1733.3,1727.3L1793.6,1832.4L1823.4,1750.7L1856.8,1812.5L1895.5,1798.0L1957.3,1836.6L1971.5,1800.0L2008.6,1822.2L2019.3,1674.1L2048.3,1823.6L2099.0,1830.9L2127.4,1782.5L2138.2,1810.8L2170.3,1827.0L2210.9,1793.1L2228.9,1827.4L2240.5,1835.4L2294.1,1836.1L2304.3,1739.3L2333.8,1821.4L2359.3,1830.0L2413.5,1820.5L2423.7,1722.4L2453.5,1810.8L2503.3,1791.9L2521.3,1836.3L2536.1,1795.8L2572.9,1841.6L2590.3,1771.7L2623.6,1839.4L2659.0,1782.5L2688.3,1809.1L2716.4,1829.0L2731.5,1788.9L2767.7,1838.4L2807.7,1811.3L2828.8,1843.1L2836.1,1785.9L2868.6,1635.7L2897.6,1831.2L2954.9,1803.1L2991.8,1827.0L3016.4,1614.8L3035.2,1825.1L3093.7,1838.4L3118.4,1767.8L3150.2,1837.7L3157.5,1775.1L3201.5,1814.8L3243.0,1829.3L3280.7,1828.7L3302.4,1708.7L3314.0,1820.0L3367.6,1842.9L3374.9,1815.1L3407.4,1819.6L3439.5,1615.5L3461.8,1833.6L3498.1,1783.8L3542.2,1819.5L3570.6,1794.9L3585.9,1819.7" stroke="#447EBC" stroke-width="2" fill="none" stroke-linejoin="round"/><path d="M115.1,1823.5L140.9,1827.9L162.6,1724.3L170.2,1807.3L202.6,1822.8L250.4,1819.6L288.7,1724.9L303.5,1802.9L357.7,1815.0L368.4,1777.9L390.2,1816.8L440.9,1822.4L447.8,1722.5L473.7,1820.1L509.9,1832.0L535.4,1815.2L591.0,1741.2L597.7,1792.3L634.5,1838.9L666.4,1815.1L708.1,1836.1L733.6,1751.6L751.9,1812.9L794.5,1825.7L821.1,1802.4L875.6,1751.6L890.7,1822.3L949.0,1827.2L971.9,1805.8L982.3,1822.7L1015.3,1804.2L1059.4,1774.6L1066.4,1800.0L1124.9,1824.7L1136.5,1799.7L1162.0,1775.9L1198.8,1828.2L1254.5,1827.6L1297.9,1798.0L1308.6,1822.2L1356.4,1765.7L1359.6,1803.7L1418.2,1823.8L1448.0,1769.9L1451.0,1808.5L1498.8,1807.1L1507.2,1828.9L1543.7,1835.6L1582.8,1769.6L1597.9,1811.4L1660.8,1829.0L1674.7,1800.3L1726.9,1819.5L1733.3,1704.0L1777.1,1832.8L1823.4,1832.6L1873.8,1787.6L1881.0,1823.1L1957.3,1833.8L1968.0,1803.5L2015.2,1826.1L2019.3,1729.1L2048.3,1824.6L2088.3,1836.0L2127.4,1791.3L2141.9,1808.6L2163.1,1793.7L2202.8,1786.6L2217.3,1823.5L2240.5,1819.1L2294.1,1823.2L2304.3,1735.9L2333.8,1822.0L2370.1,1825.9L2408.0,1821.5L2423.7,1741.8L2453.5,1813.7L2488.8,1820.8L2507.1,1803.9L2546.8,1827.6L2581.6,1824.3L2590.3,1804.5L2626.5,1818.8L2659.0,1785.3L2684.5,1810.2L2727.4,1794.5L2754.1,1815.3L2757.0,1808.9L2804.2,1826.0L2832.9,1698.4L2840.4,1815.0L2872.3,1745.6L2913.5,1820.3L2954.9,1798.3L2970.0,1814.5L3016.4,1710.8L3035.2,1804.8L3093.7,1827.5L3125.6,1765.5L3136.6,1818.3L3157.5,1766.4L3205.3,1774.1L3234.3,1796.8L3258.9,1816.9L3302.4,1727.2L3331.4,1810.3L3367.6,1834.2L3393.7,1827.9L3407.4,1807.8L3439.5,1733.0L3490.3,1715.2L3494.6,1793.0L3545.9,1815.2L3563.9,1798.8L3585.9,1814.0" stroke="#C15C17" stroke-width="2" fill="none" stroke-linejoin="round"/><path d="M115.1,1823.1L140.9,1833.6L162.6,1730.4L170.2,1794.1L202.6,1836.5L262.0,1834.5L288.7,1700.7L310.4,1824.1L354.2,1834.0L368.4,1787.1L390.2,1824.4L445.2,1821.4L447.8,1728.2L478.0,1824.4L509.9,1825.7L535.4,1810.4L591.0,1730.8L597.7,1812.0L645.5,1832.1L660.0,1817.2L694.0,1826.2L733.6,1760.2L748.1,1811.2L795.9,1827.7L821.1,1806.1L875.6,1741.3L890.7,1828.7L938.5,1821.9L975.6,1830.0L1008.1,1815.9L1037.1,1824.8L1059.4,1771.7L1077.7,1802.4L1124.9,1831.1L1136.5,1808.4L1162.0,1751.6L1198.8,1815.0L1242.9,1826.9L1286.1,1808.9L1308.6,1820.8L1356.4,1758.1L1363.1,1790.3L1415.3,1816.3L1448.0,1762.7L1451.0,1810.5L1495.6,1825.2L1507.2,1817.5L1547.2,1829.4L1582.8,1779.9L1597.9,1811.9L1660.8,1824.6L1674.7,1799.5L1726.9,1821.0L1733.3,1710.1L1777.1,1828.0L1816.8,1827.9L1863.1,1788.3L1885.4,1826.3L1902.8,1812.4L1964.2,1804.8L2004.2,1817.6L2019.3,1781.5L2053.5,1814.5L2092.1,1818.8L2127.4,1780.6L2138.2,1808.6L2163.1,1798.4L2196.1,1819.9L2217.3,1803.7L2240.5,1822.9L2297.6,1815.7L2304.3,1744.1L2333.8,1818.9L2373.8,1813.2L2408.0,1821.8L2423.7,1747.3L2444.8,1811.8L2488.8,1832.0L2507.1,1811.8L2551.2,1839.3L2576.4,1812.6L2590.3,1793.3L2623.6,1835.4L2659.0,1793.3L2673.5,1813.0L2727.4,1792.1L2735.2,1814.0L2778.7,1833.6L2807.7,1793.7L2825.1,1835.4L2840.4,1810.5L2875.2,1757.9L2897.6,1826.7L2954.9,1802.9L2977.3,1818.6L3016.4,1702.2L3035.2,1817.8L3082.1,1828.6L3118.4,1829.0L3146.5,1790.6L3165.3,1825.2L3208.2,1791.3L3238.7,1808.7L3258.9,1822.6L3302.4,1742.2L3318.4,1807.9L3367.6,1830.2L3385.9,1806.1L3404.5,1814.2L3439.5,1763.0L3490.3,1736.1L3494.6,1798.4L3535.2,1809.8L3570.6,1795.7L3585.9,1809.6" stroke="#890F02" stroke-width="2" fill="none" stroke-linejoin="round"/><path d="M115.1,1826.4L140.9,1836.6L162.6,1760.7L176.5,1815.7L216.5,1838.6L262.0,1833.6L288.7,1704.7L310.4,1826.6L357.7,1838.3L368.4,1807.9L390.2,1832.8L440.9,1830.4L447.8,1761.3L473.7,1817.8L509.9,1832.0L539.7,1810.7L591.0,1713.5L597.7,1824.6L624.4,1810.4L655.7,1838.2L708.1,1831.2L733.6,1743.8L744.6,1816.7L778.5,1827.4L806.1,1827.9L875.6,1768.4L890.7,1821.9L927.8,1830.8L975.6,1815.5L979.1,1834.4L1019.1,1805.0L1048.7,1819.0L1077.7,1797.7L1124.9,1829.2L1140.0,1800.9L1162.0,1744.0L1205.5,1837.3L1251.0,1835.1L1297.9,1801.1L1308.6,1833.4L1356.4,1778.3L1359.6,1813.5L1418.2,1828.0L1448.0,1772.1L1451.0,1825.2L1491.5,1822.7L1513.8,1839.4L1547.2,1839.1L1582.8,1777.1L1597.9,1826.5L1660.8,1839.5L1674.7,1808.5L1711.0,1833.0L1733.3,1709.8L1777.1,1839.2L1835.0,1836.4L1867.5,1802.0L1881.0,1837.4L1957.3,1838.1L1968.0,1816.5L2015.2,1832.2L2019.3,1700.3L2048.3,1816.0L2076.7,1835.1L2127.4,1800.0L2138.2,1812.9L2163.1,1758.8L2196.1,1832.7L2217.3,1822.0L2251.2,1830.3L2297.6,1832.8L2304.3,1779.0L2333.8,1831.5L2363.1,1837.1L2413.5,1826.7L2423.7,1757.6L2453.5,1819.3L2496.1,1803.6L2510.6,1823.2L2532.9,1816.1L2564.8,1839.0L2590.3,1777.4L2620.1,1817.8L2659.0,1785.8L2688.3,1811.5L2720.7,1815.7L2735.2,1802.4L2764.2,1820.7L2800.4,1825.8L2825.1,1828.5L2861.3,1790.6L2875.2,1756.5L2897.6,1822.4L2954.9,1807.2L2998.4,1816.3L3016.4,1708.3L3035.2,1812.7L3067.1,1829.0L3122.1,1830.9L3150.2,1790.4L3165.3,1837.9L3205.3,1794.6L3234.3,1812.0L3258.9,1822.3L3302.4,1748.8L3314.0,1803.1L3364.2,1839.6L3397.2,1827.7L3425.6,1792.7L3439.5,1756.7L3461.8,1827.4L3494.6,1788.9L3523.6,1809.3L3556.1,1827.7L3585.9,1814.8" stroke="#0A437C" stroke-width="2" fill="none" stroke-linejoin="round"/></svg>
<div class="t" style="right:3628.0px;top:1500.1px;font-size:24.2px;color:#ccccdc;text-align:right;">12.5</div>
<div class="t" style="right:3628.0px;top:1560.4px;font-size:24.2px;color:#ccccdc;text-align:right;">10</div>
<div class="t" style="right:3628.0px;top:1620.7px;font-size:24.2px;color:#ccccdc;text-align:right;">7.5</div>
<div class="t" style="right:3628.0px;top:1681.0px;font-size:24.2px;color:#ccccdc;text-align:right;">5</div>
<div class="t" style="right:3628.0px;top:1741.3px;font-size:24.2px;color:#ccccdc;text-align:right;">2.5</div>
<div class="t" style="right:3628.0px;top:1801.6px;font-size:24.2px;color:#ccccdc;text-align:right;">0</div>
<div class="t" style="right:3628.0px;top:1861.9px;font-size:24.2px;color:#ccccdc;text-align:right;">-2.5</div>
<div class="t" style="left:-53.5px;width:600px;top:1904.7px;font-size:24.2px;color:#ccccdc;text-align:center;">17:11:45</div>
<div class="t" style="left:124.4px;width:600px;top:1904.7px;font-size:24.2px;color:#ccccdc;text-align:center;">17:12:00</div>
<div class="t" style="left:302.4px;width:600px;top:1904.7px;font-size:24.2px;color:#ccccdc;text-align:center;">17:12:15</div>
<div class="t" style="left:480.3px;width:600px;top:1904.7px;font-size:24.2px;color:#ccccdc;text-align:center;">17:12:30</div>
<div class="t" style="left:658.3px;width:600px;top:1904.7px;font-size:24.2px;color:#ccccdc;text-align:center;">17:12:45</div>
<div class="t" style="left:836.2px;width:600px;top:1904.7px;font-size:24.2px;color:#ccccdc;text-align:center;">17:13:00</div>
<div class="t" style="left:1014.1px;width:600px;top:1904.7px;font-size:24.2px;color:#ccccdc;text-align:center;">17:13:15</div>
<div class="t" style="left:1192.1px;width:600px;top:1904.7px;font-size:24.2px;color:#ccccdc;text-align:center;">17:13:30</div>
<div class="t" style="left:1370.0px;width:600px;top:1904.7px;font-size:24.2px;color:#ccccdc;text-align:center;">17:13:45</div>
<div class="t" style="left:1548.0px;width:600px;top:1904.7px;font-size:24.2px;color:#ccccdc;text-align:center;">17:14:00</div>
<div class="t" style="left:1725.9px;width:600px;top:1904.7px;font-size:24.2px;color:#ccccdc;text-align:center;">17:14:15</div>
<div class="t" style="left:1903.8px;width:600px;top:1904.7px;font-size:24.2px;color:#ccccdc;text-align:center;">17:14:30</div>
<div class="t" style="left:2081.8px;width:600px;top:1904.7px;font-size:24.2px;color:#ccccdc;text-align:center;">17:14:45</div>
<div class="t" style="left:2259.7px;width:600px;top:1904.7px;font-size:24.2px;color:#ccccdc;text-align:center;">17:15:00</div>
<div class="t" style="left:2437.7px;width:600px;top:1904.7px;font-size:24.2px;color:#ccccdc;text-align:center;">17:15:15</div>
<div class="t" style="left:2615.6px;width:600px;top:1904.7px;font-size:24.2px;color:#ccccdc;text-align:center;">17:15:30</div>
<div class="t" style="left:2793.5px;width:600px;top:1904.7px;font-size:24.2px;color:#ccccdc;text-align:center;">17:15:45</div>
<div class="t" style="left:2971.5px;width:600px;top:1904.7px;font-size:24.2px;color:#ccccdc;text-align:center;">17:16:00</div>
<div class="t" style="left:3149.4px;width:600px;top:1904.7px;font-size:24.2px;color:#ccccdc;text-align:center;">17:16:15</div>
<div class="t" style="left:3327.4px;width:600px;top:1904.7px;font-size:24.2px;color:#ccccdc;text-align:center;">17:16:30</div>
<div class="abs" style="left:55px;top:1953.9px;width:28px;height:8px;border-radius:4px;background:#8AB8FF"></div>
<div class="t" style="left:99.5px;top:1944.4px;font-size:25.2px;color:#ccccdc;letter-spacing:-0.3px">r1_score</div>
<div class="abs" style="left:215px;top:1953.9px;width:28px;height:8px;border-radius:4px;background:#73BF69"></div>
<div class="t" style="left:259.5px;top:1944.4px;font-size:25.2px;color:#ccccdc;letter-spacing:-0.3px">r2_score</div>
<div class="abs" style="left:378.5px;top:1953.9px;width:28px;height:8px;border-radius:4px;background:#8AB8FF"></div>
<div class="t" style="left:423.0px;top:1944.4px;font-size:25.2px;color:#ccccdc;letter-spacing:-0.3px">r3_score</div>
<div class="abs" style="left:542px;top:1953.9px;width:28px;height:8px;border-radius:4px;background:#FF780A"></div>
<div class="t" style="left:586.5px;top:1944.4px;font-size:25.2px;color:#ccccdc;letter-spacing:-0.3px">r4_score</div>
<div class="abs" style="left:706px;top:1953.9px;width:28px;height:8px;border-radius:4px;background:#F2495C"></div>
<div class="t" style="left:750.5px;top:1944.4px;font-size:25.2px;color:#ccccdc;letter-spacing:-0.3px">r5_score</div>
<div class="abs" style="left:868.5px;top:1953.9px;width:28px;height:8px;border-radius:4px;background:#5794F2"></div>
<div class="t" style="left:913.0px;top:1944.4px;font-size:25.2px;color:#ccccdc;letter-spacing:-0.3px">r6_score</div>
<div class="abs" style="left:1031px;top:1953.9px;width:28px;height:8px;border-radius:4px;background:#B877D9"></div>
<div class="t" style="left:1075.5px;top:1944.4px;font-size:25.2px;color:#ccccdc;letter-spacing:-0.3px">r7_score</div>
<div class="abs" style="left:1190px;top:1953.9px;width:28px;height:8px;border-radius:4px;background:#705DA0"></div>
<div class="t" style="left:1234.5px;top:1944.4px;font-size:25.2px;color:#ccccdc;letter-spacing:-0.3px">r8_score</div>
<div class="abs" style="left:1353px;top:1953.9px;width:28px;height:8px;border-radius:4px;background:#37872D"></div>
<div class="t" style="left:1397.5px;top:1944.4px;font-size:25.2px;color:#ccccdc;letter-spacing:-0.3px">r9_score</div>
<div class="abs" style="left:1516px;top:1953.9px;width:28px;height:8px;border-radius:4px;background:#FADE2A"></div>
<div class="t" style="left:1560.5px;top:1944.4px;font-size:25.2px;color:#ccccdc;letter-spacing:-0.3px">r10_score</div>
<div class="abs" style="left:1690px;top:1953.9px;width:28px;height:8px;border-radius:4px;background:#447EBC"></div>
<div class="t" style="left:1734.5px;top:1944.4px;font-size:25.2px;color:#ccccdc;letter-spacing:-0.3px">r11_score</div>
<div class="abs" style="left:1861px;top:1953.9px;width:28px;height:8px;border-radius:4px;background:#C15C17"></div>
<div class="t" style="left:1905.5px;top:1944.4px;font-size:25.2px;color:#ccccdc;letter-spacing:-0.3px">r12_score</div>
<div class="abs" style="left:2035.5px;top:1953.9px;width:28px;height:8px;border-radius:4px;background:#890F02"></div>
<div class="t" style="left:2080.0px;top:1944.4px;font-size:25.2px;color:#ccccdc;letter-spacing:-0.3px">r13_score</div>
<div class="abs" style="left:2211px;top:1953.9px;width:28px;height:8px;border-radius:4px;background:#0A437C"></div>
<div class="t" style="left:2255.5px;top:1944.4px;font-size:25.2px;color:#ccccdc;letter-spacing:-0.3px">r14_score</div>
</body></html>
